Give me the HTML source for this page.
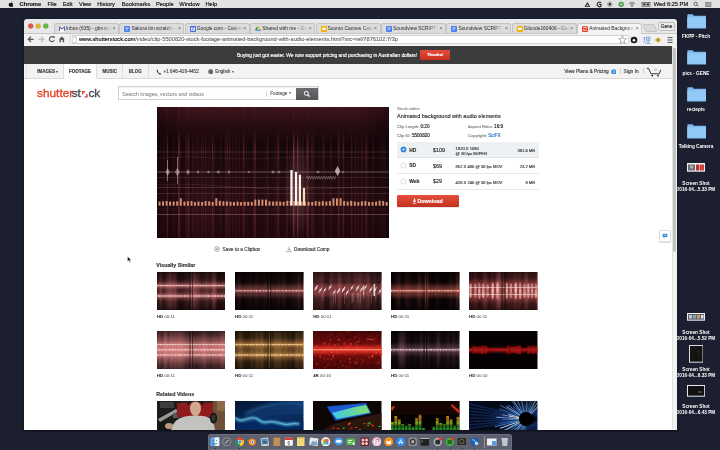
<!DOCTYPE html>
<html><head><meta charset="utf-8">
<style>
*{margin:0;padding:0;box-sizing:border-box}
html,body{width:720px;height:450px;overflow:hidden}
body{-webkit-font-smoothing:antialiased;will-change:transform;background:#1b1f30;font-family:"Liberation Sans",sans-serif;position:relative}
.a{position:absolute}
.t{position:absolute;white-space:nowrap;line-height:1;-webkit-text-stroke-width:.15px}
.mb{font-size:5.7px;color:#111;top:1.9px}
.tab{position:absolute;top:23px;height:10px;width:65px;background:#dcdcdc;border:1px solid #c4c4c4;border-bottom:none;border-radius:2.5px 2.5px 0 0}
.tab .ic{position:absolute;left:4px;top:2px;width:6px;height:5.5px;border-radius:1px}
.tab .tx{position:absolute;left:11px;top:1.9px;font-size:4.9px;color:#262626;white-space:nowrap;overflow:hidden;width:46px;line-height:1.05}
.tab .x{position:absolute;left:57.5px;top:2px;font-size:5px;color:#666;line-height:1}
.sm{font-size:4.4px;color:#555}
.th{position:absolute;width:68.5px;height:38px;overflow:hidden}
.lab{position:absolute;font-size:4.4px;color:#3c3c3c;line-height:1;white-space:nowrap}
.lab b{color:#222}
.di{position:absolute;top:437px;width:9.5px;height:9.5px;border-radius:2px}
.dl{position:absolute;font-size:4.7px;font-weight:bold;color:#fff;text-align:center;width:60px;line-height:1;white-space:nowrap}
</style></head><body>
<div class="a" style="left:207.8px;top:433.8px;width:304px;height:16.5px;background:#5d606f;border:.5px solid #6c6f7e;border-radius:2px 2px 0 0"></div>
<svg class="a" style="left:210.25px;top:436.8px" width="9.5" height="9.5" viewBox="0 0 9.5 9.5"><rect x=".3" y=".3" width="9" height="9" rx="1.5" fill="#5aa8f0"/><rect x="4.6" y=".3" width="4.7" height="9" rx="1" fill="#e8f0f8"/><path d="M3 3V4M6.5 3V4M2.5 6.5Q4.8 8 7 6.5" stroke="#123" stroke-width=".5" fill="none"/></svg>
<svg class="a" style="left:222.45px;top:436.8px" width="9.5" height="9.5" viewBox="0 0 9.5 9.5"><circle cx="4.75" cy="4.75" r="4.5" fill="#8a8f98"/><circle cx="4.75" cy="4.75" r="3.6" fill="#5a5f68"/><path d="M3 6.5L6.5 3" stroke="#ddd" stroke-width="1"/></svg>
<svg class="a" style="left:234.75px;top:436.8px" width="9.5" height="9.5" viewBox="0 0 9.5 9.5"><circle cx="4.75" cy="4.75" r="4.5" fill="#db4437"/><path d="M4.75 4.75L8.6 2.5A4.5 4.5 0 0 1 4.75 9.25Z" fill="#f4c20d"/><path d="M4.75 4.75L4.75 9.25A4.5 4.5 0 0 1 .9 2.5Z" fill="#0f9d58"/><circle cx="4.75" cy="4.75" r="2" fill="#fff"/><circle cx="4.75" cy="4.75" r="1.5" fill="#4285f4"/></svg>
<svg class="a" style="left:247.25px;top:436.8px" width="9.5" height="9.5" viewBox="0 0 9.5 9.5"><circle cx="5.2" cy="5" r="3.6" fill="#f08a20"/><circle cx="5.4" cy="5" r="1.8" fill="#fff"/><circle cx="5.4" cy="5" r="1" fill="#2a5aa0"/><path d="M.5 3.5L3 4.5" stroke="#f08a20" stroke-width="1"/></svg>
<svg class="a" style="left:259.65px;top:436.8px" width="9.5" height="9.5" viewBox="0 0 9.5 9.5"><rect x="1" y="1" width="7.5" height="8" fill="#ddd" transform="rotate(-8 5 5)"/><rect x="1.8" y="1.8" width="6" height="5.5" fill="#4a88c8" transform="rotate(-8 5 5)"/><path d="M2.5 6L4.5 3.8 7 6Z" fill="#3a6030"/></svg>
<svg class="a" style="left:271.95px;top:436.8px" width="9.5" height="9.5" viewBox="0 0 9.5 9.5"><rect x="1.2" y=".5" width="7.2" height="8.8" rx=".5" fill="#a87c48"/><rect x="1.8" y="1" width="6" height="7.8" fill="#c09058"/></svg>
<svg class="a" style="left:284.25px;top:436.8px" width="9.5" height="9.5" viewBox="0 0 9.5 9.5"><rect x=".8" y=".8" width="8" height="8" rx="1" fill="#fafafa"/><rect x=".8" y=".8" width="8" height="2.2" fill="#e03a2e"/><text x="4.8" y="7.8" font-size="4.5" text-anchor="middle" fill="#222" font-family="Liberation Sans">6</text></svg>
<svg class="a" style="left:296.45px;top:436.8px" width="9.5" height="9.5" viewBox="0 0 9.5 9.5"><rect x="1" y=".5" width="7.5" height="8.8" fill="#f8e080"/><rect x="1" y=".5" width="7.5" height="1.5" fill="#e8c850"/><path d="M2 3.5H7.5M2 5H7.5M2 6.5H7.5" stroke="#c8b060" stroke-width=".3"/></svg>
<svg class="a" style="left:309.05px;top:436.8px" width="9.5" height="9.5" viewBox="0 0 9.5 9.5"><rect x=".5" y="1" width="8.5" height="7.5" fill="#e8e8e8" transform="rotate(6 5 5)"/><path d="M1.5 7L4 3.5 6 5.5 8 3V8H1.5Z" fill="#70a8d0"/></svg>
<svg class="a" style="left:321.35px;top:436.8px" width="9.5" height="9.5" viewBox="0 0 9.5 9.5"><circle cx="4.75" cy="4.75" r="4.5" fill="#fff"/><circle cx="3.5" cy="3.5" r="1.8" fill="#f4a020"/><circle cx="6" cy="3.5" r="1.8" fill="#e04040" opacity=".8"/><circle cx="6" cy="6" r="1.8" fill="#4080e0" opacity=".8"/><circle cx="3.5" cy="6" r="1.8" fill="#40c060" opacity=".8"/></svg>
<svg class="a" style="left:333.85px;top:436.8px" width="9.5" height="9.5" viewBox="0 0 9.5 9.5"><ellipse cx="4.75" cy="4.4" rx="4.5" ry="3.8" fill="#3fa2f2"/><path d="M2 8.5L3 6.5 4.5 7.5Z" fill="#3fa2f2"/><ellipse cx="4.75" cy="4.4" rx="3" ry="1.4" fill="#fff"/></svg>
<svg class="a" style="left:346.25px;top:436.8px" width="9.5" height="9.5" viewBox="0 0 9.5 9.5"><rect x=".5" y="1.5" width="8.5" height="6.5" rx="1.5" fill="#58c050"/><path d="M2 3.5H6M2 5.5H5" stroke="#fff" stroke-width=".8"/><path d="M6 6.5L8.5 8.5V5Z" fill="#fff"/></svg>
<svg class="a" style="left:359.65px;top:436.8px" width="9.5" height="9.5" viewBox="0 0 9.5 9.5"><rect x=".5" y=".5" width="8.5" height="8.5" rx="1" fill="#7a2020"/><circle cx="3" cy="3" r="1.5" fill="#f0c8c8"/><circle cx="6.5" cy="3" r="1.5" fill="#f0c8c8"/><circle cx="3" cy="6.5" r="1.5" fill="#f0c8c8"/><circle cx="6.5" cy="6.5" r="1.5" fill="#f0c8c8"/></svg>
<svg class="a" style="left:371.55px;top:436.8px" width="9.5" height="9.5" viewBox="0 0 9.5 9.5"><circle cx="4.75" cy="4.75" r="4.5" fill="#f8f8fa"/><circle cx="4.75" cy="4.75" r="3.6" fill="none" stroke="#e04870" stroke-width=".5"/><path d="M4 6.5V2.5L6.5 2V5.5" stroke="#e04870" stroke-width=".7" fill="none"/></svg>
<svg class="a" style="left:383.65px;top:436.8px" width="9.5" height="9.5" viewBox="0 0 9.5 9.5"><circle cx="4.75" cy="4.75" r="4.5" fill="#f29020"/><path d="M2.5 3.5L4.6 4.2V7.5L2.5 6.8ZM7 3.5L4.9 4.2V7.5L7 6.8Z" fill="#fff"/></svg>
<svg class="a" style="left:395.65px;top:436.8px" width="9.5" height="9.5" viewBox="0 0 9.5 9.5"><circle cx="4.75" cy="4.75" r="4.5" fill="#2c8ef0"/><path d="M3 7L4.75 2.5 6.5 7M2.5 5.5H7" stroke="#fff" stroke-width=".8" fill="none"/></svg>
<svg class="a" style="left:407.95px;top:436.8px" width="9.5" height="9.5" viewBox="0 0 9.5 9.5"><rect x=".5" y=".5" width="8.5" height="8.5" rx="1.5" fill="#8a8d95"/><circle cx="4.75" cy="4.75" r="3" fill="#333" /><circle cx="4.75" cy="4.75" r="1.8" fill="#aaa"/></svg>
<svg class="a" style="left:420.25px;top:436.8px" width="9.5" height="9.5" viewBox="0 0 9.5 9.5"><rect x=".5" y="1" width="8.5" height="7.8" rx=".8" fill="#222"/><rect x=".5" y="1" width="8.5" height="1" fill="#bbb"/><path d="M1.5 3.5L3 4.5 1.5 5.5" stroke="#ddd" stroke-width=".4" fill="none"/></svg>
<svg class="a" style="left:433.05px;top:436.8px" width="9.5" height="9.5" viewBox="0 0 9.5 9.5"><circle cx="4.75" cy="5" r="4.2" fill="#b0b0b0"/><circle cx="4.75" cy="5" r="2.6" fill="#303030"/><circle cx="7.5" cy="1.8" r="1.7" fill="#e03a30"/></svg>
<svg class="a" style="left:445.25px;top:436.8px" width="9.5" height="9.5" viewBox="0 0 9.5 9.5"><circle cx="4.75" cy="5" r="4.3" fill="#40b040"/><rect x="2.5" y="3" width="4.5" height="4" fill="#207020"/><circle cx="7.5" cy="1.8" r="1.7" fill="#e03a30"/></svg>
<svg class="a" style="left:457.25px;top:436.8px" width="9.5" height="9.5" viewBox="0 0 9.5 9.5"><rect x=".2" y=".8" width="9.1" height="7.5" fill="#2a2a2a" stroke="#888" stroke-width=".3"/><circle cx="4.75" cy="4.5" r="2.2" fill="none" stroke="#8a9a40" stroke-width=".6"/></svg>
<svg class="a" style="left:469.65px;top:436.8px" width="9.5" height="9.5" viewBox="0 0 9.5 9.5"><circle cx="4.75" cy="4.75" r="4.3" fill="#2060b0"/><path d="M2 3Q4 2 5 4T8 6" stroke="#90c8ff" stroke-width="1" fill="none"/><circle cx="6.5" cy="6.5" r="1.8" fill="#e8e8f0" opacity=".8"/></svg>
<svg class="a" style="left:487.25px;top:436.8px" width="9.5" height="9.5" viewBox="0 0 9.5 9.5"><rect x="0" y="1.5" width="9.5" height="7" fill="#f0f0f4"/><rect x="5" y="4" width="4.5" height="4.5" fill="#5a9ae0"/></svg>
<svg class="a" style="left:499.65px;top:436.8px" width="9.5" height="9.5" viewBox="0 0 9.5 9.5"><path d="M1.8 2H7.7L7.1 9.3H2.4Z" fill="#c8ccd0" stroke="#9aa" stroke-width=".3"/><rect x="1.4" y="1.2" width="6.7" height="1" fill="#dde"/><path d="M3.5 3V8.5M4.75 3V8.5M6 3V8.5" stroke="#aab" stroke-width=".3"/></svg>
<div class="a" style="left:214.6px;top:448.4px;width:.9px;height:.9px;background:#111;border-radius:50%"></div>
<div class="a" style="left:239.1px;top:448.4px;width:.9px;height:.9px;background:#111;border-radius:50%"></div>
<div class="a" style="left:437.40000000000003px;top:448.4px;width:.9px;height:.9px;background:#111;border-radius:50%"></div>
<div class="a" style="left:449.6px;top:448.4px;width:.9px;height:.9px;background:#111;border-radius:50%"></div>
<div class="a" style="left:461.6px;top:448.4px;width:.9px;height:.9px;background:#111;border-radius:50%"></div>
<div class="a" style="left:474.0px;top:448.4px;width:.9px;height:.9px;background:#111;border-radius:50%"></div>
<div class="a" style="left:483.5px;top:436px;width:.5px;height:12px;background:rgba(255,255,255,.35)"></div>
<svg class="a" style="left:686.5px;top:13.5px" width="19.5" height="15" viewBox="0 0 19.5 15"><path d="M.3 1.2Q.3.3 1.2.3H5.6L6.8 1.8H18.5Q19.2 1.8 19.2 2.6V14H.3Z" fill="#7db9ee"/><path d="M.3 3.3H19.2V14.3H.3Z" fill="#92c9f6"/><path d="M.3 14.3H19.2" stroke="#5f9fd8" stroke-width=".5"/></svg>
<div class="dl" style="left:666px;top:34.9px">FKPP - Pitch</div>
<svg class="a" style="left:686.5px;top:50.3px" width="19.5" height="15" viewBox="0 0 19.5 15"><path d="M.3 1.2Q.3.3 1.2.3H5.6L6.8 1.8H18.5Q19.2 1.8 19.2 2.6V14H.3Z" fill="#7db9ee"/><path d="M.3 3.3H19.2V14.3H.3Z" fill="#92c9f6"/><path d="M.3 14.3H19.2" stroke="#5f9fd8" stroke-width=".5"/></svg>
<div class="dl" style="left:666px;top:72.1px">pics - GENE</div>
<svg class="a" style="left:686.5px;top:87px" width="19.5" height="15" viewBox="0 0 19.5 15"><path d="M.3 1.2Q.3.3 1.2.3H5.6L6.8 1.8H18.5Q19.2 1.8 19.2 2.6V14H.3Z" fill="#7db9ee"/><path d="M.3 3.3H19.2V14.3H.3Z" fill="#92c9f6"/><path d="M.3 14.3H19.2" stroke="#5f9fd8" stroke-width=".5"/></svg>
<div class="dl" style="left:666px;top:108.2px">reciepts</div>
<svg class="a" style="left:686.5px;top:123.7px" width="19.5" height="15" viewBox="0 0 19.5 15"><path d="M.3 1.2Q.3.3 1.2.3H5.6L6.8 1.8H18.5Q19.2 1.8 19.2 2.6V14H.3Z" fill="#7db9ee"/><path d="M.3 3.3H19.2V14.3H.3Z" fill="#92c9f6"/><path d="M.3 14.3H19.2" stroke="#5f9fd8" stroke-width=".5"/></svg>
<div class="dl" style="left:666px;top:145px">Talking Camera</div>
<svg class="a" style="left:687px;top:163px" width="18" height="8.7" viewBox="0 0 18 8.7"><rect width="18" height="8.7" fill="#f2f2f2"/><rect x="1" y="1.5" width="7" height="6" fill="#6a6a70"/><rect x="9" y="1.5" width="3" height="6" fill="#c03030"/><rect x="12.5" y="1.5" width="4.5" height="6" fill="#d04040"/><rect x="3" y="2.5" width="3" height="3" fill="#b0b0b0"/></svg>
<div class="dl" style="left:666px;top:182.4px">Screen Shot</div>
<div class="dl" style="left:666px;top:188.3px">2016-04...5.33 PM</div>
<svg class="a" style="left:687px;top:313px" width="18" height="7.7" viewBox="0 0 18 7.7"><rect width="18" height="7.7" fill="#f2f2f2"/><rect x="1" y="1" width="16" height="5.7" fill="#5a6070"/><rect x="2" y="2" width="3" height="3.5" fill="#c0c8d0"/><rect x="6" y="2" width="3" height="3.5" fill="#90a0b0"/><rect x="10" y="2" width="3" height="3.5" fill="#d0a060"/><rect x="14" y="2" width="2.5" height="3.5" fill="#e0e0e0"/></svg>
<div class="dl" style="left:666px;top:331.4px">Screen Shot</div>
<div class="dl" style="left:666px;top:337.3px">2016-04...5.52 PM</div>
<svg class="a" style="left:688.5px;top:345px" width="14.5" height="17.7" viewBox="0 0 14.5 17.7"><rect width="14.5" height="17.7" fill="#dcdcdc"/><rect x="1" y="1" width="12.5" height="15.7" fill="#141414"/><circle cx="9" cy="6" r=".4" fill="#4a4"/><circle cx="10" cy="8" r=".4" fill="#4a4"/><circle cx="5" cy="10" r=".3" fill="#4a4"/></svg>
<div class="dl" style="left:666px;top:367.7px">Screen Shot</div>
<div class="dl" style="left:666px;top:373.5px">2016-04...6.33 PM</div>
<svg class="a" style="left:686.8px;top:385px" width="18.2" height="11.7" viewBox="0 0 18.2 11.7"><rect width="18.2" height="11.7" fill="#e8e8e8"/><rect x="1" y="1" width="16.2" height="9.7" fill="#111"/><rect x="11" y="6.5" width="2" height="1" fill="#999"/><rect x="14" y="6.5" width="1" height="1" fill="#999"/></svg>
<div class="dl" style="left:666px;top:405px">Screen Shot</div>
<div class="dl" style="left:666px;top:410.8px">2016-04...6.43 PM</div><!-- MENU BAR -->
<div class="a" style="left:0;top:0;width:720px;height:8px;background:#e2e2e5"></div>
<svg class="a" style="left:7.5px;top:1px" width="6" height="6.5" viewBox="0 0 6 6.5"><path d="M3.1 1.7C3.3 1.1 3.8.6 4.3.6 4.3 1.1 3.9 1.7 3.2 1.8ZM1.9 1.9C2.4 1.9 2.7 2.1 3 2.1 3.3 2.1 3.6 1.9 4.1 1.9 4.5 1.9 4.9 2.1 5.2 2.5 4.7 2.8 4.5 3.3 4.6 3.7 4.7 4.1 5 4.4 5.3 4.5 5.1 5.1 4.6 5.9 4.1 5.9 3.7 5.9 3.5 5.7 3.1 5.7 2.6 5.7 2.4 5.9 2 5.9 1.4 5.8.7 4.7.7 3.6.7 2.6 1.3 1.9 1.9 1.9Z" fill="#111"/></svg>
<div class="t mb" style="left:19.6px;font-weight:bold">Chrome</div>
<div class="t mb" style="left:47.5px">File</div>
<div class="t mb" style="left:62.8px">Edit</div>
<div class="t mb" style="left:79px">View</div>
<div class="t mb" style="left:97.2px">History</div>
<div class="t mb" style="left:121.8px">Bookmarks</div>
<div class="t mb" style="left:156px">People</div>
<div class="t mb" style="left:179.3px">Window</div>
<div class="t mb" style="left:205.5px">Help</div>
<div class="t mb" style="left:653.8px">Wed 6:25 PM</div>
<!-- status icons -->
<svg class="a" style="left:583px;top:1px" width="130" height="6.5" viewBox="0 0 130 6.5">
  <path d="M4.4 .9L7.3 5.7H1.5Z" fill="#222"/><path d="M4.4 3L5.5 4.9H3.3Z" fill="#e2e2e5"/>
  <path d="M18 1.6A2.3 2.3 0 1 0 18 5.2V3.3H15.9" fill="none" stroke="#222" stroke-width="1.1"/>
  <circle cx="26.8" cy="3.3" r="2.3" fill="none" stroke="#777" stroke-width=".6"/><circle cx="26.8" cy="3.3" r="1.2" fill="#222"/>
  <circle cx="38.2" cy="3.3" r="2.6" fill="#3a8f45"/><circle cx="38.2" cy="3.3" r="1.5" fill="#9bd47a"/>
  <path d="M46 2.4Q49 0 52 2.4M46.9 3.4Q49 1.8 51.1 3.4M47.8 4.4Q49 3.5 50.2 4.4M49 5.8L48.5 5L49.5 5Z" fill="none" stroke="#444" stroke-width=".6"/>
  <rect x="59" y="1.6" width="8" height="3.6" fill="none" stroke="#333" stroke-width=".6"/><rect x="60" y="2.4" width="2.6" height="2" fill="#333"/><rect x="63.4" y="2.4" width="2.6" height="2" fill="#333"/>
  <circle cx="112.6" cy="2.8" r="1.7" fill="none" stroke="#333" stroke-width=".7"/><path d="M113.8 4L115.2 5.4" stroke="#333" stroke-width=".8"/>
  <path d="M122 1.6H128.5M122 2.9H128.5M122 4.2H128.5M122 5.4H128.5" stroke="#444" stroke-width=".6"/>
</svg>

<!-- WINDOW FRAME -->
<div class="a" style="left:24px;top:19px;width:653px;height:411px;border-radius:3px 3px 1px 1px;box-shadow:0 1px 3px rgba(0,0,0,.55)"></div>
<div class="a" style="left:24px;top:19px;width:653px;height:14px;background:#e8e8e8;border-radius:3px 3px 0 0"></div>
<svg class="a" style="left:26px;top:22px" width="24" height="9"><circle cx="4.7" cy="4.1" r="2.5" fill="#e0564d" stroke="#c4453d" stroke-width=".3"/><circle cx="12.2" cy="4.1" r="2.5" fill="#e2b43a" stroke="#c89a2e" stroke-width=".3"/><circle cx="19.8" cy="4.1" r="2.5" fill="#60b849" stroke="#4a9a38" stroke-width=".3"/></svg>
<div class="tab" style="left:54.0px"><svg class="ic" viewBox="0 0 5 5" preserveAspectRatio="none" style="background:#fff"><path d="M.4 4.5V.8L2.5 2.6 4.6.8V4.5" fill="none" stroke="#3d6fd8" stroke-width=".9"/><path d="M.4 .8L2.5 2.6 4.6.8" fill="none" stroke="#d93a2f" stroke-width=".5"/></svg><div class="tx" style="-webkit-mask-image:linear-gradient(90deg,#000 75%,transparent)">Inbox (635) - gbruttydrive</div><div class="x">×</div></div>
<div class="tab" style="left:119.4px"><svg class="ic" viewBox="0 0 5 5" preserveAspectRatio="none" style="background:#4b7ef0"><path d="M1.2 1.5H3.8M1.2 2.5H3.8M1.2 3.5H3" stroke="#fff" stroke-width=".45"/></svg><div class="tx" style="-webkit-mask-image:linear-gradient(90deg,#000 75%,transparent)">Sakura tim scratch - Google</div><div class="x">×</div></div>
<div class="tab" style="left:184.8px"><svg class="ic" viewBox="0 0 5 5" preserveAspectRatio="none" style="background:#3e6fdb"><rect x=".8" y="1.2" width="3.4" height="3" fill="#fff"/><text x="2.5" y="3.9" font-size="2.6" text-anchor="middle" fill="#3e6fdb" font-family="Liberation Sans" font-weight="bold">31</text></svg><div class="tx" style="-webkit-mask-image:linear-gradient(90deg,#000 75%,transparent)">Google.com - Calendar</div><div class="x">×</div></div>
<div class="tab" style="left:250.2px"><svg class="ic" viewBox="0 0 5 5" preserveAspectRatio="none"><path d="M1.7.5H3.3L5 3.4 4.2 4.6Z" fill="#f6c02f"/><path d="M1.7.5L0 3.4.8 4.6 2.5 1.9Z" fill="#1ea362"/><path d="M.8 4.6H4.2L5 3.4H1.6Z" fill="#4a86e8"/></svg><div class="tx" style="-webkit-mask-image:linear-gradient(90deg,#000 75%,transparent)">Shared with me - Google</div><div class="x">×</div></div>
<div class="tab" style="left:315.6px"><svg class="ic" viewBox="0 0 5 5" preserveAspectRatio="none" style="background:#f4b400"><rect x="1" y="1.5" width="3" height="2" fill="#fff"/></svg><div class="tx" style="-webkit-mask-image:linear-gradient(90deg,#000 75%,transparent)">Suumo Cannes Case Study</div><div class="x">×</div></div>
<div class="tab" style="left:381.0px"><svg class="ic" viewBox="0 0 5 5" preserveAspectRatio="none" style="background:#4b7ef0"><path d="M1.2 1.5H3.8M1.2 2.5H3.8M1.2 3.5H3" stroke="#fff" stroke-width=".45"/></svg><div class="tx" style="-webkit-mask-image:linear-gradient(90deg,#000 75%,transparent)">Soundview SCRIPT w/ notes</div><div class="x">×</div></div>
<div class="tab" style="left:446.4px"><svg class="ic" viewBox="0 0 5 5" preserveAspectRatio="none" style="background:#4b7ef0"><path d="M1.2 1.5H3.8M1.2 2.5H3.8M1.2 3.5H3" stroke="#fff" stroke-width=".45"/></svg><div class="tx" style="-webkit-mask-image:linear-gradient(90deg,#000 75%,transparent)">Soundview SCRIPT - Google</div><div class="x">×</div></div>
<div class="tab" style="left:511.8px"><svg class="ic" viewBox="0 0 5 5" preserveAspectRatio="none" style="background:#f4b400"><rect x="1" y="1.5" width="3" height="2" fill="#fff"/></svg><div class="tx" style="-webkit-mask-image:linear-gradient(90deg,#000 75%,transparent)">Glicode160406 - Google</div><div class="x">×</div></div>
<div class="tab" style="left:577.2px;background:#f4f4f4;border-color:#c8c8c8;height:11px;z-index:2"><svg class="ic" viewBox="0 0 5 5" preserveAspectRatio="none" style="background:#e5422b"><path d="M1 1.2H3.8V2.2M4 3.8H1.2V2.8" fill="none" stroke="#fff" stroke-width=".7"/></svg><div class="tx" style="-webkit-mask-image:linear-gradient(90deg,#000 80%,transparent)">Animated Background</div><div class="x">×</div></div>
<div class="a" style="left:644px;top:24px;width:12px;height:8px;background:#d8d8d8;border:1px solid #c4c4c4;border-radius:1.5px;transform:skewX(20deg)"></div>
<div class="a" style="left:658.3px;top:21.7px;width:16.7px;height:9.3px;background:#ededed;border:.6px solid #bdbdbd;border-radius:1.5px"></div>
<div class="t" style="left:660.7px;top:25.1px;font-size:4.8px;color:#2a2a2a">Gene</div>
<!-- TOOLBAR -->
<div class="a" style="left:24px;top:33px;width:653px;height:13px;background:#f1f1f1;border-top:1px solid #c6c6c6"></div>
<svg class="a" style="left:24px;top:33px" width="50" height="13" viewBox="0 0 50 13">
  <path d="M4.6 6.3H9.6M7 3.6L4.3 6.3 7 9" fill="none" stroke="#555" stroke-width="1.2"/>
  <path d="M14.4 6.3H19.4M17 3.6L19.7 6.3 17 9" fill="none" stroke="#bdbdbd" stroke-width="1.2"/>
  <path d="M29.6 4.3A2.5 2.5 0 1 0 30.2 7.2" fill="none" stroke="#555" stroke-width="1.1"/><path d="M28.3 3.2L30.7 3.2 30.7 5.6Z" fill="#555"/>
  <path d="M35.5 9.2V5.6L37.8 3.4 40.1 5.6V9.2H38.7V7H36.9V9.2Z" fill="#555"/>
</svg>
<div class="a" style="left:69.5px;top:34.6px;width:559px;height:9.6px;background:#fff;border:1px solid #d2d2d2;border-radius:1.5px"></div>
<svg class="a" style="left:71px;top:36px" width="7" height="7" viewBox="0 0 7 7"><path d="M1.3.6H4.2L5.6 2V6.4H1.3Z M4.2.6V2H5.6" fill="none" stroke="#9a9a9a" stroke-width=".45"/></svg>
<div class="t" style="left:79px;top:37.1px;font-size:5.66px;color:#111">www.shutterstock.com<span style="color:#6e6e6e">/video/clip-5500820-stock-footage-animated-background-with-audio-elements.html?src=rel/7876102:7/3p</span></div>
<svg class="a" style="left:617px;top:35px" width="60" height="10" viewBox="0 0 60 10">
  <path d="M5.5 .9L6.6 3.6 9.4 3.7 7.2 5.5 8 8.3 5.5 6.7 3 8.3 3.8 5.5 1.6 3.7 4.4 3.6Z" fill="none" stroke="#777" stroke-width=".55"/>
  <circle cx="17" cy="5" r="3.3" fill="#1a1a1a"/><circle cx="17" cy="5.3" r="1.3" fill="#fff"/>
  <text x="25.5" y="8.4" font-size="7.5" fill="#3b7fd4" font-family="Liberation Serif">理</text>
  <path d="M41 2.2L44.2 5 41 7.8 37.8 5Z" fill="#f0a020"/><path d="M41 3.6L42.8 5 41 6.4 39.2 5Z" fill="#6cb33e"/>
  <path d="M50.5 2.6H55.5M50.5 5H55.5M50.5 7.4H55.5" stroke="#555" stroke-width="1"/>
</svg>
<!-- PAGE -->
<div class="a" style="left:24px;top:46px;width:648px;height:384px;background:#fff"></div>
<div class="a" style="left:672px;top:46px;width:5px;height:384px;background:#f3f3f3;border-left:1px solid #e2e2e2"></div>
<div class="a" style="left:673.2px;top:48px;width:2.8px;height:204px;background:#c2c2c2;border-radius:1.4px"></div>
<!-- banner -->
<div class="a" style="left:24px;top:46px;width:648px;height:18px;background:#3c3c3c"></div>
<div class="t" style="left:237px;top:53.5px;font-size:4.9px;color:#fff">Buying just got easier. We now support pricing and purchasing in Australian dollars!</div>
<div class="a" style="left:420px;top:50px;width:30px;height:10px;background:linear-gradient(#e5493a,#c9321f);border-radius:1px"></div>
<div class="t" style="left:427px;top:53px;font-size:4.3px;color:#fff;font-weight:bold">Thanks!</div>
<!-- nav -->
<div class="a" style="left:24px;top:64px;width:648px;height:14.5px;background:#f3f3f3;border-bottom:1px solid #dadada"></div>
<div class="a" style="left:26px;top:64px;width:1px;height:14px;background:#e2e2e2"></div>
<div class="a" style="left:63.4px;top:64px;width:33.4px;height:15px;background:#fff;border-left:1px solid #dedede;border-right:1px solid #dedede"></div>
<div class="a" style="left:122px;top:64px;width:1px;height:14px;background:#dedede"></div>
<div class="a" style="left:147.8px;top:64px;width:1px;height:14px;background:#dedede"></div>
<div class="t" style="left:37.2px;top:70.2px;font-size:4.5px;color:#3e3e3e;font-weight:bold">IMAGES</div>
<div class="t" style="left:56.2px;top:70.4px;font-size:4px;color:#555">▾</div>
<div class="t" style="left:69px;top:70.2px;font-size:4.5px;color:#333;font-weight:bold">FOOTAGE</div>
<div class="t" style="left:102.6px;top:70.2px;font-size:4.45px;color:#3e3e3e;font-weight:bold">MUSIC</div>
<div class="t" style="left:128.8px;top:70.2px;font-size:4.45px;color:#3e3e3e;font-weight:bold">BLOG</div>
<svg class="a" style="left:155.5px;top:68.6px" width="6" height="6" viewBox="0 0 6 6"><path d="M1.2.6C.6 1 .5 1.8 1 2.8 1.6 4 2.6 5 3.6 5.4 4.3 5.7 4.8 5.5 5.2 5L4.1 3.9 3.5 4.3C2.9 4 2.1 3.2 1.8 2.6L2.2 2Z" fill="#333"/></svg>
<div class="t" style="left:163.6px;top:70.1px;font-size:4.6px;color:#4a4a4a">+1 646-419-4452</div>
<svg class="a" style="left:208px;top:68.6px" width="5.5" height="5.5" viewBox="0 0 6 6"><circle cx="3" cy="3" r="2.6" fill="#333"/><path d="M1.6 1.2Q2.6 2 2 2.8 1.4 3.3 2.2 4.2L2.6 5.5M3.6 .6Q3.4 1.6 4.2 1.8 5 2.2 4.6 3.2 4.1 4 4.8 4.8" fill="none" stroke="#f3f3f3" stroke-width=".7"/></svg>
<div class="t" style="left:215.2px;top:70.1px;font-size:4.6px;color:#4a4a4a">English</div>
<div class="t" style="left:232.2px;top:70.4px;font-size:4px;color:#666">▾</div>
<div class="t" style="left:564.2px;top:70.1px;font-size:4.85px;color:#3e3e3e">View Plans &amp; Pricing</div>
<svg class="a" style="left:610.5px;top:68.8px" width="5.5" height="5.5" viewBox="0 0 6 6"><circle cx="3" cy="3" r="2.8" fill="#3a8fd6"/><path d="M2.3 1.6L3.8 3 2.3 4.4" fill="none" stroke="#fff" stroke-width=".8"/></svg>
<div class="a" style="left:619.8px;top:68px;width:.6px;height:6px;background:#d0d0d0"></div>
<div class="t" style="left:623.6px;top:70.1px;font-size:4.85px;color:#3e3e3e">Sign In</div>
<div class="a" style="left:642.6px;top:68px;width:.6px;height:6px;background:#d0d0d0"></div>
<svg class="a" style="left:646px;top:65.5px" width="16" height="11" viewBox="0 0 16 11"><path d="M.8 2.4H2.6L5 7.8H13.2L14.8 3.8" fill="none" stroke="#222" stroke-width=".9"/><circle cx="6.2" cy="9.6" r=".9" fill="#222"/><circle cx="12" cy="9.6" r=".9" fill="#222"/><text x="8.6" y="4.6" font-size="3.6" fill="#3a8fd6" font-family="Liberation Sans">0</text></svg>
<!-- logo -->
<div class="t" style="left:37.1px;top:87.9px;font-size:11.8px;color:#e5422b;-webkit-text-stroke:.35px #e5422b">shutter</div>
<div class="t" style="left:71.7px;top:87.9px;font-size:11.8px;color:#434a59;-webkit-text-stroke:.35px #434a59">st</div>
<svg class="a" style="left:82.4px;top:90.9px" width="6" height="7" viewBox="0 0 6 7"><path d="M.7 3.3V.7H3.1M4.9 3.1V5.9H2.5" fill="none" stroke="#e5422b" stroke-width="1.4"/></svg>
<div class="t" style="left:88.4px;top:87.9px;font-size:11.8px;color:#434a59;-webkit-text-stroke:.35px #434a59">ck</div>
<!-- search -->
<div class="a" style="left:118px;top:86.4px;width:200.5px;height:13.8px;background:#fff;border:1px solid #cfcfcf;box-shadow:inset 0 1px 1px rgba(0,0,0,.06)"></div>
<div class="t" style="left:122.2px;top:91.7px;font-size:5.25px;color:#9a9a9a">Search images, vectors and videos</div>
<div class="a" style="left:265.5px;top:90.5px;width:.6px;height:6px;background:#d8d8d8"></div>
<div class="t" style="left:270.2px;top:91.7px;font-size:4.7px;color:#666">Footage</div>
<div class="t" style="left:288.6px;top:92.2px;font-size:3.6px;color:#666">▾</div>
<div class="a" style="left:296.4px;top:87.5px;width:21.4px;height:12px;background:linear-gradient(#6c6c70,#56565a)"></div>
<svg class="a" style="left:303px;top:90px" width="8" height="8" viewBox="0 0 8 8"><circle cx="3.3" cy="3.3" r="2" fill="none" stroke="#fff" stroke-width="1"/><path d="M4.7 4.7L6.6 6.6" stroke="#fff" stroke-width="1.3"/></svg>
<svg class="a" style="left:157px;top:107px" width="232" height="131" viewBox="0 0 232 131">
<defs>
<linearGradient id="vbg" x1="0" y1="0" x2="0" y2="1"><stop offset="0" stop-color="#3c141c"/><stop offset=".12" stop-color="#2a0e14"/><stop offset=".28" stop-color="#14070a"/><stop offset=".5" stop-color="#1e0a0e"/><stop offset=".75" stop-color="#260c12"/><stop offset="1" stop-color="#1e080c"/></linearGradient>
<linearGradient id="vstreak" x1="0" y1="0" x2="0" y2="1"><stop offset="0" stop-color="#e85a6a" stop-opacity=".1"/><stop offset=".17" stop-color="#e85a6a" stop-opacity=".02"/><stop offset=".33" stop-color="#e85a6a" stop-opacity=".55"/><stop offset=".5" stop-color="#e85a6a" stop-opacity=".25"/><stop offset=".82" stop-color="#e85a6a" stop-opacity=".45"/><stop offset="1" stop-color="#e85a6a" stop-opacity=".3"/></linearGradient>
<radialGradient id="glow" cx=".5" cy=".5" r=".5"><stop offset="0" stop-color="#ffd0d0" stop-opacity=".35"/><stop offset="1" stop-color="#ffd0d0" stop-opacity="0"/></radialGradient>
<linearGradient id="hband" x1="0" y1="0" x2="1" y2="0"><stop offset="0" stop-color="#000" stop-opacity=".3"/><stop offset=".12" stop-color="#000" stop-opacity="0"/><stop offset=".88" stop-color="#000" stop-opacity="0"/><stop offset="1" stop-color="#000" stop-opacity=".3"/></linearGradient>
<filter id="vsb" x="-5%" y="0" width="110%" height="100%"><feGaussianBlur stdDeviation=".5 0"/></filter>
</defs>
<rect width="232" height="131" fill="url(#vbg)"/>
<g filter="url(#vsb)">
<rect x="55.2" y="0" width="1.1" height="131" fill="url(#vstreak)" opacity="0.14"/>
<rect x="140.1" y="0" width="1.2" height="131" fill="url(#vstreak)" opacity="0.07"/>
<rect x="3.1" y="0" width="1.4" height="131" fill="url(#vstreak)" opacity="0.11"/>
<rect x="54.4" y="0" width="1.6" height="131" fill="url(#vstreak)" opacity="0.17"/>
<rect x="194.1" y="0" width="1.0" height="131" fill="url(#vstreak)" opacity="0.21"/>
<rect x="34.9" y="0" width="1.2" height="131" fill="url(#vstreak)" opacity="0.27"/>
<rect x="121.4" y="0" width="1.3" height="131" fill="url(#vstreak)" opacity="0.22"/>
<rect x="14.9" y="0" width="1.3" height="131" fill="url(#vstreak)" opacity="0.20"/>
<rect x="69.9" y="0" width="0.5" height="131" fill="url(#vstreak)" opacity="0.27"/>
<rect x="109.7" y="0" width="1.3" height="131" fill="url(#vstreak)" opacity="0.27"/>
<rect x="165.7" y="0" width="1.5" height="131" fill="url(#vstreak)" opacity="0.15"/>
<rect x="185.8" y="0" width="1.0" height="131" fill="url(#vstreak)" opacity="0.28"/>
<rect x="203.9" y="0" width="0.6" height="131" fill="url(#vstreak)" opacity="0.08"/>
<rect x="50.3" y="0" width="1.6" height="131" fill="url(#vstreak)" opacity="0.16"/>
<rect x="145.4" y="0" width="0.8" height="131" fill="url(#vstreak)" opacity="0.18"/>
<rect x="89.5" y="0" width="0.9" height="131" fill="url(#vstreak)" opacity="0.20"/>
<rect x="135.5" y="0" width="1.5" height="131" fill="url(#vstreak)" opacity="0.22"/>
<rect x="215.5" y="0" width="1.4" height="131" fill="url(#vstreak)" opacity="0.30"/>
<rect x="155.7" y="0" width="0.7" height="131" fill="url(#vstreak)" opacity="0.27"/>
<rect x="223.8" y="0" width="1.5" height="131" fill="url(#vstreak)" opacity="0.19"/>
<rect x="165.6" y="0" width="0.7" height="131" fill="url(#vstreak)" opacity="0.26"/>
<rect x="133.1" y="0" width="0.8" height="131" fill="url(#vstreak)" opacity="0.07"/>
<rect x="198.1" y="0" width="1.6" height="131" fill="url(#vstreak)" opacity="0.07"/>
<rect x="185.7" y="0" width="1.0" height="131" fill="url(#vstreak)" opacity="0.09"/>
<rect x="68.2" y="0" width="1.3" height="131" fill="url(#vstreak)" opacity="0.27"/>
<rect x="10.3" y="0" width="1.2" height="131" fill="url(#vstreak)" opacity="0.06"/>
<rect x="166.7" y="0" width="0.9" height="131" fill="url(#vstreak)" opacity="0.27"/>
<rect x="227.5" y="0" width="1.1" height="131" fill="url(#vstreak)" opacity="0.30"/>
<rect x="71.8" y="0" width="0.6" height="131" fill="url(#vstreak)" opacity="0.20"/>
<rect x="7.3" y="0" width="0.7" height="131" fill="url(#vstreak)" opacity="0.15"/>
<rect x="141.6" y="0" width="0.7" height="131" fill="url(#vstreak)" opacity="0.06"/>
<rect x="201.3" y="0" width="0.8" height="131" fill="url(#vstreak)" opacity="0.29"/>
<rect x="208.0" y="0" width="0.9" height="131" fill="url(#vstreak)" opacity="0.17"/>
<rect x="120.7" y="0" width="1.2" height="131" fill="url(#vstreak)" opacity="0.20"/>
<rect x="129.7" y="0" width="1.2" height="131" fill="url(#vstreak)" opacity="0.29"/>
<rect x="117.6" y="0" width="1.0" height="131" fill="url(#vstreak)" opacity="0.23"/>
<rect x="55.1" y="0" width="0.8" height="131" fill="url(#vstreak)" opacity="0.29"/>
<rect x="120.9" y="0" width="1.1" height="131" fill="url(#vstreak)" opacity="0.05"/>
<rect x="96.3" y="0" width="1.1" height="131" fill="url(#vstreak)" opacity="0.06"/>
<rect x="142.9" y="0" width="1.2" height="131" fill="url(#vstreak)" opacity="0.07"/>
<rect x="145.5" y="0" width="1.0" height="131" fill="url(#vstreak)" opacity="0.22"/>
<rect x="81.8" y="0" width="1.3" height="131" fill="url(#vstreak)" opacity="0.23"/>
<rect x="5.1" y="0" width="0.6" height="131" fill="url(#vstreak)" opacity="0.22"/>
<rect x="223.5" y="0" width="0.8" height="131" fill="url(#vstreak)" opacity="0.16"/>
<rect x="137.5" y="0" width="0.9" height="131" fill="url(#vstreak)" opacity="0.14"/>
<rect x="72.5" y="0" width="0.9" height="131" fill="url(#vstreak)" opacity="0.20"/>
<rect x="69.7" y="0" width="0.9" height="131" fill="url(#vstreak)" opacity="0.24"/>
<rect x="6.2" y="0" width="1.1" height="131" fill="url(#vstreak)" opacity="0.23"/>
<rect x="71.9" y="0" width="0.7" height="131" fill="url(#vstreak)" opacity="0.25"/>
<rect x="55.4" y="0" width="0.7" height="131" fill="url(#vstreak)" opacity="0.16"/>
<rect x="162.0" y="0" width="0.6" height="131" fill="url(#vstreak)" opacity="0.13"/>
<rect x="77.4" y="0" width="1.4" height="131" fill="url(#vstreak)" opacity="0.16"/>
<rect x="198.5" y="0" width="0.7" height="131" fill="url(#vstreak)" opacity="0.13"/>
<rect x="150.9" y="0" width="1.5" height="131" fill="url(#vstreak)" opacity="0.16"/>
<rect x="52.2" y="0" width="0.6" height="131" fill="url(#vstreak)" opacity="0.18"/>
<rect x="44.3" y="0" width="1.4" height="131" fill="url(#vstreak)" opacity="0.26"/>
<rect x="42.6" y="0" width="0.8" height="131" fill="url(#vstreak)" opacity="0.25"/>
<rect x="148.9" y="0" width="1.4" height="131" fill="url(#vstreak)" opacity="0.14"/>
<rect x="30.1" y="0" width="0.8" height="131" fill="url(#vstreak)" opacity="0.25"/>
<rect x="62.9" y="0" width="0.9" height="131" fill="url(#vstreak)" opacity="0.15"/>
<rect x="97.4" y="0" width="1.0" height="131" fill="url(#vstreak)" opacity="0.28"/>
<rect x="36.2" y="0" width="0.5" height="131" fill="url(#vstreak)" opacity="0.29"/>
<rect x="204.2" y="0" width="1.6" height="131" fill="url(#vstreak)" opacity="0.16"/>
<rect x="220.4" y="0" width="1.5" height="131" fill="url(#vstreak)" opacity="0.11"/>
<rect x="173.0" y="0" width="1.4" height="131" fill="url(#vstreak)" opacity="0.22"/>
<rect x="120.4" y="0" width="0.8" height="131" fill="url(#vstreak)" opacity="0.14"/>
<rect x="52.8" y="0" width="0.6" height="131" fill="url(#vstreak)" opacity="0.20"/>
<rect x="66.6" y="0" width="1.4" height="131" fill="url(#vstreak)" opacity="0.06"/>
<rect x="209.6" y="0" width="1.3" height="131" fill="url(#vstreak)" opacity="0.28"/>
<rect x="208.0" y="0" width="1.5" height="131" fill="url(#vstreak)" opacity="0.19"/>
<rect x="3.0" y="0" width="1.3" height="131" fill="url(#vstreak)" opacity="0.09"/>
<rect x="69.6" y="0" width="1.2" height="131" fill="url(#vstreak)" opacity="0.18"/>
<rect x="96.0" y="0" width="1.5" height="131" fill="url(#vstreak)" opacity="0.20"/>
<rect x="79.2" y="0" width="0.8" height="131" fill="url(#vstreak)" opacity="0.27"/>
<rect x="110.7" y="0" width="1.4" height="131" fill="url(#vstreak)" opacity="0.14"/>
<rect x="45.8" y="0" width="1.1" height="131" fill="url(#vstreak)" opacity="0.25"/>
<rect x="39.7" y="0" width="1.4" height="131" fill="url(#vstreak)" opacity="0.28"/>
<rect x="187.0" y="0" width="1.4" height="131" fill="url(#vstreak)" opacity="0.05"/>
<rect x="145.8" y="0" width="1.4" height="131" fill="url(#vstreak)" opacity="0.06"/>
<rect x="63.0" y="0" width="0.8" height="131" fill="url(#vstreak)" opacity="0.18"/>
<rect x="98.1" y="0" width="1.0" height="131" fill="url(#vstreak)" opacity="0.24"/>
<rect x="0.4" y="0" width="0.6" height="131" fill="url(#vstreak)" opacity="0.08"/>
<rect x="28.9" y="0" width="0.6" height="131" fill="url(#vstreak)" opacity="0.29"/>
<rect x="198.2" y="0" width="0.6" height="131" fill="url(#vstreak)" opacity="0.18"/>
<rect x="73.3" y="0" width="0.8" height="131" fill="url(#vstreak)" opacity="0.14"/>
<rect x="150.1" y="0" width="1.1" height="131" fill="url(#vstreak)" opacity="0.14"/>
<rect x="44.3" y="0" width="0.9" height="131" fill="url(#vstreak)" opacity="0.08"/>
<rect x="128.9" y="0" width="1.3" height="131" fill="url(#vstreak)" opacity="0.15"/>
<rect x="18.5" y="0" width="0.7" height="131" fill="url(#vstreak)" opacity="0.14"/>
<rect x="140.2" y="0" width="1.4" height="131" fill="url(#vstreak)" opacity="0.15"/>
<rect x="185.9" y="0" width="1.2" height="131" fill="url(#vstreak)" opacity="0.16"/>
<rect x="86.4" y="0" width="1.0" height="131" fill="url(#vstreak)" opacity="0.23"/>
<rect x="97.6" y="0" width="1.3" height="131" fill="url(#vstreak)" opacity="0.17"/>
<rect x="56.9" y="0" width="1.1" height="131" fill="url(#vstreak)" opacity="0.22"/>
<rect x="16.6" y="0" width="1.0" height="131" fill="url(#vstreak)" opacity="0.16"/>
<rect x="204.1" y="0" width="1.5" height="131" fill="url(#vstreak)" opacity="0.14"/>
<rect x="208.3" y="0" width="1.4" height="131" fill="url(#vstreak)" opacity="0.12"/>
<rect x="107.7" y="0" width="0.6" height="131" fill="url(#vstreak)" opacity="0.25"/>
<rect x="153.7" y="0" width="1.5" height="131" fill="url(#vstreak)" opacity="0.25"/>
<rect x="154.9" y="0" width="1.3" height="131" fill="url(#vstreak)" opacity="0.19"/>
<rect x="23.9" y="0" width="1.1" height="131" fill="url(#vstreak)" opacity="0.05"/>
<rect x="33.3" y="0" width="1.4" height="131" fill="url(#vstreak)" opacity="0.06"/>
<rect x="21.3" y="0" width="0.6" height="131" fill="url(#vstreak)" opacity="0.27"/>
<rect x="41.6" y="0" width="0.5" height="131" fill="url(#vstreak)" opacity="0.26"/>
<rect x="28.1" y="0" width="1.4" height="131" fill="url(#vstreak)" opacity="0.22"/>
<rect x="194.0" y="0" width="1.5" height="131" fill="url(#vstreak)" opacity="0.19"/>
<rect x="185.3" y="0" width="0.5" height="131" fill="url(#vstreak)" opacity="0.24"/>
<rect x="118.6" y="0" width="1.3" height="131" fill="url(#vstreak)" opacity="0.08"/>
<rect x="173.8" y="0" width="1.5" height="131" fill="url(#vstreak)" opacity="0.07"/>
<rect x="75.2" y="0" width="1.1" height="131" fill="url(#vstreak)" opacity="0.26"/>
<rect x="56.2" y="0" width="0.7" height="131" fill="url(#vstreak)" opacity="0.11"/>
<rect x="142.9" y="0" width="1.3" height="131" fill="url(#vstreak)" opacity="0.15"/>
<rect x="85.3" y="0" width="0.9" height="131" fill="url(#vstreak)" opacity="0.14"/>
<rect x="97.0" y="0" width="0.6" height="131" fill="url(#vstreak)" opacity="0.18"/>
<rect x="225.7" y="0" width="1.0" height="131" fill="url(#vstreak)" opacity="0.24"/>
<rect x="37.3" y="0" width="1.3" height="131" fill="url(#vstreak)" opacity="0.24"/>
<rect x="156.3" y="0" width="1.1" height="131" fill="url(#vstreak)" opacity="0.17"/>
<rect x="149.2" y="0" width="1.5" height="131" fill="url(#vstreak)" opacity="0.09"/>
<rect x="22.2" y="0" width="1.3" height="131" fill="url(#vstreak)" opacity="0.28"/>
<rect x="120.0" y="0" width="1.0" height="131" fill="url(#vstreak)" opacity="0.23"/>
<rect x="9.7" y="0" width="1.4" height="131" fill="url(#vstreak)" opacity="0.7"/>
<rect x="21" y="0" width="1.4" height="131" fill="url(#vstreak)" opacity="0.6"/>
<rect x="31" y="0" width="1.4" height="131" fill="url(#vstreak)" opacity="0.5"/>
<rect x="136" y="0" width="1.4" height="131" fill="url(#vstreak)" opacity="0.7"/>
<rect x="140" y="0" width="1.4" height="131" fill="url(#vstreak)" opacity="0.6"/>
<rect x="181" y="0" width="1.4" height="131" fill="url(#vstreak)" opacity="0.5"/>
<rect x="150" y="0" width="1.4" height="131" fill="url(#vstreak)" opacity="0.4"/>
<rect x="48" y="0" width="1.4" height="131" fill="url(#vstreak)" opacity="0.35"/>
<rect x="86" y="0" width="1.4" height="131" fill="url(#vstreak)" opacity="0.35"/>
</g>
<rect x="126" y="30" width="30" height="101" fill="url(#glow)" opacity=".5"/>
<rect width="232" height="131" fill="url(#hband)"/>
<line x1="0" y1="45" x2="232" y2="45" stroke="#d0a8ac" stroke-width=".7" stroke-dasharray=".9 1.5" opacity=".65"/>
<path d="M0 51Q30 49 60 51T120 51T180 50T232 51" fill="none" stroke="#906068" stroke-width=".4" opacity=".5"/>
<line x1="0" y1="65" x2="232" y2="65" stroke="#eadada" stroke-width=".45" opacity=".8"/>
<path d="M8.3 65.0L10.7 61.0 13.1 65.0 10.7 69.0Z" fill="#e8d4d4" opacity=".45"/>
<path d="M18.0 65.0L20.4 60.5 22.8 65.0 20.4 69.5Z" fill="#e8d4d4" opacity=".45"/>
<path d="M29.1 65.0L31.0 62.0 32.9 65.0 31.0 68.0Z" fill="#e8d4d4" opacity=".45"/>
<path d="M39.6 65.0L41.0 63.0 42.4 65.0 41.0 67.0Z" fill="#e8d4d4" opacity=".45"/>
<path d="M49.8 65.0L51.5 63.5 53.2 65.0 51.5 66.5Z" fill="#e8d4d4" opacity=".45"/>
<path d="M59.4 65.0L61.3 63.2 63.2 65.0 61.3 66.8Z" fill="#e8d4d4" opacity=".45"/>
<path d="M70.6 65.0L72.0 63.0 73.4 65.0 72.0 67.0Z" fill="#e8d4d4" opacity=".45"/>
<path d="M90.6 65.0L92.0 63.8 93.4 65.0 92.0 66.2Z" fill="#e8d4d4" opacity=".45"/>
<path d="M114.1 65.0L116.0 63.2 117.9 65.0 116.0 66.8Z" fill="#e8d4d4" opacity=".45"/>
<path d="M120.1 65.0L122.0 63.5 123.9 65.0 122.0 66.5Z" fill="#e8d4d4" opacity=".45"/>
<path d="M159.1 65.0L161.0 63.5 162.9 65.0 161.0 66.5Z" fill="#e8d4d4" opacity=".45"/>
<path d="M184.6 65.0L186.0 63.8 187.4 65.0 186.0 66.2Z" fill="#e8d4d4" opacity=".45"/>
<rect x="10.3" y="53" width=".7" height="21" fill="#e8d0d0" opacity=".7"/>
<rect x="20" y="50" width=".7" height="27" fill="#e8d0d0" opacity=".7"/>
<path d="M177.8 64.0L180.6 59.0 183.2 64.0 180.6 69.0Z" fill="#f0e0e0" opacity=".7"/>
<line x1="0" y1="70.7" x2="232" y2="70.7" stroke="#d0b0b0" stroke-width=".55" stroke-dasharray=".9 .9" opacity=".65"/>
<path d="M150 70.7 L150.0 69.10000000000001 L151.2 72.3 L152.4 69.10000000000001 L153.6 72.3 L154.8 69.10000000000001 L156.0 72.3 L157.2 69.10000000000001 L158.4 72.3 L159.6 69.10000000000001 L160.8 72.3 L162.0 69.10000000000001 L163.2 72.3 L164.4 69.10000000000001 L165.6 72.3 L166.8 69.10000000000001 L168.0 72.3 L169.2 69.10000000000001 L170.4 72.3 L171.6 69.10000000000001 L172.8 72.3 L174.0 69.10000000000001 L175.2 72.3 L176.4 69.10000000000001 L177.6 72.3 L178.8 69.10000000000001" fill="none" stroke="#e0c8c8" stroke-width=".4" opacity=".7"/>
<line x1="0" y1="80.6" x2="232" y2="80.6" stroke="#b89098" stroke-width=".5" opacity=".55"/>
<line x1="0" y1="86.3" x2="232" y2="86.3" stroke="#b89098" stroke-width=".5" opacity=".5"/>
<path d="M0 78Q40 76 80 80T160 82T232 80" fill="none" stroke="#a08088" stroke-width=".4" opacity=".4"/>
<rect x="1.5" y="94.5" width="2" height="4.3" rx=".5" fill="#f0a47c" opacity=".85"/>
<rect x="5.0" y="94.3" width="2" height="4.5" rx=".5" fill="#f0a47c" opacity=".85"/>
<rect x="8.6" y="93.9" width="2" height="4.9" rx=".5" fill="#f0a47c" opacity=".85"/>
<rect x="12.1" y="94.4" width="2" height="4.4" rx=".5" fill="#f0a47c" opacity=".85"/>
<rect x="15.7" y="94.4" width="2" height="4.4" rx=".5" fill="#f0a47c" opacity=".85"/>
<rect x="19.2" y="94.3" width="2" height="4.5" rx=".5" fill="#f0a47c" opacity=".85"/>
<rect x="22.8" y="91.3" width="2" height="7.5" rx=".5" fill="#f0a47c" opacity=".85"/>
<rect x="26.4" y="94.4" width="2" height="4.4" rx=".5" fill="#f0a47c" opacity=".85"/>
<rect x="29.9" y="94.2" width="2" height="4.6" rx=".5" fill="#f0a47c" opacity=".85"/>
<rect x="33.5" y="94.0" width="2" height="4.8" rx=".5" fill="#f0a47c" opacity=".85"/>
<rect x="37.0" y="94.9" width="2" height="3.9" rx=".5" fill="#f0a47c" opacity=".85"/>
<rect x="40.5" y="94.6" width="2" height="4.2" rx=".5" fill="#f0a47c" opacity=".85"/>
<rect x="44.1" y="94.9" width="2" height="3.9" rx=".5" fill="#f0a47c" opacity=".85"/>
<rect x="47.6" y="94.0" width="2" height="4.8" rx=".5" fill="#f0a47c" opacity=".85"/>
<rect x="51.2" y="94.2" width="2" height="4.6" rx=".5" fill="#f0a47c" opacity=".85"/>
<rect x="54.7" y="94.9" width="2" height="3.9" rx=".5" fill="#f0a47c" opacity=".85"/>
<rect x="58.3" y="91.3" width="2" height="7.5" rx=".5" fill="#f0a47c" opacity=".85"/>
<rect x="61.8" y="93.8" width="2" height="5.0" rx=".5" fill="#f0a47c" opacity=".85"/>
<rect x="65.4" y="94.2" width="2" height="4.6" rx=".5" fill="#f0a47c" opacity=".85"/>
<rect x="68.9" y="94.3" width="2" height="4.5" rx=".5" fill="#f0a47c" opacity=".85"/>
<rect x="72.5" y="94.8" width="2" height="4.0" rx=".5" fill="#f0a47c" opacity=".85"/>
<rect x="76.0" y="95.0" width="2" height="3.8" rx=".5" fill="#f0a47c" opacity=".85"/>
<rect x="79.6" y="94.4" width="2" height="4.4" rx=".5" fill="#f0a47c" opacity=".85"/>
<rect x="83.1" y="94.9" width="2" height="3.9" rx=".5" fill="#f0a47c" opacity=".85"/>
<rect x="86.7" y="94.8" width="2" height="4.0" rx=".5" fill="#f0a47c" opacity=".85"/>
<rect x="90.2" y="94.7" width="2" height="4.1" rx=".5" fill="#f0a47c" opacity=".85"/>
<rect x="93.8" y="95.0" width="2" height="3.8" rx=".5" fill="#f0a47c" opacity=".85"/>
<rect x="97.3" y="92.6" width="2" height="6.2" rx=".5" fill="#f0a47c" opacity=".85"/>
<rect x="100.9" y="92.6" width="2" height="6.2" rx=".5" fill="#f0a47c" opacity=".85"/>
<rect x="104.4" y="92.6" width="2" height="6.2" rx=".5" fill="#f0a47c" opacity=".85"/>
<rect x="108.0" y="92.6" width="2" height="6.2" rx=".5" fill="#f0a47c" opacity=".85"/>
<rect x="111.5" y="94.2" width="2" height="4.6" rx=".5" fill="#f0a47c" opacity=".85"/>
<rect x="115.1" y="94.4" width="2" height="4.4" rx=".5" fill="#f0a47c" opacity=".85"/>
<rect x="118.6" y="94.2" width="2" height="4.6" rx=".5" fill="#f0a47c" opacity=".85"/>
<rect x="122.2" y="94.5" width="2" height="4.3" rx=".5" fill="#f0a47c" opacity=".85"/>
<rect x="125.7" y="94.7" width="2" height="4.1" rx=".5" fill="#f0a47c" opacity=".85"/>
<rect x="129.3" y="93.8" width="2" height="5.0" rx=".5" fill="#f0a47c" opacity=".85"/>
<rect x="132.8" y="93.8" width="2" height="5.0" rx=".5" fill="#f0a47c" opacity=".85"/>
<rect x="136.4" y="94.0" width="2" height="4.8" rx=".5" fill="#f0a47c" opacity=".85"/>
<rect x="139.9" y="94.2" width="2" height="4.6" rx=".5" fill="#f0a47c" opacity=".85"/>
<rect x="143.5" y="94.6" width="2" height="4.2" rx=".5" fill="#f0a47c" opacity=".85"/>
<rect x="147.0" y="94.7" width="2" height="4.1" rx=".5" fill="#f0a47c" opacity=".85"/>
<rect x="150.6" y="94.7" width="2" height="4.1" rx=".5" fill="#f0a47c" opacity=".85"/>
<rect x="154.2" y="94.9" width="2" height="3.9" rx=".5" fill="#f0a47c" opacity=".85"/>
<rect x="157.7" y="94.1" width="2" height="4.7" rx=".5" fill="#f0a47c" opacity=".85"/>
<rect x="161.3" y="94.5" width="2" height="4.3" rx=".5" fill="#f0a47c" opacity=".85"/>
<rect x="164.8" y="94.0" width="2" height="4.8" rx=".5" fill="#f0a47c" opacity=".85"/>
<rect x="168.4" y="94.5" width="2" height="4.3" rx=".5" fill="#f0a47c" opacity=".85"/>
<rect x="171.9" y="93.9" width="2" height="4.9" rx=".5" fill="#f0a47c" opacity=".85"/>
<rect x="175.5" y="91.3" width="2" height="7.5" rx=".5" fill="#f0a47c" opacity=".85"/>
<rect x="179.0" y="91.3" width="2" height="7.5" rx=".5" fill="#f0a47c" opacity=".85"/>
<rect x="182.6" y="91.3" width="2" height="7.5" rx=".5" fill="#f0a47c" opacity=".85"/>
<rect x="186.1" y="93.9" width="2" height="4.9" rx=".5" fill="#f0a47c" opacity=".85"/>
<rect x="189.7" y="94.4" width="2" height="4.4" rx=".5" fill="#f0a47c" opacity=".85"/>
<rect x="193.2" y="93.8" width="2" height="5.0" rx=".5" fill="#f0a47c" opacity=".85"/>
<rect x="196.8" y="94.5" width="2" height="4.3" rx=".5" fill="#f0a47c" opacity=".85"/>
<rect x="200.3" y="94.9" width="2" height="3.9" rx=".5" fill="#f0a47c" opacity=".85"/>
<rect x="203.9" y="94.2" width="2" height="4.6" rx=".5" fill="#f0a47c" opacity=".85"/>
<rect x="207.4" y="94.1" width="2" height="4.7" rx=".5" fill="#f0a47c" opacity=".85"/>
<rect x="211.0" y="94.7" width="2" height="4.1" rx=".5" fill="#f0a47c" opacity=".85"/>
<rect x="214.5" y="94.9" width="2" height="3.9" rx=".5" fill="#f0a47c" opacity=".85"/>
<rect x="218.1" y="94.6" width="2" height="4.2" rx=".5" fill="#f0a47c" opacity=".85"/>
<rect x="221.6" y="93.8" width="2" height="5.0" rx=".5" fill="#f0a47c" opacity=".85"/>
<rect x="225.2" y="94.1" width="2" height="4.7" rx=".5" fill="#f0a47c" opacity=".85"/>
<rect x="228.7" y="94.9" width="2" height="3.9" rx=".5" fill="#f0a47c" opacity=".85"/>
<line x1="0" y1="102" x2="232" y2="102" stroke="#b89090" stroke-width=".45" stroke-dasharray=".8 1.5" opacity=".5"/>
<line x1="0" y1="107.3" x2="232" y2="107.3" stroke="#dcb0a4" stroke-width=".55" opacity=".7"/>
<rect x="133.4" y="63" width="2.2" height="35.5" fill="#fff6f2"/>
<rect x="137.9" y="65" width="2.2" height="33.5" fill="#fff4f0"/>
<rect x="141.8" y="67.7" width="2.2" height="30.799999999999997" fill="#ffefea"/>
<rect x="145.9" y="81" width="2.2" height="17.5" fill="#f0e0a8"/>
</svg><!-- RIGHT PANEL -->
<div class="t" style="left:397px;top:107px;font-size:4.25px;color:#8a8a8a">Stock video:</div>
<div class="t" style="left:397px;top:113.6px;font-size:5.5px;color:#262626;-webkit-text-stroke:.12px #262626">Animated background with audio elements</div>
<div class="t" style="left:397px;top:124.7px;font-size:4.2px;color:#858585">Clip Length: <span style="color:#222;font-size:4.6px">0:20</span></div>
<div class="t" style="left:468px;top:124.7px;font-size:4.2px;color:#858585">Aspect Ratio: <span style="color:#222;font-size:4.6px">16:9</span></div>
<div class="t" style="left:397px;top:134.0px;font-size:4.2px;color:#858585">Clip ID: <span style="color:#222;font-size:4.6px">5500820</span></div>
<div class="t" style="left:468px;top:134.0px;font-size:4.2px;color:#858585">Copyright: <span style="color:#2c78c7;font-size:4.6px">SciFX</span></div>
<div class="a" style="left:397px;top:142px;width:142px;height:16px;background:#edf1f4;border-bottom:1px solid #e3e6e9"></div>
<div class="a" style="left:397px;top:173.2px;width:142px;height:.7px;background:#e8e8e8"></div>
<div class="a" style="left:397px;top:189.4px;width:142px;height:.7px;background:#e8e8e8"></div>
<svg class="a" style="left:399.5px;top:146.3px" width="7" height="7" viewBox="0 0 7 7"><circle cx="3.5" cy="3.5" r="2.7" fill="#2f82e0" stroke="#2a6fc0" stroke-width=".3"/><circle cx="3.5" cy="3.5" r="1" fill="#fff"/></svg>
<svg class="a" style="left:399.5px;top:161.8px" width="7" height="7" viewBox="0 0 7 7"><circle cx="3.5" cy="3.5" r="2.5" fill="#fff" stroke="#bdbdbd" stroke-width=".5"/></svg>
<svg class="a" style="left:399.5px;top:177.6px" width="7" height="7" viewBox="0 0 7 7"><circle cx="3.5" cy="3.5" r="2.5" fill="#fff" stroke="#bdbdbd" stroke-width=".5"/></svg>
<div class="t" style="left:409.2px;top:148.5px;font-size:4.9px;color:#333;font-weight:bold">HD</div>
<div class="t" style="left:409.2px;top:164.1px;font-size:4.9px;color:#333;font-weight:bold">SD</div>
<div class="t" style="left:409.2px;top:179.8px;font-size:4.9px;color:#333;font-weight:bold">Web</div>
<div class="t" style="left:433px;top:148.4px;font-size:5.4px;color:#2e2e2e">$109</div>
<div class="t" style="left:433px;top:163.7px;font-size:5.4px;color:#2e2e2e">$69</div>
<div class="t" style="left:433px;top:179.4px;font-size:5.4px;color:#2e2e2e">$29</div>
<div class="t" style="left:455.6px;top:146.9px;font-size:4.1px;color:#3a3a3a">1920 X 1080</div>
<div class="t" style="left:455.6px;top:151.5px;font-size:4.1px;color:#3a3a3a">@ 30 fps MJPEG</div>
<div class="t" style="left:455.6px;top:165.0px;font-size:4.1px;color:#3a3a3a">852 X 480 @ 30 fps MOV</div>
<div class="t" style="left:455.6px;top:180.7px;font-size:4.1px;color:#3a3a3a">426 X 240 @ 30 fps MOV</div>
<div class="t" style="left:505px;top:149.3px;font-size:4.1px;color:#3a3a3a;width:30px;text-align:right">361.6 MB</div>
<div class="t" style="left:505px;top:165.0px;font-size:4.1px;color:#3a3a3a;width:30px;text-align:right">23.2 MB</div>
<div class="t" style="left:505px;top:180.7px;font-size:4.1px;color:#3a3a3a;width:30px;text-align:right">8 MB</div>
<div class="a" style="left:397.2px;top:195.3px;width:61.5px;height:11.5px;background:linear-gradient(#e4503d,#c52f1e);border-radius:1px;box-shadow:0 .5px .5px rgba(0,0,0,.2)"></div>
<svg class="a" style="left:411.8px;top:197.8px" width="5" height="6" viewBox="0 0 5 6"><path d="M1.9.4H3.1V2.8H4.4L2.5 4.8.6 2.8H1.9Z" fill="#fff"/><rect x=".6" y="5.1" width="3.8" height=".6" fill="#fff"/></svg>
<div class="t" style="left:417.4px;top:198.9px;font-size:5.3px;color:#fff;font-weight:bold">Download</div>
<!-- action links -->
<svg class="a" style="left:214px;top:246px" width="6" height="6" viewBox="0 0 6 6"><circle cx="3" cy="3" r="2.4" fill="none" stroke="#777" stroke-width=".6"/><path d="M3 1.7V4.3M1.7 3H4.3" stroke="#777" stroke-width=".6"/></svg>
<div class="t" style="left:222.6px;top:248.3px;font-size:4.8px;color:#3a3a3a">Save to a Clipbox</div>
<svg class="a" style="left:285.5px;top:245.5px" width="6" height="7" viewBox="0 0 6 7"><path d="M3 .6V4.2M1.6 2.8L3 4.3 4.4 2.8M.8 4.6V5.8H5.2V4.6" fill="none" stroke="#777" stroke-width=".6"/></svg>
<div class="t" style="left:294px;top:248.3px;font-size:4.8px;color:#3a3a3a">Download Comp</div>
<div class="t" style="left:156.3px;top:263px;font-size:5.3px;color:#333;font-weight:bold">Visually Similar</div>
<div class="t" style="left:156.3px;top:392px;font-size:5.3px;color:#333;font-weight:bold">Related Videos</div>
<!-- feedback widget -->
<div class="a" style="left:659.2px;top:230.2px;width:12px;height:12px;background:#fff;border:.7px solid #d6dde3;border-radius:1.5px;box-shadow:0 .5px 1px rgba(0,0,0,.12)"></div>
<svg class="a" style="left:662.2px;top:233.2px" width="6" height="6" viewBox="0 0 6 6"><path d="M.6 .8H5.4V4H3.2L1.6 5.3V4H.6Z" fill="#3d8fd8"/><path d="M1.6 2.2H4.4" stroke="#fff" stroke-width=".5"/></svg>
<!-- mouse cursor -->
<svg class="a" style="left:126.5px;top:256px" width="5" height="7" viewBox="0 0 5 7"><path d="M.5.5V5.6L1.8 4.4 2.8 6.5 3.6 6.1 2.6 4.1H4.3Z" fill="#111" stroke="#fff" stroke-width=".4"/></svg>
<svg class="a" style="left:156.8px;top:272px" width="68.5" height="38" viewBox="0 0 68.5 38"><defs><filter id="f1" x="-20%" y="-50%" width="140%" height="200%"><feGaussianBlur stdDeviation="0.9"/></filter><filter id="f2" x="-20%" y="-50%" width="140%" height="200%"><feGaussianBlur stdDeviation="1.8"/></filter><filter id="f3" x="-20%" y="-50%" width="140%" height="200%"><feGaussianBlur stdDeviation="0.35"/></filter><linearGradient id="g4" x1="0" y1="0" x2="0" y2="1"><stop offset="0" stop-color="#000" stop-opacity="0.55"/><stop offset=".35" stop-color="#000" stop-opacity="0"/><stop offset=".65" stop-color="#000" stop-opacity="0"/><stop offset="1" stop-color="#000" stop-opacity="0.55"/></linearGradient></defs><rect width="68.5" height="38" fill="#2a1012"/><g filter="url(#f2)"><rect x="-2" y="9.6" width="72.5" height="8" fill="#ff9a9a" opacity="0.22"/><rect x="-2" y="20.0" width="72.5" height="8" fill="#ff9a9a" opacity="0.22"/></g><g filter="url(#f1)"><rect x="9.2" y="0" width="2.2" height="38" fill="#ff8c8c" opacity="0.21"/><rect x="17.5" y="0" width="1.6" height="38" fill="#ff8c8c" opacity="0.14"/><rect x="44.6" y="0" width="2.1" height="38" fill="#ff8c8c" opacity="0.07"/><rect x="1.9" y="0" width="2.2" height="38" fill="#ff8c8c" opacity="0.14"/><rect x="52.2" y="0" width="0.8" height="38" fill="#ff8c8c" opacity="0.14"/><rect x="49.4" y="0" width="1.2" height="38" fill="#ff8c8c" opacity="0.25"/><rect x="61.7" y="0" width="0.9" height="38" fill="#ff8c8c" opacity="0.06"/><rect x="37.1" y="0" width="2.4" height="38" fill="#ff8c8c" opacity="0.13"/><rect x="14.8" y="0" width="1.5" height="38" fill="#ff8c8c" opacity="0.06"/><rect x="15.2" y="0" width="1.5" height="38" fill="#ff8c8c" opacity="0.15"/><rect x="16.0" y="0" width="1.2" height="38" fill="#ff8c8c" opacity="0.10"/><rect x="31.5" y="0" width="1.3" height="38" fill="#ff8c8c" opacity="0.05"/><rect x="57.4" y="0" width="1.7" height="38" fill="#ff8c8c" opacity="0.18"/><rect x="12.7" y="0" width="2.5" height="38" fill="#ff8c8c" opacity="0.23"/><rect x="8.3" y="0" width="1.4" height="38" fill="#ff8c8c" opacity="0.20"/><rect x="48.7" y="0" width="2.4" height="38" fill="#ff8c8c" opacity="0.14"/><rect x="56.9" y="0" width="1.9" height="38" fill="#ff8c8c" opacity="0.11"/><rect x="40.2" y="0" width="2.3" height="38" fill="#ff8c8c" opacity="0.23"/><rect x="34.6" y="0" width="1.8" height="38" fill="#ff8c8c" opacity="0.06"/><rect x="16.6" y="0" width="2.2" height="38" fill="#ff8c8c" opacity="0.14"/><rect x="11.9" y="0" width="1.7" height="38" fill="#ff8c8c" opacity="0.20"/><rect x="46.2" y="0" width="1.4" height="38" fill="#ff8c8c" opacity="0.14"/><rect x="34.8" y="0" width="2.1" height="38" fill="#ff8c8c" opacity="0.16"/><rect x="26.9" y="0" width="1.6" height="38" fill="#ff8c8c" opacity="0.06"/><rect x="3.0" y="0" width="2.0" height="38" fill="#ff8c8c" opacity="0.26"/><rect x="40.6" y="0" width="1.5" height="38" fill="#ff8c8c" opacity="0.09"/><rect x="34.4" y="0" width="2.5" height="38" fill="#ff8c8c" opacity="0.21"/><rect x="37.0" y="0" width="2.3" height="38" fill="#ff8c8c" opacity="0.10"/><rect x="35.2" y="0" width="2.4" height="38" fill="#ff8c8c" opacity="0.17"/><rect x="31.5" y="0" width="1.3" height="38" fill="#ff8c8c" opacity="0.17"/><rect x="65.6" y="0" width="0.8" height="38" fill="#ff8c8c" opacity="0.21"/><rect x="56.2" y="0" width="2.3" height="38" fill="#ff8c8c" opacity="0.21"/><rect x="55.4" y="0" width="1.7" height="38" fill="#ff8c8c" opacity="0.17"/><rect x="29.2" y="0" width="0.9" height="38" fill="#ff8c8c" opacity="0.23"/><rect x="39.0" y="0" width="1.1" height="38" fill="#ff8c8c" opacity="0.16"/><rect x="33.2" y="0" width="1.4" height="38" fill="#ff8c8c" opacity="0.12"/><rect x="36.9" y="0" width="1.9" height="38" fill="#ff8c8c" opacity="0.18"/><rect x="31.4" y="0" width="0.8" height="38" fill="#ff8c8c" opacity="0.10"/><rect x="12.1" y="0" width="1.8" height="38" fill="#ff8c8c" opacity="0.23"/><rect x="54.7" y="0" width="2.2" height="38" fill="#ff8c8c" opacity="0.22"/><rect x="17.5" y="0" width="2.2" height="38" fill="#ff8c8c" opacity="0.19"/><rect x="5.7" y="0" width="0.8" height="38" fill="#ff8c8c" opacity="0.05"/><rect x="51.8" y="0" width="1.2" height="38" fill="#ff8c8c" opacity="0.07"/><rect x="42.8" y="0" width="1.4" height="38" fill="#ff8c8c" opacity="0.06"/><rect x="10.9" y="0" width="1.7" height="38" fill="#ff8c8c" opacity="0.09"/></g><g filter="url(#f1)"><rect x="-2" y="12.35" width="72.5" height="2.5" fill="#ff9a9a" opacity="0.6"/><rect x="-2" y="22.75" width="72.5" height="2.5" fill="#ff9a9a" opacity="0.6"/></g><g filter="url(#f3)"><rect x="0" y="13.15" width="68.5" height=".9" fill="#ffe8e4" opacity=".45"/><rect x="0" y="23.55" width="68.5" height=".9" fill="#ffe8e4" opacity=".45"/><ellipse cx="0.3" cy="13.6" rx="0.9" ry="0.7" fill="#ffe8e4" opacity="0.83"/><ellipse cx="3.6" cy="13.6" rx="0.9" ry="0.7" fill="#ffe8e4" opacity="0.56"/><ellipse cx="6.7" cy="13.6" rx="0.9" ry="0.7" fill="#ffe8e4" opacity="0.65"/><ellipse cx="10.0" cy="13.6" rx="0.9" ry="0.7" fill="#ffe8e4" opacity="0.80"/><ellipse cx="12.7" cy="13.6" rx="0.9" ry="0.7" fill="#ffe8e4" opacity="0.46"/><ellipse cx="16.1" cy="13.6" rx="0.9" ry="0.7" fill="#ffe8e4" opacity="0.64"/><ellipse cx="19.5" cy="13.6" rx="0.9" ry="0.7" fill="#ffe8e4" opacity="0.45"/><ellipse cx="22.5" cy="13.6" rx="0.9" ry="0.7" fill="#ffe8e4" opacity="0.77"/><ellipse cx="25.3" cy="13.6" rx="0.9" ry="0.7" fill="#ffe8e4" opacity="0.88"/><ellipse cx="28.8" cy="13.6" rx="0.9" ry="0.7" fill="#ffe8e4" opacity="0.46"/><ellipse cx="31.5" cy="13.6" rx="0.9" ry="0.7" fill="#ffe8e4" opacity="0.69"/><ellipse cx="35.0" cy="13.6" rx="0.9" ry="0.7" fill="#ffe8e4" opacity="0.62"/><ellipse cx="37.8" cy="13.6" rx="0.9" ry="0.7" fill="#ffe8e4" opacity="0.64"/><ellipse cx="40.5" cy="13.6" rx="0.9" ry="0.7" fill="#ffe8e4" opacity="0.55"/><ellipse cx="43.5" cy="13.6" rx="0.9" ry="0.7" fill="#ffe8e4" opacity="0.67"/><ellipse cx="46.3" cy="13.6" rx="0.9" ry="0.7" fill="#ffe8e4" opacity="0.55"/><ellipse cx="49.1" cy="13.6" rx="0.9" ry="0.7" fill="#ffe8e4" opacity="0.66"/><ellipse cx="52.0" cy="13.6" rx="0.9" ry="0.7" fill="#ffe8e4" opacity="0.46"/><ellipse cx="55.5" cy="13.6" rx="0.9" ry="0.7" fill="#ffe8e4" opacity="0.70"/><ellipse cx="58.7" cy="13.6" rx="0.9" ry="0.7" fill="#ffe8e4" opacity="0.53"/><ellipse cx="62.3" cy="13.6" rx="0.9" ry="0.7" fill="#ffe8e4" opacity="0.84"/><ellipse cx="65.0" cy="13.6" rx="0.9" ry="0.7" fill="#ffe8e4" opacity="0.60"/><ellipse cx="68.4" cy="13.6" rx="0.9" ry="0.7" fill="#ffe8e4" opacity="0.77"/><ellipse cx="1.9" cy="24" rx="0.9" ry="0.7" fill="#ffe8e4" opacity="0.88"/><ellipse cx="4.6" cy="24" rx="0.9" ry="0.7" fill="#ffe8e4" opacity="0.49"/><ellipse cx="8.0" cy="24" rx="0.9" ry="0.7" fill="#ffe8e4" opacity="0.78"/><ellipse cx="11.3" cy="24" rx="0.9" ry="0.7" fill="#ffe8e4" opacity="0.59"/><ellipse cx="14.5" cy="24" rx="0.9" ry="0.7" fill="#ffe8e4" opacity="0.72"/><ellipse cx="17.7" cy="24" rx="0.9" ry="0.7" fill="#ffe8e4" opacity="0.52"/><ellipse cx="20.7" cy="24" rx="0.9" ry="0.7" fill="#ffe8e4" opacity="0.63"/><ellipse cx="24.0" cy="24" rx="0.9" ry="0.7" fill="#ffe8e4" opacity="0.90"/><ellipse cx="27.6" cy="24" rx="0.9" ry="0.7" fill="#ffe8e4" opacity="0.69"/><ellipse cx="30.6" cy="24" rx="0.9" ry="0.7" fill="#ffe8e4" opacity="0.57"/><ellipse cx="33.2" cy="24" rx="0.9" ry="0.7" fill="#ffe8e4" opacity="0.46"/><ellipse cx="36.3" cy="24" rx="0.9" ry="0.7" fill="#ffe8e4" opacity="0.59"/><ellipse cx="39.3" cy="24" rx="0.9" ry="0.7" fill="#ffe8e4" opacity="0.85"/><ellipse cx="42.4" cy="24" rx="0.9" ry="0.7" fill="#ffe8e4" opacity="0.70"/><ellipse cx="45.3" cy="24" rx="0.9" ry="0.7" fill="#ffe8e4" opacity="0.46"/><ellipse cx="48.2" cy="24" rx="0.9" ry="0.7" fill="#ffe8e4" opacity="0.51"/><ellipse cx="51.3" cy="24" rx="0.9" ry="0.7" fill="#ffe8e4" opacity="0.90"/><ellipse cx="54.6" cy="24" rx="0.9" ry="0.7" fill="#ffe8e4" opacity="0.53"/><ellipse cx="58.1" cy="24" rx="0.9" ry="0.7" fill="#ffe8e4" opacity="0.81"/><ellipse cx="61.4" cy="24" rx="0.9" ry="0.7" fill="#ffe8e4" opacity="0.86"/><ellipse cx="64.8" cy="24" rx="0.9" ry="0.7" fill="#ffe8e4" opacity="0.81"/><ellipse cx="67.7" cy="24" rx="0.9" ry="0.7" fill="#ffe8e4" opacity="0.89"/></g><rect x="32.5" y="0" width="1.1" height="38" fill="#000" opacity=".55"/><rect x="35" y="0" width="1.1" height="38" fill="#000" opacity=".45"/><rect x="33.8" y="0" width=".9" height="38" fill="#ffe8e4" opacity=".12"/><rect width="68.5" height="38" fill="url(#g4)"/></svg>
<svg class="a" style="left:235px;top:272px" width="68.5" height="38" viewBox="0 0 68.5 38"><defs><filter id="f5" x="-20%" y="-50%" width="140%" height="200%"><feGaussianBlur stdDeviation="0.9"/></filter><filter id="f6" x="-20%" y="-50%" width="140%" height="200%"><feGaussianBlur stdDeviation="1.8"/></filter><filter id="f7" x="-20%" y="-50%" width="140%" height="200%"><feGaussianBlur stdDeviation="0.35"/></filter><linearGradient id="g8" x1="0" y1="0" x2="0" y2="1"><stop offset="0" stop-color="#000" stop-opacity="0.6"/><stop offset=".35" stop-color="#000" stop-opacity="0"/><stop offset=".65" stop-color="#000" stop-opacity="0"/><stop offset="1" stop-color="#000" stop-opacity="0.6"/></linearGradient></defs><rect width="68.5" height="38" fill="#0c0405"/><g filter="url(#f6)"><rect x="-2" y="12.8" width="72.5" height="12" fill="#ff8a8a" opacity="0.25"/></g><g filter="url(#f5)"><rect x="16.2" y="0" width="1.0" height="38" fill="#ff8c8c" opacity="0.07"/><rect x="10.6" y="0" width="0.9" height="38" fill="#ff8c8c" opacity="0.07"/><rect x="62.9" y="0" width="2.2" height="38" fill="#ff8c8c" opacity="0.11"/><rect x="15.2" y="0" width="1.7" height="38" fill="#ff8c8c" opacity="0.06"/><rect x="11.8" y="0" width="1.0" height="38" fill="#ff8c8c" opacity="0.05"/><rect x="63.5" y="0" width="2.2" height="38" fill="#ff8c8c" opacity="0.12"/><rect x="54.8" y="0" width="1.1" height="38" fill="#ff8c8c" opacity="0.06"/><rect x="42.9" y="0" width="2.0" height="38" fill="#ff8c8c" opacity="0.12"/><rect x="60.3" y="0" width="0.9" height="38" fill="#ff8c8c" opacity="0.10"/><rect x="46.0" y="0" width="1.7" height="38" fill="#ff8c8c" opacity="0.05"/><rect x="32.4" y="0" width="1.0" height="38" fill="#ff8c8c" opacity="0.13"/><rect x="59.3" y="0" width="1.7" height="38" fill="#ff8c8c" opacity="0.06"/><rect x="62.3" y="0" width="1.8" height="38" fill="#ff8c8c" opacity="0.13"/><rect x="58.1" y="0" width="1.7" height="38" fill="#ff8c8c" opacity="0.08"/><rect x="41.0" y="0" width="1.5" height="38" fill="#ff8c8c" opacity="0.05"/><rect x="20.9" y="0" width="2.2" height="38" fill="#ff8c8c" opacity="0.03"/><rect x="3.2" y="0" width="1.9" height="38" fill="#ff8c8c" opacity="0.06"/><rect x="36.6" y="0" width="1.6" height="38" fill="#ff8c8c" opacity="0.07"/><rect x="68.3" y="0" width="1.1" height="38" fill="#ff8c8c" opacity="0.08"/><rect x="13.9" y="0" width="1.9" height="38" fill="#ff8c8c" opacity="0.06"/><rect x="24.4" y="0" width="2.1" height="38" fill="#ff8c8c" opacity="0.07"/><rect x="38.3" y="0" width="2.3" height="38" fill="#ff8c8c" opacity="0.04"/><rect x="4.2" y="0" width="1.2" height="38" fill="#ff8c8c" opacity="0.11"/><rect x="42.2" y="0" width="1.2" height="38" fill="#ff8c8c" opacity="0.07"/><rect x="12.2" y="0" width="1.6" height="38" fill="#ff8c8c" opacity="0.03"/><rect x="47.8" y="0" width="2.3" height="38" fill="#ff8c8c" opacity="0.14"/><rect x="50.3" y="0" width="2.4" height="38" fill="#ff8c8c" opacity="0.03"/><rect x="19.8" y="0" width="2.4" height="38" fill="#ff8c8c" opacity="0.12"/><rect x="28.1" y="0" width="2.4" height="38" fill="#ff8c8c" opacity="0.10"/><rect x="56.0" y="0" width="1.3" height="38" fill="#ff8c8c" opacity="0.05"/><rect x="30.4" y="0" width="1.0" height="38" fill="#ff8c8c" opacity="0.07"/><rect x="65.9" y="0" width="1.4" height="38" fill="#ff8c8c" opacity="0.03"/><rect x="3.1" y="0" width="1.1" height="38" fill="#ff8c8c" opacity="0.12"/><rect x="24.8" y="0" width="1.3" height="38" fill="#ff8c8c" opacity="0.04"/><rect x="67.2" y="0" width="1.5" height="38" fill="#ff8c8c" opacity="0.05"/></g><g filter="url(#f5)"><rect x="-2" y="17.8" width="72.5" height="2" fill="#ff8a8a" opacity="0.55"/></g><g filter="url(#f7)"><rect x="0" y="18.35" width="68.5" height=".9" fill="#ffc8c4" opacity=".45"/><ellipse cx="0.5" cy="18.8" rx="0.9" ry="0.7" fill="#ffc8c4" opacity="0.50"/><ellipse cx="3.5" cy="18.8" rx="0.9" ry="0.7" fill="#ffc8c4" opacity="0.52"/><ellipse cx="6.1" cy="18.8" rx="0.9" ry="0.7" fill="#ffc8c4" opacity="0.63"/><ellipse cx="9.7" cy="18.8" rx="0.9" ry="0.7" fill="#ffc8c4" opacity="0.81"/><ellipse cx="13.0" cy="18.8" rx="0.9" ry="0.7" fill="#ffc8c4" opacity="0.55"/><ellipse cx="16.2" cy="18.8" rx="0.9" ry="0.7" fill="#ffc8c4" opacity="0.57"/><ellipse cx="18.9" cy="18.8" rx="0.9" ry="0.7" fill="#ffc8c4" opacity="0.50"/><ellipse cx="21.7" cy="18.8" rx="0.9" ry="0.7" fill="#ffc8c4" opacity="0.87"/><ellipse cx="25.2" cy="18.8" rx="0.9" ry="0.7" fill="#ffc8c4" opacity="0.81"/><ellipse cx="28.6" cy="18.8" rx="0.9" ry="0.7" fill="#ffc8c4" opacity="0.54"/><ellipse cx="31.5" cy="18.8" rx="0.9" ry="0.7" fill="#ffc8c4" opacity="0.73"/><ellipse cx="34.8" cy="18.8" rx="0.9" ry="0.7" fill="#ffc8c4" opacity="0.83"/><ellipse cx="38.3" cy="18.8" rx="0.9" ry="0.7" fill="#ffc8c4" opacity="0.49"/><ellipse cx="41.5" cy="18.8" rx="0.9" ry="0.7" fill="#ffc8c4" opacity="0.75"/><ellipse cx="44.6" cy="18.8" rx="0.9" ry="0.7" fill="#ffc8c4" opacity="0.53"/><ellipse cx="47.7" cy="18.8" rx="0.9" ry="0.7" fill="#ffc8c4" opacity="0.49"/><ellipse cx="51.2" cy="18.8" rx="0.9" ry="0.7" fill="#ffc8c4" opacity="0.84"/><ellipse cx="54.4" cy="18.8" rx="0.9" ry="0.7" fill="#ffc8c4" opacity="0.59"/><ellipse cx="57.9" cy="18.8" rx="0.9" ry="0.7" fill="#ffc8c4" opacity="0.71"/><ellipse cx="61.4" cy="18.8" rx="0.9" ry="0.7" fill="#ffc8c4" opacity="0.83"/><ellipse cx="64.5" cy="18.8" rx="0.9" ry="0.7" fill="#ffc8c4" opacity="0.64"/><ellipse cx="67.7" cy="18.8" rx="0.9" ry="0.7" fill="#ffc8c4" opacity="0.64"/></g><rect x="32.5" y="0" width="1.1" height="38" fill="#000" opacity=".55"/><rect x="35" y="0" width="1.1" height="38" fill="#000" opacity=".45"/><rect x="33.8" y="0" width=".9" height="38" fill="#ffc8c4" opacity=".12"/><rect width="68.5" height="38" fill="url(#g8)"/></svg>
<svg class="a" style="left:313.2px;top:272px" width="68.5" height="38" viewBox="0 0 68.5 38"><defs><filter id="f9" x="-20%" y="-50%" width="140%" height="200%"><feGaussianBlur stdDeviation="0.9"/></filter><filter id="f10" x="-20%" y="-50%" width="140%" height="200%"><feGaussianBlur stdDeviation="1.8"/></filter><filter id="f11" x="-20%" y="-50%" width="140%" height="200%"><feGaussianBlur stdDeviation="0.4"/></filter><linearGradient id="g12" x1="0" y1="0" x2="0" y2="1"><stop offset="0" stop-color="#000" stop-opacity="0.45"/><stop offset=".35" stop-color="#000" stop-opacity="0"/><stop offset=".65" stop-color="#000" stop-opacity="0"/><stop offset="1" stop-color="#000" stop-opacity="0.45"/></linearGradient></defs><rect width="68.5" height="38" fill="#2e1416"/><rect width="68.5" height="9" fill="#4a2228" opacity=".5"/><g filter="url(#f9)"><rect x="54.3" y="0" width="2.2" height="38" fill="#ff8c8c" opacity="0.14"/><rect x="17.9" y="0" width="0.8" height="38" fill="#ff8c8c" opacity="0.18"/><rect x="32.2" y="0" width="2.1" height="38" fill="#ff8c8c" opacity="0.12"/><rect x="52.8" y="0" width="1.3" height="38" fill="#ff8c8c" opacity="0.21"/><rect x="50.0" y="0" width="1.5" height="38" fill="#ff8c8c" opacity="0.15"/><rect x="46.7" y="0" width="1.1" height="38" fill="#ff8c8c" opacity="0.16"/><rect x="55.2" y="0" width="1.3" height="38" fill="#ff8c8c" opacity="0.21"/><rect x="47.0" y="0" width="2.2" height="38" fill="#ff8c8c" opacity="0.11"/><rect x="6.4" y="0" width="2.2" height="38" fill="#ff8c8c" opacity="0.21"/><rect x="30.5" y="0" width="1.0" height="38" fill="#ff8c8c" opacity="0.08"/><rect x="43.5" y="0" width="1.3" height="38" fill="#ff8c8c" opacity="0.24"/><rect x="40.3" y="0" width="1.1" height="38" fill="#ff8c8c" opacity="0.18"/><rect x="24.7" y="0" width="2.4" height="38" fill="#ff8c8c" opacity="0.23"/><rect x="35.3" y="0" width="1.9" height="38" fill="#ff8c8c" opacity="0.19"/><rect x="55.2" y="0" width="2.5" height="38" fill="#ff8c8c" opacity="0.05"/><rect x="24.8" y="0" width="1.8" height="38" fill="#ff8c8c" opacity="0.10"/><rect x="40.4" y="0" width="1.0" height="38" fill="#ff8c8c" opacity="0.22"/><rect x="36.0" y="0" width="1.0" height="38" fill="#ff8c8c" opacity="0.18"/><rect x="21.4" y="0" width="1.1" height="38" fill="#ff8c8c" opacity="0.14"/><rect x="9.5" y="0" width="1.2" height="38" fill="#ff8c8c" opacity="0.22"/><rect x="47.8" y="0" width="0.8" height="38" fill="#ff8c8c" opacity="0.20"/><rect x="1.2" y="0" width="1.4" height="38" fill="#ff8c8c" opacity="0.23"/><rect x="42.5" y="0" width="1.3" height="38" fill="#ff8c8c" opacity="0.12"/><rect x="26.7" y="0" width="1.0" height="38" fill="#ff8c8c" opacity="0.25"/><rect x="3.7" y="0" width="1.5" height="38" fill="#ff8c8c" opacity="0.20"/><rect x="27.2" y="0" width="2.5" height="38" fill="#ff8c8c" opacity="0.09"/><rect x="67.1" y="0" width="2.3" height="38" fill="#ff8c8c" opacity="0.18"/><rect x="60.9" y="0" width="1.6" height="38" fill="#ff8c8c" opacity="0.21"/><rect x="54.5" y="0" width="1.7" height="38" fill="#ff8c8c" opacity="0.14"/><rect x="48.3" y="0" width="1.5" height="38" fill="#ff8c8c" opacity="0.06"/><rect x="51.1" y="0" width="1.3" height="38" fill="#ff8c8c" opacity="0.14"/><rect x="53.7" y="0" width="1.1" height="38" fill="#ff8c8c" opacity="0.04"/><rect x="8.5" y="0" width="1.8" height="38" fill="#ff8c8c" opacity="0.12"/><rect x="17.6" y="0" width="1.6" height="38" fill="#ff8c8c" opacity="0.23"/><rect x="17.5" y="0" width="1.5" height="38" fill="#ff8c8c" opacity="0.22"/><rect x="41.9" y="0" width="1.3" height="38" fill="#ff8c8c" opacity="0.14"/><rect x="32.8" y="0" width="1.0" height="38" fill="#ff8c8c" opacity="0.12"/><rect x="20.9" y="0" width="2.2" height="38" fill="#ff8c8c" opacity="0.11"/><rect x="45.2" y="0" width="2.5" height="38" fill="#ff8c8c" opacity="0.23"/><rect x="25.8" y="0" width="1.8" height="38" fill="#ff8c8c" opacity="0.11"/></g><g filter="url(#f10)"><rect x="-2" y="12" width="72.5" height="12" fill="#ff7c7c" opacity=".3"/></g><g filter="url(#f11)"><line x1="1.7" y1="18.4" x2="4.7" y2="13.4" stroke="#ffe4e4" stroke-width="1.1" opacity="0.76"/><ellipse cx="3.2" cy="15.9" rx="1" ry="1" fill="#fff" opacity=".7"/><line x1="5.8" y1="20.7" x2="8.8" y2="15.7" stroke="#ffe4e4" stroke-width="1.1" opacity="0.65"/><ellipse cx="7.3" cy="18.2" rx="1" ry="1" fill="#fff" opacity=".7"/><line x1="10.3" y1="20.5" x2="13.3" y2="15.5" stroke="#ffe4e4" stroke-width="1.1" opacity="0.51"/><ellipse cx="11.8" cy="18.0" rx="1" ry="1" fill="#fff" opacity=".7"/><line x1="15.4" y1="17.9" x2="18.4" y2="12.9" stroke="#ffe4e4" stroke-width="1.1" opacity="0.54"/><ellipse cx="16.9" cy="15.4" rx="1" ry="1" fill="#fff" opacity=".7"/><line x1="19.9" y1="22.5" x2="22.9" y2="17.5" stroke="#ffe4e4" stroke-width="1.1" opacity="0.55"/><ellipse cx="21.4" cy="20.0" rx="1" ry="1" fill="#fff" opacity=".7"/><line x1="24.1" y1="21.3" x2="27.1" y2="16.3" stroke="#ffe4e4" stroke-width="1.1" opacity="0.88"/><ellipse cx="25.6" cy="18.8" rx="1" ry="1" fill="#fff" opacity=".7"/><line x1="29.1" y1="19.9" x2="32.1" y2="14.9" stroke="#ffe4e4" stroke-width="1.1" opacity="0.89"/><ellipse cx="30.6" cy="17.4" rx="1" ry="1" fill="#fff" opacity=".7"/><line x1="32.8" y1="22.7" x2="35.8" y2="17.7" stroke="#ffe4e4" stroke-width="1.1" opacity="0.62"/><ellipse cx="34.3" cy="20.2" rx="1" ry="1" fill="#fff" opacity=".7"/><line x1="37.4" y1="18.2" x2="40.4" y2="13.2" stroke="#ffe4e4" stroke-width="1.1" opacity="0.62"/><ellipse cx="38.9" cy="15.7" rx="1" ry="1" fill="#fff" opacity=".7"/><line x1="43.0" y1="18.6" x2="46.0" y2="13.6" stroke="#ffe4e4" stroke-width="1.1" opacity="0.73"/><ellipse cx="44.5" cy="16.1" rx="1" ry="1" fill="#fff" opacity=".7"/><line x1="47.2" y1="19.7" x2="50.2" y2="14.7" stroke="#ffe4e4" stroke-width="1.1" opacity="0.72"/><ellipse cx="48.7" cy="17.2" rx="1" ry="1" fill="#fff" opacity=".7"/><line x1="50.8" y1="17.9" x2="53.8" y2="12.9" stroke="#ffe4e4" stroke-width="1.1" opacity="0.58"/><ellipse cx="52.3" cy="15.4" rx="1" ry="1" fill="#fff" opacity=".7"/><line x1="56.3" y1="20.1" x2="59.3" y2="15.1" stroke="#ffe4e4" stroke-width="1.1" opacity="0.63"/><ellipse cx="57.8" cy="17.6" rx="1" ry="1" fill="#fff" opacity=".7"/><line x1="60.6" y1="20.2" x2="63.6" y2="15.2" stroke="#ffe4e4" stroke-width="1.1" opacity="0.62"/><ellipse cx="62.1" cy="17.7" rx="1" ry="1" fill="#fff" opacity=".7"/><line x1="65.5" y1="21.7" x2="68.5" y2="16.7" stroke="#ffe4e4" stroke-width="1.1" opacity="0.60"/><ellipse cx="67.0" cy="19.2" rx="1" ry="1" fill="#fff" opacity=".7"/><rect x="60.5" y="12" width="1.6" height="12" fill="#fff" opacity=".75"/><rect x="50" y="13" width="1.2" height="10" fill="#fff" opacity=".5"/><rect x="38.8" y="21" width=".7" height="8.7" fill="#ffc8c8" opacity=".35"/><rect x="58.0" y="21" width=".7" height="10.1" fill="#ffc8c8" opacity=".35"/><rect x="20.4" y="21" width=".7" height="11.9" fill="#ffc8c8" opacity=".35"/><rect x="9.6" y="21" width=".7" height="7.9" fill="#ffc8c8" opacity=".35"/><rect x="50.5" y="21" width=".7" height="6.1" fill="#ffc8c8" opacity=".35"/><rect x="33.3" y="21" width=".7" height="5.3" fill="#ffc8c8" opacity=".35"/><rect x="44.8" y="21" width=".7" height="10.4" fill="#ffc8c8" opacity=".35"/><rect x="38.7" y="21" width=".7" height="11.1" fill="#ffc8c8" opacity=".35"/><rect x="22.1" y="21" width=".7" height="9.9" fill="#ffc8c8" opacity=".35"/><rect x="40.0" y="21" width=".7" height="9.1" fill="#ffc8c8" opacity=".35"/><rect x="31.2" y="21" width=".7" height="10.9" fill="#ffc8c8" opacity=".35"/><rect x="62.5" y="21" width=".7" height="8.3" fill="#ffc8c8" opacity=".35"/><rect x="44.5" y="21" width=".7" height="5.4" fill="#ffc8c8" opacity=".35"/><rect x="46.9" y="21" width=".7" height="9.5" fill="#ffc8c8" opacity=".35"/></g><rect width="68.5" height="38" fill="url(#g12)"/></svg>
<svg class="a" style="left:391px;top:272px" width="68.5" height="38" viewBox="0 0 68.5 38"><defs><filter id="f13" x="-20%" y="-50%" width="140%" height="200%"><feGaussianBlur stdDeviation="0.9"/></filter><filter id="f14" x="-20%" y="-50%" width="140%" height="200%"><feGaussianBlur stdDeviation="1.8"/></filter><filter id="f15" x="-20%" y="-50%" width="140%" height="200%"><feGaussianBlur stdDeviation="0.35"/></filter><linearGradient id="g16" x1="0" y1="0" x2="0" y2="1"><stop offset="0" stop-color="#000" stop-opacity="0.6"/><stop offset=".35" stop-color="#000" stop-opacity="0"/><stop offset=".65" stop-color="#000" stop-opacity="0"/><stop offset="1" stop-color="#000" stop-opacity="0.6"/></linearGradient></defs><rect width="68.5" height="38" fill="#0a0304"/><g filter="url(#f14)"><rect x="-2" y="12.8" width="72.5" height="12" fill="#ff7a6a" opacity="0.3"/></g><g filter="url(#f13)"><rect x="15.5" y="0" width="2.4" height="38" fill="#ff8080" opacity="0.05"/><rect x="48.3" y="0" width="0.9" height="38" fill="#ff8080" opacity="0.07"/><rect x="68.4" y="0" width="1.2" height="38" fill="#ff8080" opacity="0.14"/><rect x="31.5" y="0" width="1.6" height="38" fill="#ff8080" opacity="0.11"/><rect x="13.2" y="0" width="2.2" height="38" fill="#ff8080" opacity="0.05"/><rect x="16.0" y="0" width="0.8" height="38" fill="#ff8080" opacity="0.08"/><rect x="27.9" y="0" width="2.3" height="38" fill="#ff8080" opacity="0.09"/><rect x="7.8" y="0" width="1.2" height="38" fill="#ff8080" opacity="0.20"/><rect x="4.3" y="0" width="1.9" height="38" fill="#ff8080" opacity="0.09"/><rect x="45.3" y="0" width="1.4" height="38" fill="#ff8080" opacity="0.15"/><rect x="34.1" y="0" width="1.9" height="38" fill="#ff8080" opacity="0.18"/><rect x="39.8" y="0" width="1.0" height="38" fill="#ff8080" opacity="0.04"/><rect x="64.8" y="0" width="1.6" height="38" fill="#ff8080" opacity="0.06"/><rect x="64.8" y="0" width="1.8" height="38" fill="#ff8080" opacity="0.15"/><rect x="60.3" y="0" width="1.3" height="38" fill="#ff8080" opacity="0.09"/><rect x="60.1" y="0" width="1.0" height="38" fill="#ff8080" opacity="0.16"/><rect x="6.7" y="0" width="2.0" height="38" fill="#ff8080" opacity="0.15"/><rect x="65.1" y="0" width="2.2" height="38" fill="#ff8080" opacity="0.12"/><rect x="13.5" y="0" width="1.1" height="38" fill="#ff8080" opacity="0.12"/><rect x="34.9" y="0" width="0.9" height="38" fill="#ff8080" opacity="0.18"/><rect x="34.8" y="0" width="2.0" height="38" fill="#ff8080" opacity="0.07"/><rect x="16.7" y="0" width="0.8" height="38" fill="#ff8080" opacity="0.09"/><rect x="18.3" y="0" width="1.5" height="38" fill="#ff8080" opacity="0.09"/><rect x="57.2" y="0" width="2.3" height="38" fill="#ff8080" opacity="0.06"/><rect x="27.1" y="0" width="1.1" height="38" fill="#ff8080" opacity="0.14"/><rect x="66.8" y="0" width="1.1" height="38" fill="#ff8080" opacity="0.16"/><rect x="20.6" y="0" width="0.8" height="38" fill="#ff8080" opacity="0.16"/><rect x="23.4" y="0" width="1.1" height="38" fill="#ff8080" opacity="0.10"/><rect x="15.9" y="0" width="1.5" height="38" fill="#ff8080" opacity="0.11"/><rect x="28.6" y="0" width="1.8" height="38" fill="#ff8080" opacity="0.08"/><rect x="6.5" y="0" width="0.9" height="38" fill="#ff8080" opacity="0.05"/><rect x="35.7" y="0" width="1.4" height="38" fill="#ff8080" opacity="0.17"/><rect x="34.6" y="0" width="2.0" height="38" fill="#ff8080" opacity="0.20"/><rect x="4.3" y="0" width="0.8" height="38" fill="#ff8080" opacity="0.05"/><rect x="26.5" y="0" width="1.8" height="38" fill="#ff8080" opacity="0.16"/></g><g filter="url(#f13)"><rect x="-2" y="17.8" width="72.5" height="2" fill="#ff7a6a" opacity="0.6"/></g><g filter="url(#f15)"><rect x="0" y="18.35" width="68.5" height=".9" fill="#ffd8c8" opacity=".45"/><ellipse cx="0.5" cy="18.8" rx="0.9" ry="0.7" fill="#ffd8c8" opacity="0.88"/><ellipse cx="3.2" cy="18.8" rx="0.9" ry="0.7" fill="#ffd8c8" opacity="0.77"/><ellipse cx="5.9" cy="18.8" rx="0.9" ry="0.7" fill="#ffd8c8" opacity="0.56"/><ellipse cx="9.5" cy="18.8" rx="0.9" ry="0.7" fill="#ffd8c8" opacity="0.54"/><ellipse cx="12.7" cy="18.8" rx="0.9" ry="0.7" fill="#ffd8c8" opacity="0.66"/><ellipse cx="15.8" cy="18.8" rx="0.9" ry="0.7" fill="#ffd8c8" opacity="0.67"/><ellipse cx="18.6" cy="18.8" rx="0.9" ry="0.7" fill="#ffd8c8" opacity="0.82"/><ellipse cx="21.2" cy="18.8" rx="0.9" ry="0.7" fill="#ffd8c8" opacity="0.56"/><ellipse cx="23.9" cy="18.8" rx="0.9" ry="0.7" fill="#ffd8c8" opacity="0.57"/><ellipse cx="26.9" cy="18.8" rx="0.9" ry="0.7" fill="#ffd8c8" opacity="0.86"/><ellipse cx="29.8" cy="18.8" rx="0.9" ry="0.7" fill="#ffd8c8" opacity="0.50"/><ellipse cx="32.7" cy="18.8" rx="0.9" ry="0.7" fill="#ffd8c8" opacity="0.90"/><ellipse cx="35.4" cy="18.8" rx="0.9" ry="0.7" fill="#ffd8c8" opacity="0.73"/><ellipse cx="38.3" cy="18.8" rx="0.9" ry="0.7" fill="#ffd8c8" opacity="0.75"/><ellipse cx="41.3" cy="18.8" rx="0.9" ry="0.7" fill="#ffd8c8" opacity="0.76"/><ellipse cx="44.4" cy="18.8" rx="0.9" ry="0.7" fill="#ffd8c8" opacity="0.74"/><ellipse cx="47.9" cy="18.8" rx="0.9" ry="0.7" fill="#ffd8c8" opacity="0.71"/><ellipse cx="50.6" cy="18.8" rx="0.9" ry="0.7" fill="#ffd8c8" opacity="0.48"/><ellipse cx="54.2" cy="18.8" rx="0.9" ry="0.7" fill="#ffd8c8" opacity="0.67"/><ellipse cx="57.0" cy="18.8" rx="0.9" ry="0.7" fill="#ffd8c8" opacity="0.88"/><ellipse cx="60.1" cy="18.8" rx="0.9" ry="0.7" fill="#ffd8c8" opacity="0.78"/><ellipse cx="63.6" cy="18.8" rx="0.9" ry="0.7" fill="#ffd8c8" opacity="0.58"/><ellipse cx="66.6" cy="18.8" rx="0.9" ry="0.7" fill="#ffd8c8" opacity="0.85"/></g><rect x="32.5" y="0" width="1.1" height="38" fill="#000" opacity=".55"/><rect x="35" y="0" width="1.1" height="38" fill="#000" opacity=".45"/><rect x="33.8" y="0" width=".9" height="38" fill="#ffd8c8" opacity=".12"/><rect width="68.5" height="38" fill="url(#g16)"/></svg>
<svg class="a" style="left:469px;top:272px" width="68.5" height="38" viewBox="0 0 68.5 38"><defs><filter id="f17" x="-20%" y="-50%" width="140%" height="200%"><feGaussianBlur stdDeviation="0.9"/></filter><filter id="f18" x="-20%" y="-50%" width="140%" height="200%"><feGaussianBlur stdDeviation="2.2"/></filter><filter id="f19" x="-20%" y="-50%" width="140%" height="200%"><feGaussianBlur stdDeviation="0.45"/></filter><linearGradient id="g20" x1="0" y1="0" x2="0" y2="1"><stop offset="0" stop-color="#000" stop-opacity="0.45"/><stop offset=".35" stop-color="#000" stop-opacity="0"/><stop offset=".65" stop-color="#000" stop-opacity="0"/><stop offset="1" stop-color="#000" stop-opacity="0.45"/></linearGradient></defs><rect width="68.5" height="38" fill="#3a1416"/><g filter="url(#f18)"><rect x="-2" y="9" width="72.5" height="20" fill="#ff6c6c" opacity=".35"/></g><g filter="url(#f17)"><rect x="39.1" y="0" width="1.5" height="38" fill="#ff8c8c" opacity="0.19"/><rect x="14.1" y="0" width="2.2" height="38" fill="#ff8c8c" opacity="0.26"/><rect x="44.8" y="0" width="1.1" height="38" fill="#ff8c8c" opacity="0.18"/><rect x="22.5" y="0" width="1.2" height="38" fill="#ff8c8c" opacity="0.29"/><rect x="68.3" y="0" width="0.9" height="38" fill="#ff8c8c" opacity="0.27"/><rect x="41.3" y="0" width="1.4" height="38" fill="#ff8c8c" opacity="0.12"/><rect x="46.2" y="0" width="1.6" height="38" fill="#ff8c8c" opacity="0.22"/><rect x="45.3" y="0" width="1.0" height="38" fill="#ff8c8c" opacity="0.24"/><rect x="67.3" y="0" width="2.4" height="38" fill="#ff8c8c" opacity="0.20"/><rect x="3.0" y="0" width="0.8" height="38" fill="#ff8c8c" opacity="0.08"/><rect x="64.5" y="0" width="1.3" height="38" fill="#ff8c8c" opacity="0.14"/><rect x="61.5" y="0" width="1.3" height="38" fill="#ff8c8c" opacity="0.19"/><rect x="29.9" y="0" width="0.9" height="38" fill="#ff8c8c" opacity="0.20"/><rect x="57.8" y="0" width="1.1" height="38" fill="#ff8c8c" opacity="0.11"/><rect x="28.3" y="0" width="0.9" height="38" fill="#ff8c8c" opacity="0.17"/><rect x="56.0" y="0" width="1.9" height="38" fill="#ff8c8c" opacity="0.18"/><rect x="58.6" y="0" width="1.1" height="38" fill="#ff8c8c" opacity="0.19"/><rect x="25.6" y="0" width="1.8" height="38" fill="#ff8c8c" opacity="0.08"/><rect x="53.1" y="0" width="1.0" height="38" fill="#ff8c8c" opacity="0.09"/><rect x="55.3" y="0" width="2.4" height="38" fill="#ff8c8c" opacity="0.16"/><rect x="28.4" y="0" width="1.2" height="38" fill="#ff8c8c" opacity="0.12"/><rect x="42.3" y="0" width="1.1" height="38" fill="#ff8c8c" opacity="0.08"/><rect x="31.2" y="0" width="1.1" height="38" fill="#ff8c8c" opacity="0.21"/><rect x="56.2" y="0" width="2.1" height="38" fill="#ff8c8c" opacity="0.17"/><rect x="23.8" y="0" width="1.5" height="38" fill="#ff8c8c" opacity="0.05"/><rect x="48.8" y="0" width="1.4" height="38" fill="#ff8c8c" opacity="0.13"/><rect x="5.5" y="0" width="1.6" height="38" fill="#ff8c8c" opacity="0.20"/><rect x="26.8" y="0" width="2.3" height="38" fill="#ff8c8c" opacity="0.22"/><rect x="16.5" y="0" width="1.7" height="38" fill="#ff8c8c" opacity="0.28"/><rect x="35.6" y="0" width="1.8" height="38" fill="#ff8c8c" opacity="0.07"/><rect x="33.5" y="0" width="1.6" height="38" fill="#ff8c8c" opacity="0.15"/><rect x="28.8" y="0" width="1.8" height="38" fill="#ff8c8c" opacity="0.18"/><rect x="33.6" y="0" width="1.1" height="38" fill="#ff8c8c" opacity="0.16"/><rect x="66.4" y="0" width="1.5" height="38" fill="#ff8c8c" opacity="0.06"/><rect x="0.2" y="0" width="1.7" height="38" fill="#ff8c8c" opacity="0.06"/><rect x="6.4" y="0" width="1.0" height="38" fill="#ff8c8c" opacity="0.16"/><rect x="68.0" y="0" width="1.6" height="38" fill="#ff8c8c" opacity="0.16"/><rect x="29.9" y="0" width="1.7" height="38" fill="#ff8c8c" opacity="0.16"/><rect x="49.7" y="0" width="2.3" height="38" fill="#ff8c8c" opacity="0.22"/><rect x="29.0" y="0" width="1.9" height="38" fill="#ff8c8c" opacity="0.28"/></g><g filter="url(#f19)"><ellipse cx="1.5" cy="15.5" rx="1.3" ry="3.9" fill="#ffc8c0" opacity="0.64"/><ellipse cx="1.5" cy="22" rx="1.3" ry="3.9" fill="#ffc8c0" opacity="0.64"/><ellipse cx="6.4" cy="15.5" rx="1.3" ry="3.7" fill="#ffc8c0" opacity="0.48"/><ellipse cx="6.4" cy="22" rx="1.3" ry="3.7" fill="#ffc8c0" opacity="0.45"/><ellipse cx="10.3" cy="15.5" rx="1.3" ry="4.9" fill="#ffc8c0" opacity="0.45"/><ellipse cx="10.3" cy="22" rx="1.3" ry="4.9" fill="#ffc8c0" opacity="0.59"/><ellipse cx="14.2" cy="15.5" rx="1.3" ry="3.9" fill="#ffc8c0" opacity="0.55"/><ellipse cx="14.2" cy="22" rx="1.3" ry="3.9" fill="#ffc8c0" opacity="0.69"/><ellipse cx="18.7" cy="15.5" rx="1.3" ry="3.3" fill="#ffc8c0" opacity="0.50"/><ellipse cx="18.7" cy="22" rx="1.3" ry="3.3" fill="#ffc8c0" opacity="0.45"/><ellipse cx="23.7" cy="15.5" rx="1.3" ry="5.1" fill="#ffc8c0" opacity="0.68"/><ellipse cx="23.7" cy="22" rx="1.3" ry="5.1" fill="#ffc8c0" opacity="0.69"/><ellipse cx="28.5" cy="15.5" rx="1.3" ry="5.4" fill="#ffc8c0" opacity="0.68"/><ellipse cx="28.5" cy="22" rx="1.3" ry="5.4" fill="#ffc8c0" opacity="0.49"/><ellipse cx="37.7" cy="15.5" rx="1.3" ry="5.0" fill="#ffc8c0" opacity="0.60"/><ellipse cx="37.7" cy="22" rx="1.3" ry="5.0" fill="#ffc8c0" opacity="0.55"/><ellipse cx="41.9" cy="15.5" rx="1.3" ry="4.2" fill="#ffc8c0" opacity="0.51"/><ellipse cx="41.9" cy="22" rx="1.3" ry="4.2" fill="#ffc8c0" opacity="0.44"/><ellipse cx="46.8" cy="15.5" rx="1.3" ry="5.1" fill="#ffc8c0" opacity="0.74"/><ellipse cx="46.8" cy="22" rx="1.3" ry="5.1" fill="#ffc8c0" opacity="0.64"/><ellipse cx="51.2" cy="15.5" rx="1.3" ry="4.9" fill="#ffc8c0" opacity="0.45"/><ellipse cx="51.2" cy="22" rx="1.3" ry="4.9" fill="#ffc8c0" opacity="0.64"/><ellipse cx="55.5" cy="15.5" rx="1.3" ry="3.7" fill="#ffc8c0" opacity="0.47"/><ellipse cx="55.5" cy="22" rx="1.3" ry="3.7" fill="#ffc8c0" opacity="0.58"/><ellipse cx="59.4" cy="15.5" rx="1.3" ry="4.3" fill="#ffc8c0" opacity="0.61"/><ellipse cx="59.4" cy="22" rx="1.3" ry="4.3" fill="#ffc8c0" opacity="0.54"/><ellipse cx="63.1" cy="15.5" rx="1.3" ry="4.4" fill="#ffc8c0" opacity="0.48"/><ellipse cx="63.1" cy="22" rx="1.3" ry="4.4" fill="#ffc8c0" opacity="0.48"/><ellipse cx="66.9" cy="15.5" rx="1.3" ry="4.1" fill="#ffc8c0" opacity="0.43"/><ellipse cx="66.9" cy="22" rx="1.3" ry="4.1" fill="#ffc8c0" opacity="0.63"/><rect x="0" y="15" width="68.5" height="1" fill="#fff0f0" opacity=".5"/><rect x="0" y="22" width="68.5" height="1" fill="#fff0f0" opacity=".5"/></g><rect x="32.5" y="0" width="1.2" height="38" fill="#000" opacity=".5"/><rect x="35.5" y="0" width="1.2" height="38" fill="#000" opacity=".5"/><rect width="68.5" height="38" fill="url(#g20)"/></svg>
<svg class="a" style="left:156.8px;top:331px" width="68.5" height="38" viewBox="0 0 68.5 38"><defs><filter id="f21" x="-20%" y="-50%" width="140%" height="200%"><feGaussianBlur stdDeviation="0.9"/></filter><filter id="f22" x="-20%" y="-50%" width="140%" height="200%"><feGaussianBlur stdDeviation="1.8"/></filter><filter id="f23" x="-20%" y="-50%" width="140%" height="200%"><feGaussianBlur stdDeviation="0.35"/></filter><linearGradient id="g24" x1="0" y1="0" x2="0" y2="1"><stop offset="0" stop-color="#000" stop-opacity="0.4"/><stop offset=".35" stop-color="#000" stop-opacity="0"/><stop offset=".65" stop-color="#000" stop-opacity="0"/><stop offset="1" stop-color="#000" stop-opacity="0.4"/></linearGradient></defs><rect width="68.5" height="38" fill="#482628"/><g filter="url(#f22)"><rect x="-2" y="5.6" width="72.5" height="16" fill="#ff9c9c" opacity="0.25"/><rect x="-2" y="10.8" width="72.5" height="16" fill="#ff9c9c" opacity="0.25"/><rect x="-2" y="16.0" width="72.5" height="16" fill="#ff9c9c" opacity="0.25"/></g><g filter="url(#f21)"><rect x="7.3" y="0" width="2.0" height="38" fill="#ff9c9c" opacity="0.26"/><rect x="64.4" y="0" width="1.3" height="38" fill="#ff9c9c" opacity="0.15"/><rect x="50.3" y="0" width="1.9" height="38" fill="#ff9c9c" opacity="0.16"/><rect x="46.9" y="0" width="1.5" height="38" fill="#ff9c9c" opacity="0.29"/><rect x="8.1" y="0" width="1.2" height="38" fill="#ff9c9c" opacity="0.32"/><rect x="24.5" y="0" width="1.2" height="38" fill="#ff9c9c" opacity="0.30"/><rect x="43.3" y="0" width="1.1" height="38" fill="#ff9c9c" opacity="0.23"/><rect x="45.5" y="0" width="1.1" height="38" fill="#ff9c9c" opacity="0.26"/><rect x="8.4" y="0" width="1.4" height="38" fill="#ff9c9c" opacity="0.10"/><rect x="14.0" y="0" width="2.5" height="38" fill="#ff9c9c" opacity="0.19"/><rect x="67.8" y="0" width="1.5" height="38" fill="#ff9c9c" opacity="0.24"/><rect x="59.8" y="0" width="2.0" height="38" fill="#ff9c9c" opacity="0.11"/><rect x="40.4" y="0" width="1.9" height="38" fill="#ff9c9c" opacity="0.13"/><rect x="6.5" y="0" width="2.3" height="38" fill="#ff9c9c" opacity="0.22"/><rect x="13.3" y="0" width="1.6" height="38" fill="#ff9c9c" opacity="0.14"/><rect x="54.7" y="0" width="1.7" height="38" fill="#ff9c9c" opacity="0.11"/><rect x="56.0" y="0" width="1.0" height="38" fill="#ff9c9c" opacity="0.16"/><rect x="1.9" y="0" width="2.1" height="38" fill="#ff9c9c" opacity="0.11"/><rect x="36.0" y="0" width="1.0" height="38" fill="#ff9c9c" opacity="0.21"/><rect x="46.9" y="0" width="1.7" height="38" fill="#ff9c9c" opacity="0.20"/><rect x="33.2" y="0" width="1.5" height="38" fill="#ff9c9c" opacity="0.24"/><rect x="6.5" y="0" width="1.6" height="38" fill="#ff9c9c" opacity="0.14"/><rect x="59.3" y="0" width="2.4" height="38" fill="#ff9c9c" opacity="0.10"/><rect x="9.8" y="0" width="2.0" height="38" fill="#ff9c9c" opacity="0.23"/><rect x="1.3" y="0" width="2.0" height="38" fill="#ff9c9c" opacity="0.33"/><rect x="29.0" y="0" width="1.4" height="38" fill="#ff9c9c" opacity="0.23"/><rect x="64.3" y="0" width="1.2" height="38" fill="#ff9c9c" opacity="0.16"/><rect x="12.9" y="0" width="1.9" height="38" fill="#ff9c9c" opacity="0.21"/><rect x="17.5" y="0" width="1.5" height="38" fill="#ff9c9c" opacity="0.09"/><rect x="21.4" y="0" width="2.5" height="38" fill="#ff9c9c" opacity="0.24"/><rect x="19.4" y="0" width="2.4" height="38" fill="#ff9c9c" opacity="0.18"/><rect x="17.2" y="0" width="0.9" height="38" fill="#ff9c9c" opacity="0.12"/><rect x="13.6" y="0" width="1.2" height="38" fill="#ff9c9c" opacity="0.32"/><rect x="18.1" y="0" width="1.2" height="38" fill="#ff9c9c" opacity="0.24"/><rect x="62.8" y="0" width="1.3" height="38" fill="#ff9c9c" opacity="0.29"/><rect x="25.3" y="0" width="1.8" height="38" fill="#ff9c9c" opacity="0.24"/><rect x="64.5" y="0" width="2.1" height="38" fill="#ff9c9c" opacity="0.22"/><rect x="57.6" y="0" width="1.4" height="38" fill="#ff9c9c" opacity="0.18"/><rect x="65.8" y="0" width="1.7" height="38" fill="#ff9c9c" opacity="0.29"/><rect x="21.5" y="0" width="2.4" height="38" fill="#ff9c9c" opacity="0.25"/><rect x="16.9" y="0" width="2.4" height="38" fill="#ff9c9c" opacity="0.21"/><rect x="23.3" y="0" width="1.2" height="38" fill="#ff9c9c" opacity="0.11"/><rect x="13.7" y="0" width="2.0" height="38" fill="#ff9c9c" opacity="0.12"/><rect x="17.7" y="0" width="1.6" height="38" fill="#ff9c9c" opacity="0.23"/><rect x="26.1" y="0" width="2.1" height="38" fill="#ff9c9c" opacity="0.15"/></g><g filter="url(#f21)"><rect x="-2" y="12.35" width="72.5" height="2.5" fill="#ff9c9c" opacity="0.5"/><rect x="-2" y="17.55" width="72.5" height="2.5" fill="#ff9c9c" opacity="0.5"/><rect x="-2" y="22.75" width="72.5" height="2.5" fill="#ff9c9c" opacity="0.5"/></g><g filter="url(#f23)"><rect x="0" y="13.15" width="68.5" height=".9" fill="#ffe4e0" opacity=".45"/><rect x="0" y="18.35" width="68.5" height=".9" fill="#ffe4e0" opacity=".45"/><rect x="0" y="23.55" width="68.5" height=".9" fill="#ffe4e0" opacity=".45"/><ellipse cx="0.2" cy="13.6" rx="0.9" ry="0.7" fill="#ffe4e0" opacity="0.77"/><ellipse cx="3.5" cy="13.6" rx="0.9" ry="0.7" fill="#ffe4e0" opacity="0.87"/><ellipse cx="6.3" cy="13.6" rx="0.9" ry="0.7" fill="#ffe4e0" opacity="0.57"/><ellipse cx="9.7" cy="13.6" rx="0.9" ry="0.7" fill="#ffe4e0" opacity="0.75"/><ellipse cx="12.6" cy="13.6" rx="0.9" ry="0.7" fill="#ffe4e0" opacity="0.76"/><ellipse cx="15.6" cy="13.6" rx="0.9" ry="0.7" fill="#ffe4e0" opacity="0.80"/><ellipse cx="18.3" cy="13.6" rx="0.9" ry="0.7" fill="#ffe4e0" opacity="0.55"/><ellipse cx="21.8" cy="13.6" rx="0.9" ry="0.7" fill="#ffe4e0" opacity="0.61"/><ellipse cx="24.7" cy="13.6" rx="0.9" ry="0.7" fill="#ffe4e0" opacity="0.81"/><ellipse cx="27.9" cy="13.6" rx="0.9" ry="0.7" fill="#ffe4e0" opacity="0.52"/><ellipse cx="31.0" cy="13.6" rx="0.9" ry="0.7" fill="#ffe4e0" opacity="0.75"/><ellipse cx="33.8" cy="13.6" rx="0.9" ry="0.7" fill="#ffe4e0" opacity="0.74"/><ellipse cx="36.5" cy="13.6" rx="0.9" ry="0.7" fill="#ffe4e0" opacity="0.60"/><ellipse cx="39.2" cy="13.6" rx="0.9" ry="0.7" fill="#ffe4e0" opacity="0.54"/><ellipse cx="42.8" cy="13.6" rx="0.9" ry="0.7" fill="#ffe4e0" opacity="0.63"/><ellipse cx="46.4" cy="13.6" rx="0.9" ry="0.7" fill="#ffe4e0" opacity="0.65"/><ellipse cx="49.6" cy="13.6" rx="0.9" ry="0.7" fill="#ffe4e0" opacity="0.84"/><ellipse cx="52.9" cy="13.6" rx="0.9" ry="0.7" fill="#ffe4e0" opacity="0.50"/><ellipse cx="56.1" cy="13.6" rx="0.9" ry="0.7" fill="#ffe4e0" opacity="0.74"/><ellipse cx="58.8" cy="13.6" rx="0.9" ry="0.7" fill="#ffe4e0" opacity="0.49"/><ellipse cx="62.3" cy="13.6" rx="0.9" ry="0.7" fill="#ffe4e0" opacity="0.68"/><ellipse cx="65.1" cy="13.6" rx="0.9" ry="0.7" fill="#ffe4e0" opacity="0.65"/><ellipse cx="67.9" cy="13.6" rx="0.9" ry="0.7" fill="#ffe4e0" opacity="0.81"/><ellipse cx="1.9" cy="18.8" rx="0.9" ry="0.7" fill="#ffe4e0" opacity="0.46"/><ellipse cx="5.3" cy="18.8" rx="0.9" ry="0.7" fill="#ffe4e0" opacity="0.52"/><ellipse cx="8.9" cy="18.8" rx="0.9" ry="0.7" fill="#ffe4e0" opacity="0.46"/><ellipse cx="12.3" cy="18.8" rx="0.9" ry="0.7" fill="#ffe4e0" opacity="0.76"/><ellipse cx="15.8" cy="18.8" rx="0.9" ry="0.7" fill="#ffe4e0" opacity="0.90"/><ellipse cx="18.6" cy="18.8" rx="0.9" ry="0.7" fill="#ffe4e0" opacity="0.60"/><ellipse cx="21.9" cy="18.8" rx="0.9" ry="0.7" fill="#ffe4e0" opacity="0.58"/><ellipse cx="24.8" cy="18.8" rx="0.9" ry="0.7" fill="#ffe4e0" opacity="0.55"/><ellipse cx="28.3" cy="18.8" rx="0.9" ry="0.7" fill="#ffe4e0" opacity="0.84"/><ellipse cx="31.7" cy="18.8" rx="0.9" ry="0.7" fill="#ffe4e0" opacity="0.55"/><ellipse cx="35.2" cy="18.8" rx="0.9" ry="0.7" fill="#ffe4e0" opacity="0.68"/><ellipse cx="38.0" cy="18.8" rx="0.9" ry="0.7" fill="#ffe4e0" opacity="0.65"/><ellipse cx="41.0" cy="18.8" rx="0.9" ry="0.7" fill="#ffe4e0" opacity="0.49"/><ellipse cx="44.2" cy="18.8" rx="0.9" ry="0.7" fill="#ffe4e0" opacity="0.61"/><ellipse cx="47.4" cy="18.8" rx="0.9" ry="0.7" fill="#ffe4e0" opacity="0.87"/><ellipse cx="50.6" cy="18.8" rx="0.9" ry="0.7" fill="#ffe4e0" opacity="0.63"/><ellipse cx="54.1" cy="18.8" rx="0.9" ry="0.7" fill="#ffe4e0" opacity="0.90"/><ellipse cx="57.2" cy="18.8" rx="0.9" ry="0.7" fill="#ffe4e0" opacity="0.88"/><ellipse cx="59.8" cy="18.8" rx="0.9" ry="0.7" fill="#ffe4e0" opacity="0.51"/><ellipse cx="62.6" cy="18.8" rx="0.9" ry="0.7" fill="#ffe4e0" opacity="0.87"/><ellipse cx="65.8" cy="18.8" rx="0.9" ry="0.7" fill="#ffe4e0" opacity="0.77"/><ellipse cx="0.7" cy="24" rx="0.9" ry="0.7" fill="#ffe4e0" opacity="0.67"/><ellipse cx="3.7" cy="24" rx="0.9" ry="0.7" fill="#ffe4e0" opacity="0.65"/><ellipse cx="6.7" cy="24" rx="0.9" ry="0.7" fill="#ffe4e0" opacity="0.75"/><ellipse cx="9.6" cy="24" rx="0.9" ry="0.7" fill="#ffe4e0" opacity="0.74"/><ellipse cx="12.2" cy="24" rx="0.9" ry="0.7" fill="#ffe4e0" opacity="0.59"/><ellipse cx="15.2" cy="24" rx="0.9" ry="0.7" fill="#ffe4e0" opacity="0.51"/><ellipse cx="18.5" cy="24" rx="0.9" ry="0.7" fill="#ffe4e0" opacity="0.59"/><ellipse cx="21.9" cy="24" rx="0.9" ry="0.7" fill="#ffe4e0" opacity="0.88"/><ellipse cx="24.7" cy="24" rx="0.9" ry="0.7" fill="#ffe4e0" opacity="0.85"/><ellipse cx="28.1" cy="24" rx="0.9" ry="0.7" fill="#ffe4e0" opacity="0.75"/><ellipse cx="30.8" cy="24" rx="0.9" ry="0.7" fill="#ffe4e0" opacity="0.66"/><ellipse cx="34.0" cy="24" rx="0.9" ry="0.7" fill="#ffe4e0" opacity="0.58"/><ellipse cx="36.8" cy="24" rx="0.9" ry="0.7" fill="#ffe4e0" opacity="0.59"/><ellipse cx="39.7" cy="24" rx="0.9" ry="0.7" fill="#ffe4e0" opacity="0.80"/><ellipse cx="42.6" cy="24" rx="0.9" ry="0.7" fill="#ffe4e0" opacity="0.64"/><ellipse cx="45.9" cy="24" rx="0.9" ry="0.7" fill="#ffe4e0" opacity="0.88"/><ellipse cx="48.8" cy="24" rx="0.9" ry="0.7" fill="#ffe4e0" opacity="0.47"/><ellipse cx="52.3" cy="24" rx="0.9" ry="0.7" fill="#ffe4e0" opacity="0.82"/><ellipse cx="55.7" cy="24" rx="0.9" ry="0.7" fill="#ffe4e0" opacity="0.69"/><ellipse cx="58.6" cy="24" rx="0.9" ry="0.7" fill="#ffe4e0" opacity="0.52"/><ellipse cx="61.5" cy="24" rx="0.9" ry="0.7" fill="#ffe4e0" opacity="0.66"/><ellipse cx="64.1" cy="24" rx="0.9" ry="0.7" fill="#ffe4e0" opacity="0.76"/><ellipse cx="67.5" cy="24" rx="0.9" ry="0.7" fill="#ffe4e0" opacity="0.46"/></g><rect x="32.5" y="0" width="1.1" height="38" fill="#000" opacity=".55"/><rect x="35" y="0" width="1.1" height="38" fill="#000" opacity=".45"/><rect x="33.8" y="0" width=".9" height="38" fill="#ffe4e0" opacity=".12"/><rect width="68.5" height="38" fill="url(#g24)"/></svg>
<svg class="a" style="left:235px;top:331px" width="68.5" height="38" viewBox="0 0 68.5 38"><defs><filter id="f25" x="-20%" y="-50%" width="140%" height="200%"><feGaussianBlur stdDeviation="0.9"/></filter><filter id="f26" x="-20%" y="-50%" width="140%" height="200%"><feGaussianBlur stdDeviation="1.8"/></filter><filter id="f27" x="-20%" y="-50%" width="140%" height="200%"><feGaussianBlur stdDeviation="0.35"/></filter><linearGradient id="g28" x1="0" y1="0" x2="0" y2="1"><stop offset="0" stop-color="#000" stop-opacity="0.45"/><stop offset=".35" stop-color="#000" stop-opacity="0"/><stop offset=".65" stop-color="#000" stop-opacity="0"/><stop offset="1" stop-color="#000" stop-opacity="0.45"/></linearGradient></defs><rect width="68.5" height="38" fill="#2a1a0c"/><g filter="url(#f26)"><rect x="-2" y="8.6" width="72.5" height="10" fill="#ffb060" opacity="0.25"/><rect x="-2" y="19.0" width="72.5" height="10" fill="#ffb060" opacity="0.25"/></g><g filter="url(#f25)"><rect x="66.1" y="0" width="0.8" height="38" fill="#ffc070" opacity="0.20"/><rect x="10.8" y="0" width="2.5" height="38" fill="#ffc070" opacity="0.05"/><rect x="60.2" y="0" width="2.0" height="38" fill="#ffc070" opacity="0.22"/><rect x="68.5" y="0" width="1.2" height="38" fill="#ffc070" opacity="0.12"/><rect x="48.5" y="0" width="1.3" height="38" fill="#ffc070" opacity="0.10"/><rect x="15.7" y="0" width="2.3" height="38" fill="#ffc070" opacity="0.22"/><rect x="54.6" y="0" width="1.2" height="38" fill="#ffc070" opacity="0.23"/><rect x="35.0" y="0" width="1.2" height="38" fill="#ffc070" opacity="0.14"/><rect x="28.8" y="0" width="0.9" height="38" fill="#ffc070" opacity="0.16"/><rect x="24.7" y="0" width="1.8" height="38" fill="#ffc070" opacity="0.24"/><rect x="44.2" y="0" width="1.5" height="38" fill="#ffc070" opacity="0.22"/><rect x="68.2" y="0" width="1.6" height="38" fill="#ffc070" opacity="0.24"/><rect x="1.3" y="0" width="1.0" height="38" fill="#ffc070" opacity="0.08"/><rect x="64.3" y="0" width="2.0" height="38" fill="#ffc070" opacity="0.19"/><rect x="19.6" y="0" width="1.6" height="38" fill="#ffc070" opacity="0.23"/><rect x="6.8" y="0" width="1.0" height="38" fill="#ffc070" opacity="0.06"/><rect x="32.1" y="0" width="2.2" height="38" fill="#ffc070" opacity="0.16"/><rect x="27.5" y="0" width="1.7" height="38" fill="#ffc070" opacity="0.09"/><rect x="64.9" y="0" width="1.4" height="38" fill="#ffc070" opacity="0.10"/><rect x="21.3" y="0" width="2.2" height="38" fill="#ffc070" opacity="0.11"/><rect x="62.0" y="0" width="1.4" height="38" fill="#ffc070" opacity="0.14"/><rect x="5.1" y="0" width="2.3" height="38" fill="#ffc070" opacity="0.21"/><rect x="32.5" y="0" width="1.0" height="38" fill="#ffc070" opacity="0.15"/><rect x="25.8" y="0" width="2.2" height="38" fill="#ffc070" opacity="0.24"/><rect x="50.8" y="0" width="1.3" height="38" fill="#ffc070" opacity="0.06"/><rect x="61.2" y="0" width="2.4" height="38" fill="#ffc070" opacity="0.08"/><rect x="34.2" y="0" width="1.6" height="38" fill="#ffc070" opacity="0.25"/><rect x="2.9" y="0" width="0.9" height="38" fill="#ffc070" opacity="0.22"/><rect x="39.0" y="0" width="1.6" height="38" fill="#ffc070" opacity="0.21"/><rect x="40.6" y="0" width="2.0" height="38" fill="#ffc070" opacity="0.10"/><rect x="5.8" y="0" width="0.8" height="38" fill="#ffc070" opacity="0.12"/><rect x="44.4" y="0" width="1.4" height="38" fill="#ffc070" opacity="0.12"/><rect x="42.4" y="0" width="2.0" height="38" fill="#ffc070" opacity="0.17"/><rect x="21.4" y="0" width="2.2" height="38" fill="#ffc070" opacity="0.21"/><rect x="61.2" y="0" width="2.3" height="38" fill="#ffc070" opacity="0.05"/><rect x="45.8" y="0" width="1.4" height="38" fill="#ffc070" opacity="0.13"/><rect x="35.5" y="0" width="1.0" height="38" fill="#ffc070" opacity="0.10"/><rect x="67.6" y="0" width="1.4" height="38" fill="#ffc070" opacity="0.23"/><rect x="46.9" y="0" width="1.3" height="38" fill="#ffc070" opacity="0.11"/><rect x="41.4" y="0" width="2.0" height="38" fill="#ffc070" opacity="0.12"/><rect x="4.0" y="0" width="1.1" height="38" fill="#ffc070" opacity="0.22"/><rect x="49.9" y="0" width="1.0" height="38" fill="#ffc070" opacity="0.22"/><rect x="39.4" y="0" width="1.4" height="38" fill="#ffc070" opacity="0.23"/><rect x="8.8" y="0" width="1.0" height="38" fill="#ffc070" opacity="0.12"/><rect x="50.5" y="0" width="1.7" height="38" fill="#ffc070" opacity="0.15"/></g><g filter="url(#f25)"><rect x="-2" y="12.35" width="72.5" height="2.5" fill="#ffb060" opacity="0.6"/><rect x="-2" y="22.75" width="72.5" height="2.5" fill="#ffb060" opacity="0.6"/></g><g filter="url(#f27)"><rect x="0" y="13.15" width="68.5" height=".9" fill="#ffeab8" opacity=".45"/><rect x="0" y="23.55" width="68.5" height=".9" fill="#ffeab8" opacity=".45"/><ellipse cx="1.9" cy="13.6" rx="0.9" ry="0.7" fill="#ffeab8" opacity="0.46"/><ellipse cx="5.3" cy="13.6" rx="0.9" ry="0.7" fill="#ffeab8" opacity="0.52"/><ellipse cx="8.9" cy="13.6" rx="0.9" ry="0.7" fill="#ffeab8" opacity="0.46"/><ellipse cx="12.3" cy="13.6" rx="0.9" ry="0.7" fill="#ffeab8" opacity="0.76"/><ellipse cx="15.8" cy="13.6" rx="0.9" ry="0.7" fill="#ffeab8" opacity="0.90"/><ellipse cx="18.6" cy="13.6" rx="0.9" ry="0.7" fill="#ffeab8" opacity="0.60"/><ellipse cx="21.9" cy="13.6" rx="0.9" ry="0.7" fill="#ffeab8" opacity="0.58"/><ellipse cx="24.8" cy="13.6" rx="0.9" ry="0.7" fill="#ffeab8" opacity="0.55"/><ellipse cx="28.3" cy="13.6" rx="0.9" ry="0.7" fill="#ffeab8" opacity="0.84"/><ellipse cx="31.7" cy="13.6" rx="0.9" ry="0.7" fill="#ffeab8" opacity="0.55"/><ellipse cx="35.2" cy="13.6" rx="0.9" ry="0.7" fill="#ffeab8" opacity="0.68"/><ellipse cx="38.0" cy="13.6" rx="0.9" ry="0.7" fill="#ffeab8" opacity="0.65"/><ellipse cx="41.0" cy="13.6" rx="0.9" ry="0.7" fill="#ffeab8" opacity="0.49"/><ellipse cx="44.2" cy="13.6" rx="0.9" ry="0.7" fill="#ffeab8" opacity="0.61"/><ellipse cx="47.4" cy="13.6" rx="0.9" ry="0.7" fill="#ffeab8" opacity="0.87"/><ellipse cx="50.6" cy="13.6" rx="0.9" ry="0.7" fill="#ffeab8" opacity="0.63"/><ellipse cx="54.1" cy="13.6" rx="0.9" ry="0.7" fill="#ffeab8" opacity="0.90"/><ellipse cx="57.2" cy="13.6" rx="0.9" ry="0.7" fill="#ffeab8" opacity="0.88"/><ellipse cx="59.8" cy="13.6" rx="0.9" ry="0.7" fill="#ffeab8" opacity="0.51"/><ellipse cx="62.6" cy="13.6" rx="0.9" ry="0.7" fill="#ffeab8" opacity="0.87"/><ellipse cx="65.8" cy="13.6" rx="0.9" ry="0.7" fill="#ffeab8" opacity="0.77"/><ellipse cx="0.7" cy="24" rx="0.9" ry="0.7" fill="#ffeab8" opacity="0.67"/><ellipse cx="3.7" cy="24" rx="0.9" ry="0.7" fill="#ffeab8" opacity="0.65"/><ellipse cx="6.7" cy="24" rx="0.9" ry="0.7" fill="#ffeab8" opacity="0.75"/><ellipse cx="9.6" cy="24" rx="0.9" ry="0.7" fill="#ffeab8" opacity="0.74"/><ellipse cx="12.2" cy="24" rx="0.9" ry="0.7" fill="#ffeab8" opacity="0.59"/><ellipse cx="15.2" cy="24" rx="0.9" ry="0.7" fill="#ffeab8" opacity="0.51"/><ellipse cx="18.5" cy="24" rx="0.9" ry="0.7" fill="#ffeab8" opacity="0.59"/><ellipse cx="21.9" cy="24" rx="0.9" ry="0.7" fill="#ffeab8" opacity="0.88"/><ellipse cx="24.7" cy="24" rx="0.9" ry="0.7" fill="#ffeab8" opacity="0.85"/><ellipse cx="28.1" cy="24" rx="0.9" ry="0.7" fill="#ffeab8" opacity="0.75"/><ellipse cx="30.8" cy="24" rx="0.9" ry="0.7" fill="#ffeab8" opacity="0.66"/><ellipse cx="34.0" cy="24" rx="0.9" ry="0.7" fill="#ffeab8" opacity="0.58"/><ellipse cx="36.8" cy="24" rx="0.9" ry="0.7" fill="#ffeab8" opacity="0.59"/><ellipse cx="39.7" cy="24" rx="0.9" ry="0.7" fill="#ffeab8" opacity="0.80"/><ellipse cx="42.6" cy="24" rx="0.9" ry="0.7" fill="#ffeab8" opacity="0.64"/><ellipse cx="45.9" cy="24" rx="0.9" ry="0.7" fill="#ffeab8" opacity="0.88"/><ellipse cx="48.8" cy="24" rx="0.9" ry="0.7" fill="#ffeab8" opacity="0.47"/><ellipse cx="52.3" cy="24" rx="0.9" ry="0.7" fill="#ffeab8" opacity="0.82"/><ellipse cx="55.7" cy="24" rx="0.9" ry="0.7" fill="#ffeab8" opacity="0.69"/><ellipse cx="58.6" cy="24" rx="0.9" ry="0.7" fill="#ffeab8" opacity="0.52"/><ellipse cx="61.5" cy="24" rx="0.9" ry="0.7" fill="#ffeab8" opacity="0.66"/><ellipse cx="64.1" cy="24" rx="0.9" ry="0.7" fill="#ffeab8" opacity="0.76"/><ellipse cx="67.5" cy="24" rx="0.9" ry="0.7" fill="#ffeab8" opacity="0.46"/></g><rect x="32.5" y="0" width="1.1" height="38" fill="#000" opacity=".55"/><rect x="35" y="0" width="1.1" height="38" fill="#000" opacity=".45"/><rect x="33.8" y="0" width=".9" height="38" fill="#ffeab8" opacity=".12"/><rect width="68.5" height="38" fill="url(#g28)"/></svg>
<svg class="a" style="left:313.2px;top:331px" width="68.5" height="38" viewBox="0 0 68.5 38"><defs><filter id="f29" x="-20%" y="-50%" width="140%" height="200%"><feGaussianBlur stdDeviation="0.5"/></filter><filter id="f30" x="-20%" y="-50%" width="140%" height="200%"><feGaussianBlur stdDeviation="1.6"/></filter><linearGradient id="g31" x1="0" y1="0" x2="0" y2="1"><stop offset="0" stop-color="#200000" stop-opacity="0.55"/><stop offset=".35" stop-color="#200000" stop-opacity="0"/><stop offset=".65" stop-color="#200000" stop-opacity="0"/><stop offset="1" stop-color="#200000" stop-opacity="0.55"/></linearGradient></defs><rect width="68.5" height="38" fill="#6e0c0c"/><g filter="url(#f29)"><rect x="35.8" y="30.7" width="2.4" height="1.3" fill="#e04040" opacity=".8"/><rect x="45.3" y="4.2" width="0.8" height="1.5" fill="#c02828" opacity=".8"/><rect x="17.3" y="19.1" width="1.3" height="2.2" fill="#c02828" opacity=".8"/><rect x="9.4" y="20.9" width="1.0" height="2.1" fill="#a81818" opacity=".8"/><rect x="10.3" y="26.8" width="1.8" height="2.4" fill="#a81818" opacity=".8"/><rect x="22.7" y="4.7" width="2.0" height="0.9" fill="#c02828" opacity=".8"/><rect x="5.6" y="35.7" width="1.6" height="2.5" fill="#a81818" opacity=".8"/><rect x="46.8" y="15.5" width="1.7" height="1.4" fill="#c02828" opacity=".8"/><rect x="25.5" y="2.0" width="2.1" height="1.4" fill="#c02828" opacity=".8"/><rect x="25.7" y="29.4" width="2.3" height="1.2" fill="#e04040" opacity=".8"/><rect x="14.6" y="9.4" width="2.4" height="0.9" fill="#3a0404" opacity=".8"/><rect x="53.9" y="7.3" width="1.8" height="1.7" fill="#e04040" opacity=".8"/><rect x="61.8" y="9.5" width="1.3" height="1.4" fill="#a81818" opacity=".8"/><rect x="22.7" y="34.5" width="1.8" height="1.3" fill="#3a0404" opacity=".8"/><rect x="3.5" y="37.6" width="0.8" height="2.1" fill="#c02828" opacity=".8"/><rect x="43.4" y="27.7" width="1.3" height="0.9" fill="#c02828" opacity=".8"/><rect x="1.4" y="21.4" width="2.0" height="1.5" fill="#e04040" opacity=".8"/><rect x="55.9" y="7.0" width="2.5" height="2.4" fill="#3a0404" opacity=".8"/><rect x="62.2" y="1.9" width="2.5" height="1.3" fill="#4a0606" opacity=".8"/><rect x="55.5" y="1.9" width="2.4" height="1.0" fill="#4a0606" opacity=".8"/><rect x="57.5" y="25.0" width="1.5" height="0.9" fill="#3a0404" opacity=".8"/><rect x="37.2" y="37.2" width="1.2" height="2.4" fill="#e04040" opacity=".8"/><rect x="11.2" y="11.2" width="2.0" height="1.6" fill="#c02828" opacity=".8"/><rect x="56.5" y="8.5" width="1.5" height="1.9" fill="#3a0404" opacity=".8"/><rect x="66.3" y="28.6" width="1.2" height="1.3" fill="#a81818" opacity=".8"/><rect x="66.4" y="22.7" width="2.4" height="1.8" fill="#e04040" opacity=".8"/><rect x="29.0" y="34.0" width="1.4" height="1.8" fill="#e04040" opacity=".8"/><rect x="15.8" y="11.9" width="1.1" height="2.5" fill="#a81818" opacity=".8"/><rect x="20.8" y="13.5" width="1.8" height="1.7" fill="#e04040" opacity=".8"/><rect x="0.7" y="35.8" width="2.3" height="1.7" fill="#a81818" opacity=".8"/><rect x="30.8" y="16.9" width="1.7" height="1.7" fill="#c02828" opacity=".8"/><rect x="31.0" y="11.2" width="1.1" height="0.8" fill="#c02828" opacity=".8"/><rect x="23.1" y="12.5" width="0.9" height="1.0" fill="#3a0404" opacity=".8"/><rect x="1.9" y="17.9" width="2.3" height="1.8" fill="#3a0404" opacity=".8"/><rect x="53.3" y="31.2" width="2.5" height="1.6" fill="#a81818" opacity=".8"/><rect x="59.4" y="1.1" width="1.5" height="1.0" fill="#3a0404" opacity=".8"/><rect x="50.6" y="2.3" width="2.5" height="1.2" fill="#4a0606" opacity=".8"/><rect x="23.8" y="20.7" width="2.2" height="2.5" fill="#c02828" opacity=".8"/><rect x="62.5" y="20.0" width="2.5" height="0.9" fill="#3a0404" opacity=".8"/><rect x="42.9" y="32.9" width="1.4" height="1.0" fill="#a81818" opacity=".8"/><rect x="36.9" y="9.2" width="1.6" height="1.3" fill="#3a0404" opacity=".8"/><rect x="17.5" y="2.8" width="1.5" height="2.0" fill="#c02828" opacity=".8"/><rect x="25.0" y="8.1" width="2.5" height="2.1" fill="#a81818" opacity=".8"/><rect x="53.7" y="3.2" width="1.5" height="2.3" fill="#e04040" opacity=".8"/><rect x="41.4" y="34.2" width="1.9" height="1.0" fill="#e04040" opacity=".8"/><rect x="36.6" y="12.0" width="2.2" height="2.3" fill="#c02828" opacity=".8"/><rect x="4.5" y="9.0" width="2.3" height="1.1" fill="#a81818" opacity=".8"/><rect x="29.3" y="12.2" width="2.1" height="2.1" fill="#a81818" opacity=".8"/><rect x="19.8" y="9.2" width="1.2" height="1.1" fill="#3a0404" opacity=".8"/><rect x="43.5" y="12.7" width="0.9" height="0.9" fill="#e04040" opacity=".8"/><rect x="25.9" y="6.5" width="2.4" height="0.9" fill="#4a0606" opacity=".8"/><rect x="62.1" y="17.6" width="1.1" height="1.1" fill="#4a0606" opacity=".8"/><rect x="21.1" y="32.8" width="2.4" height="1.7" fill="#a81818" opacity=".8"/><rect x="29.9" y="36.1" width="2.1" height="2.5" fill="#4a0606" opacity=".8"/><rect x="16.2" y="8.1" width="2.3" height="2.2" fill="#c02828" opacity=".8"/><rect x="25.7" y="35.9" width="1.3" height="2.5" fill="#a81818" opacity=".8"/><rect x="60.4" y="0.5" width="2.3" height="1.8" fill="#4a0606" opacity=".8"/><rect x="46.2" y="18.7" width="1.5" height="1.2" fill="#4a0606" opacity=".8"/><rect x="30.8" y="29.3" width="1.1" height="1.5" fill="#a81818" opacity=".8"/><rect x="14.3" y="13.8" width="2.3" height="2.4" fill="#a81818" opacity=".8"/><rect x="52.4" y="32.0" width="0.9" height="1.9" fill="#4a0606" opacity=".8"/><rect x="49.4" y="29.7" width="2.4" height="1.6" fill="#c02828" opacity=".8"/><rect x="55.8" y="3.3" width="1.2" height="1.5" fill="#c02828" opacity=".8"/><rect x="15.6" y="15.3" width="1.6" height="2.2" fill="#a81818" opacity=".8"/><rect x="22.4" y="14.7" width="1.2" height="1.1" fill="#3a0404" opacity=".8"/><rect x="32.4" y="15.4" width="2.5" height="1.6" fill="#a81818" opacity=".8"/><rect x="34.0" y="10.1" width="1.0" height="1.1" fill="#a81818" opacity=".8"/><rect x="2.5" y="4.7" width="1.5" height="0.9" fill="#4a0606" opacity=".8"/><rect x="58.1" y="24.6" width="1.7" height="1.9" fill="#e04040" opacity=".8"/><rect x="18.0" y="21.4" width="2.1" height="0.9" fill="#e04040" opacity=".8"/><rect x="19.5" y="23.2" width="0.9" height="0.9" fill="#4a0606" opacity=".8"/><rect x="42.2" y="34.2" width="2.4" height="2.1" fill="#3a0404" opacity=".8"/><rect x="3.0" y="14.1" width="1.6" height="2.2" fill="#c02828" opacity=".8"/><rect x="25.1" y="8.3" width="1.8" height="2.2" fill="#4a0606" opacity=".8"/><rect x="35.5" y="5.7" width="1.4" height="1.8" fill="#3a0404" opacity=".8"/><rect x="2.8" y="14.9" width="1.0" height="2.1" fill="#a81818" opacity=".8"/><rect x="44.5" y="20.8" width="1.6" height="2.0" fill="#4a0606" opacity=".8"/><rect x="1.2" y="22.5" width="2.1" height="1.0" fill="#a81818" opacity=".8"/><rect x="21.2" y="24.5" width="1.3" height="1.4" fill="#3a0404" opacity=".8"/><rect x="30.0" y="14.6" width="1.9" height="1.0" fill="#4a0606" opacity=".8"/><rect x="36.8" y="12.3" width="1.6" height="2.1" fill="#c02828" opacity=".8"/><rect x="6.4" y="24.6" width="1.3" height="2.4" fill="#e04040" opacity=".8"/><rect x="56.9" y="5.9" width="2.4" height="2.0" fill="#3a0404" opacity=".8"/><rect x="58.4" y="32.0" width="2.4" height="2.0" fill="#4a0606" opacity=".8"/><rect x="51.3" y="30.2" width="1.0" height="2.1" fill="#3a0404" opacity=".8"/><rect x="33.5" y="15.6" width="2.2" height="1.9" fill="#e04040" opacity=".8"/><rect x="16.3" y="19.1" width="1.5" height="1.0" fill="#a81818" opacity=".8"/><rect x="59.3" y="31.6" width="1.9" height="1.6" fill="#a81818" opacity=".8"/><rect x="42.5" y="31.7" width="2.1" height="1.6" fill="#c02828" opacity=".8"/><rect x="29.8" y="30.9" width="1.8" height="1.1" fill="#3a0404" opacity=".8"/><rect x="17.1" y="9.8" width="2.3" height="2.3" fill="#4a0606" opacity=".8"/><rect x="56.8" y="14.7" width="0.9" height="1.8" fill="#3a0404" opacity=".8"/><rect x="1.6" y="20.6" width="2.1" height="2.0" fill="#4a0606" opacity=".8"/><rect x="55.6" y="25.3" width="1.1" height="2.1" fill="#e04040" opacity=".8"/><rect x="41.7" y="12.0" width="1.2" height="1.3" fill="#c02828" opacity=".8"/><rect x="63.2" y="4.2" width="0.8" height="1.0" fill="#e04040" opacity=".8"/><rect x="10.5" y="16.9" width="1.8" height="2.3" fill="#a81818" opacity=".8"/><rect x="26.2" y="25.0" width="1.5" height="1.3" fill="#a81818" opacity=".8"/><rect x="9.6" y="0.7" width="2.4" height="1.6" fill="#a81818" opacity=".8"/><rect x="32.6" y="36.6" width="2.0" height="1.2" fill="#c02828" opacity=".8"/><rect x="32.2" y="6.5" width="1.2" height="1.2" fill="#3a0404" opacity=".8"/><rect x="17.8" y="27.5" width="1.2" height="1.6" fill="#e04040" opacity=".8"/><rect x="26.8" y="17.2" width="2.3" height="2.1" fill="#e04040" opacity=".8"/><rect x="14.5" y="4.0" width="1.4" height="2.0" fill="#a81818" opacity=".8"/><rect x="24.3" y="12.4" width="1.2" height="1.1" fill="#e04040" opacity=".8"/><rect x="67.0" y="23.5" width="1.6" height="2.2" fill="#c02828" opacity=".8"/><rect x="28.1" y="12.7" width="1.7" height="1.8" fill="#3a0404" opacity=".8"/><rect x="1.8" y="2.4" width="1.1" height="2.1" fill="#c02828" opacity=".8"/><rect x="44.8" y="5.9" width="1.3" height="2.2" fill="#a81818" opacity=".8"/><rect x="62.6" y="32.5" width="2.4" height="1.3" fill="#a81818" opacity=".8"/><rect x="38.6" y="36.6" width="1.3" height="2.1" fill="#c02828" opacity=".8"/><rect x="14.8" y="21.5" width="1.5" height="2.3" fill="#4a0606" opacity=".8"/><rect x="31.8" y="11.8" width="0.9" height="2.1" fill="#e04040" opacity=".8"/><rect x="51.2" y="5.1" width="2.4" height="0.9" fill="#4a0606" opacity=".8"/><rect x="53.9" y="3.2" width="1.8" height="1.7" fill="#3a0404" opacity=".8"/><rect x="55.6" y="14.1" width="1.6" height="1.8" fill="#4a0606" opacity=".8"/><rect x="63.5" y="31.0" width="2.2" height="1.6" fill="#a81818" opacity=".8"/><rect x="41.6" y="30.5" width="1.5" height="2.1" fill="#e04040" opacity=".8"/><rect x="61.8" y="7.3" width="1.7" height="0.9" fill="#e04040" opacity=".8"/><rect x="17.0" y="10.4" width="1.3" height="1.1" fill="#c02828" opacity=".8"/><rect x="9.6" y="12.2" width="2.1" height="1.3" fill="#c02828" opacity=".8"/><rect x="18.1" y="17.2" width="2.2" height="0.8" fill="#a81818" opacity=".8"/><rect x="27.9" y="25.6" width="0.8" height="1.9" fill="#3a0404" opacity=".8"/><rect x="33.1" y="4.6" width="2.2" height="1.9" fill="#4a0606" opacity=".8"/><rect x="35.0" y="26.7" width="2.0" height="0.9" fill="#3a0404" opacity=".8"/><rect x="34.0" y="28.6" width="2.2" height="1.5" fill="#4a0606" opacity=".8"/><rect x="59.1" y="23.3" width="1.2" height="2.4" fill="#e04040" opacity=".8"/><rect x="44.1" y="10.0" width="2.4" height="1.3" fill="#e04040" opacity=".8"/><rect x="55.8" y="0.2" width="2.4" height="2.2" fill="#3a0404" opacity=".8"/><rect x="48.1" y="27.9" width="1.7" height="1.0" fill="#c02828" opacity=".8"/><rect x="2.5" y="32.0" width="2.2" height="1.8" fill="#e04040" opacity=".8"/><rect x="25.2" y="7.6" width="1.7" height="2.4" fill="#e04040" opacity=".8"/><rect x="50.3" y="19.5" width="1.4" height="1.0" fill="#e04040" opacity=".8"/><rect x="19.2" y="24.1" width="1.7" height="1.7" fill="#e04040" opacity=".8"/><rect x="39.8" y="23.4" width="1.3" height="1.8" fill="#a81818" opacity=".8"/><rect x="31.3" y="23.3" width="2.3" height="1.0" fill="#a81818" opacity=".8"/><rect x="6.3" y="7.7" width="2.2" height="1.4" fill="#4a0606" opacity=".8"/><rect x="33.7" y="0.0" width="2.4" height="2.5" fill="#c02828" opacity=".8"/><rect x="39.9" y="26.7" width="1.1" height="1.9" fill="#4a0606" opacity=".8"/><rect x="33.7" y="26.4" width="0.8" height="1.5" fill="#a81818" opacity=".8"/><rect x="42.0" y="30.5" width="1.0" height="1.3" fill="#e04040" opacity=".8"/><rect x="56.0" y="7.3" width="2.0" height="2.1" fill="#e04040" opacity=".8"/><rect x="13.6" y="27.1" width="2.5" height="2.2" fill="#a81818" opacity=".8"/><rect x="13.9" y="36.4" width="1.4" height="2.4" fill="#a81818" opacity=".8"/><rect x="62.9" y="11.6" width="0.9" height="1.9" fill="#4a0606" opacity=".8"/><rect x="43.1" y="15.5" width="1.5" height="2.4" fill="#e04040" opacity=".8"/><rect x="13.8" y="19.5" width="2.4" height="1.2" fill="#4a0606" opacity=".8"/><rect x="65.3" y="37.3" width="2.4" height="1.1" fill="#e04040" opacity=".8"/><rect x="27.5" y="20.6" width="1.2" height="2.1" fill="#a81818" opacity=".8"/><rect x="23.4" y="29.6" width="2.0" height="2.3" fill="#4a0606" opacity=".8"/><rect x="31.8" y="15.2" width="1.5" height="1.9" fill="#a81818" opacity=".8"/><rect x="15.0" y="23.5" width="1.8" height="1.5" fill="#a81818" opacity=".8"/><rect x="11.2" y="20.9" width="2.4" height="2.4" fill="#a81818" opacity=".8"/><rect x="11.9" y="35.9" width="1.2" height="1.0" fill="#e04040" opacity=".8"/><rect x="28.9" y="27.2" width="2.0" height="0.9" fill="#a81818" opacity=".8"/><rect x="65.7" y="5.5" width="1.2" height="2.4" fill="#4a0606" opacity=".8"/><rect x="59.7" y="15.8" width="2.0" height="1.0" fill="#4a0606" opacity=".8"/><rect x="22.2" y="16.0" width="1.4" height="1.2" fill="#4a0606" opacity=".8"/><rect x="10.0" y="18.1" width="0.9" height="1.1" fill="#c02828" opacity=".8"/><rect x="45.5" y="34.8" width="1.8" height="1.4" fill="#c02828" opacity=".8"/><rect x="48.0" y="22.0" width="1.8" height="1.4" fill="#4a0606" opacity=".8"/><rect x="65.2" y="1.0" width="1.6" height="1.9" fill="#3a0404" opacity=".8"/><rect x="63.9" y="34.7" width="1.4" height="1.0" fill="#3a0404" opacity=".8"/><rect x="11.8" y="19.1" width="0.9" height="1.6" fill="#e04040" opacity=".8"/><rect x="17.0" y="12.5" width="1.2" height="0.8" fill="#3a0404" opacity=".8"/><rect x="62.2" y="22.3" width="1.8" height="1.4" fill="#a81818" opacity=".8"/><rect x="22.5" y="20.5" width="0.9" height="0.9" fill="#c02828" opacity=".8"/><rect x="41.2" y="4.9" width="2.2" height="2.3" fill="#c02828" opacity=".8"/><rect x="51.6" y="19.5" width="2.0" height="1.4" fill="#a81818" opacity=".8"/><rect x="56.6" y="7.6" width="2.3" height="1.6" fill="#e04040" opacity=".8"/><rect x="45.4" y="7.2" width="2.0" height="1.2" fill="#a81818" opacity=".8"/><rect x="9.2" y="17.3" width="1.6" height="1.0" fill="#3a0404" opacity=".8"/><rect x="43.6" y="6.5" width="1.9" height="2.0" fill="#4a0606" opacity=".8"/><rect x="20.0" y="25.7" width="1.1" height="1.1" fill="#e04040" opacity=".8"/><rect x="1.3" y="15.6" width="2.1" height="2.3" fill="#a81818" opacity=".8"/><rect x="25.5" y="29.5" width="1.3" height="1.9" fill="#4a0606" opacity=".8"/><rect x="2.2" y="24.2" width="1.8" height="1.3" fill="#a81818" opacity=".8"/><rect x="35.7" y="27.1" width="1.7" height="2.2" fill="#e04040" opacity=".8"/><rect x="39.5" y="19.8" width="1.3" height="2.4" fill="#4a0606" opacity=".8"/><rect x="44.7" y="16.1" width="1.1" height="1.2" fill="#c02828" opacity=".8"/><rect x="59.9" y="1.6" width="1.2" height="0.9" fill="#e04040" opacity=".8"/><rect x="37.4" y="6.7" width="2.3" height="1.3" fill="#3a0404" opacity=".8"/><rect x="62.1" y="20.3" width="2.3" height="2.0" fill="#e04040" opacity=".8"/><rect x="36.0" y="35.6" width="1.3" height="1.4" fill="#c02828" opacity=".8"/><rect x="44.3" y="29.5" width="0.8" height="2.3" fill="#c02828" opacity=".8"/><rect x="26.3" y="30.8" width="1.0" height="1.2" fill="#e04040" opacity=".8"/><rect x="15.2" y="14.4" width="1.3" height="1.1" fill="#3a0404" opacity=".8"/><rect x="64.4" y="3.2" width="1.1" height="1.1" fill="#e04040" opacity=".8"/><rect x="20.1" y="22.8" width="2.4" height="1.9" fill="#a81818" opacity=".8"/><rect x="26.2" y="29.1" width="1.0" height="2.2" fill="#3a0404" opacity=".8"/><rect x="62.1" y="17.5" width="2.5" height="1.7" fill="#4a0606" opacity=".8"/><rect x="61.1" y="15.3" width="1.6" height="2.1" fill="#4a0606" opacity=".8"/><rect x="32.6" y="35.0" width="2.4" height="1.2" fill="#e04040" opacity=".8"/><rect x="39.1" y="2.0" width="1.5" height="2.3" fill="#4a0606" opacity=".8"/><rect x="36.5" y="7.5" width="1.3" height="2.2" fill="#c02828" opacity=".8"/><rect x="14.1" y="33.1" width="1.8" height="2.2" fill="#c02828" opacity=".8"/><rect x="10.4" y="35.6" width="1.1" height="2.0" fill="#a81818" opacity=".8"/><rect x="4.0" y="26.1" width="1.9" height="2.2" fill="#4a0606" opacity=".8"/><rect x="60.1" y="33.0" width="1.2" height="1.6" fill="#3a0404" opacity=".8"/><rect x="11.8" y="14.8" width="2.1" height="2.4" fill="#a81818" opacity=".8"/><rect x="15.2" y="12.0" width="2.3" height="2.4" fill="#a81818" opacity=".8"/><rect x="1.0" y="31.2" width="2.2" height="1.4" fill="#4a0606" opacity=".8"/><rect x="53.1" y="15.8" width="1.0" height="1.2" fill="#4a0606" opacity=".8"/><rect x="58.7" y="7.4" width="2.2" height="1.8" fill="#e04040" opacity=".8"/><rect x="45.4" y="11.0" width="2.0" height="2.0" fill="#a81818" opacity=".8"/><rect x="34.9" y="16.6" width="0.8" height="1.3" fill="#4a0606" opacity=".8"/><rect x="6.9" y="22.6" width="1.0" height="0.9" fill="#c02828" opacity=".8"/><rect x="25.1" y="22.3" width="1.6" height="1.0" fill="#3a0404" opacity=".8"/><rect x="11.0" y="35.3" width="0.9" height="2.2" fill="#c02828" opacity=".8"/><rect x="53.1" y="3.4" width="2.5" height="1.3" fill="#4a0606" opacity=".8"/><rect x="66.6" y="22.7" width="1.7" height="1.2" fill="#3a0404" opacity=".8"/><rect x="45.5" y="11.6" width="2.4" height="1.3" fill="#3a0404" opacity=".8"/><rect x="65.0" y="30.7" width="1.3" height="2.4" fill="#e04040" opacity=".8"/><rect x="56.7" y="5.2" width="1.6" height="0.8" fill="#c02828" opacity=".8"/><rect x="0.5" y="6.0" width="1.2" height="1.4" fill="#4a0606" opacity=".8"/><rect x="45.2" y="36.0" width="1.4" height="2.1" fill="#a81818" opacity=".8"/><rect x="32.5" y="31.1" width="1.4" height="1.1" fill="#3a0404" opacity=".8"/><rect x="66.8" y="20.5" width="1.5" height="2.4" fill="#e04040" opacity=".8"/><rect x="48.2" y="32.3" width="1.3" height="2.4" fill="#c02828" opacity=".8"/><rect x="45.8" y="33.9" width="1.5" height="2.3" fill="#3a0404" opacity=".8"/></g><rect width="68.5" height="38" fill="url(#g31)"/><g filter="url(#f30)"><rect x="-2" y="15" width="72.5" height="7.5" fill="#ff3a2a" opacity=".75"/></g><rect y="18" width="68.5" height="1.4" fill="#ff8a78" opacity=".9"/></svg>
<svg class="a" style="left:391px;top:331px" width="68.5" height="38" viewBox="0 0 68.5 38"><defs><filter id="f32" x="-20%" y="-50%" width="140%" height="200%"><feGaussianBlur stdDeviation="0.9"/></filter><filter id="f33" x="-20%" y="-50%" width="140%" height="200%"><feGaussianBlur stdDeviation="1.8"/></filter><filter id="f34" x="-20%" y="-50%" width="140%" height="200%"><feGaussianBlur stdDeviation="0.35"/></filter><linearGradient id="g35" x1="0" y1="0" x2="0" y2="1"><stop offset="0" stop-color="#000" stop-opacity="0.6"/><stop offset=".35" stop-color="#000" stop-opacity="0"/><stop offset=".65" stop-color="#000" stop-opacity="0"/><stop offset="1" stop-color="#000" stop-opacity="0.6"/></linearGradient></defs><rect width="68.5" height="38" fill="#0e0608"/><g filter="url(#f33)"><rect x="-2" y="13.8" width="72.5" height="10" fill="#e8a0b8" opacity="0.2"/></g><g filter="url(#f32)"><rect x="12.4" y="0" width="1.9" height="38" fill="#e0a0c0" opacity="0.08"/><rect x="13.6" y="0" width="1.6" height="38" fill="#e0a0c0" opacity="0.10"/><rect x="32.9" y="0" width="1.6" height="38" fill="#e0a0c0" opacity="0.07"/><rect x="17.4" y="0" width="2.0" height="38" fill="#e0a0c0" opacity="0.08"/><rect x="46.2" y="0" width="2.1" height="38" fill="#e0a0c0" opacity="0.16"/><rect x="64.7" y="0" width="1.2" height="38" fill="#e0a0c0" opacity="0.07"/><rect x="50.3" y="0" width="1.8" height="38" fill="#e0a0c0" opacity="0.06"/><rect x="46.4" y="0" width="2.3" height="38" fill="#e0a0c0" opacity="0.16"/><rect x="14.8" y="0" width="1.3" height="38" fill="#e0a0c0" opacity="0.03"/><rect x="66.8" y="0" width="1.2" height="38" fill="#e0a0c0" opacity="0.14"/><rect x="36.8" y="0" width="1.8" height="38" fill="#e0a0c0" opacity="0.11"/><rect x="56.5" y="0" width="1.8" height="38" fill="#e0a0c0" opacity="0.08"/><rect x="7.9" y="0" width="1.6" height="38" fill="#e0a0c0" opacity="0.17"/><rect x="9.9" y="0" width="2.0" height="38" fill="#e0a0c0" opacity="0.12"/><rect x="11.0" y="0" width="1.2" height="38" fill="#e0a0c0" opacity="0.13"/><rect x="29.9" y="0" width="1.5" height="38" fill="#e0a0c0" opacity="0.10"/><rect x="6.9" y="0" width="2.0" height="38" fill="#e0a0c0" opacity="0.12"/><rect x="36.6" y="0" width="1.4" height="38" fill="#e0a0c0" opacity="0.15"/><rect x="56.4" y="0" width="1.7" height="38" fill="#e0a0c0" opacity="0.04"/><rect x="10.1" y="0" width="1.1" height="38" fill="#e0a0c0" opacity="0.04"/><rect x="44.4" y="0" width="1.7" height="38" fill="#e0a0c0" opacity="0.06"/><rect x="62.4" y="0" width="1.9" height="38" fill="#e0a0c0" opacity="0.15"/><rect x="56.0" y="0" width="2.0" height="38" fill="#e0a0c0" opacity="0.11"/><rect x="67.5" y="0" width="1.0" height="38" fill="#e0a0c0" opacity="0.13"/><rect x="60.6" y="0" width="1.6" height="38" fill="#e0a0c0" opacity="0.15"/><rect x="12.4" y="0" width="1.5" height="38" fill="#e0a0c0" opacity="0.07"/><rect x="27.2" y="0" width="2.0" height="38" fill="#e0a0c0" opacity="0.05"/><rect x="23.2" y="0" width="2.2" height="38" fill="#e0a0c0" opacity="0.08"/><rect x="8.6" y="0" width="2.5" height="38" fill="#e0a0c0" opacity="0.11"/><rect x="1.2" y="0" width="1.8" height="38" fill="#e0a0c0" opacity="0.05"/><rect x="11.2" y="0" width="2.1" height="38" fill="#e0a0c0" opacity="0.13"/><rect x="29.2" y="0" width="1.7" height="38" fill="#e0a0c0" opacity="0.11"/><rect x="31.4" y="0" width="1.0" height="38" fill="#e0a0c0" opacity="0.15"/><rect x="52.8" y="0" width="1.5" height="38" fill="#e0a0c0" opacity="0.09"/><rect x="41.8" y="0" width="1.6" height="38" fill="#e0a0c0" opacity="0.09"/></g><g filter="url(#f32)"><rect x="-2" y="17.900000000000002" width="72.5" height="1.8" fill="#e8a0b8" opacity="0.6"/></g><g filter="url(#f34)"><rect x="0" y="18.35" width="68.5" height=".9" fill="#f8e0ec" opacity=".45"/><ellipse cx="0.4" cy="18.8" rx="0.9" ry="0.7" fill="#f8e0ec" opacity="0.75"/><ellipse cx="3.3" cy="18.8" rx="0.9" ry="0.7" fill="#f8e0ec" opacity="0.54"/><ellipse cx="6.4" cy="18.8" rx="0.9" ry="0.7" fill="#f8e0ec" opacity="0.67"/><ellipse cx="9.5" cy="18.8" rx="0.9" ry="0.7" fill="#f8e0ec" opacity="0.66"/><ellipse cx="12.3" cy="18.8" rx="0.9" ry="0.7" fill="#f8e0ec" opacity="0.56"/><ellipse cx="15.6" cy="18.8" rx="0.9" ry="0.7" fill="#f8e0ec" opacity="0.60"/><ellipse cx="18.9" cy="18.8" rx="0.9" ry="0.7" fill="#f8e0ec" opacity="0.80"/><ellipse cx="22.4" cy="18.8" rx="0.9" ry="0.7" fill="#f8e0ec" opacity="0.87"/><ellipse cx="25.2" cy="18.8" rx="0.9" ry="0.7" fill="#f8e0ec" opacity="0.56"/><ellipse cx="28.5" cy="18.8" rx="0.9" ry="0.7" fill="#f8e0ec" opacity="0.71"/><ellipse cx="31.3" cy="18.8" rx="0.9" ry="0.7" fill="#f8e0ec" opacity="0.75"/><ellipse cx="34.8" cy="18.8" rx="0.9" ry="0.7" fill="#f8e0ec" opacity="0.83"/><ellipse cx="37.6" cy="18.8" rx="0.9" ry="0.7" fill="#f8e0ec" opacity="0.58"/><ellipse cx="40.2" cy="18.8" rx="0.9" ry="0.7" fill="#f8e0ec" opacity="0.89"/><ellipse cx="43.1" cy="18.8" rx="0.9" ry="0.7" fill="#f8e0ec" opacity="0.78"/><ellipse cx="46.2" cy="18.8" rx="0.9" ry="0.7" fill="#f8e0ec" opacity="0.72"/><ellipse cx="49.3" cy="18.8" rx="0.9" ry="0.7" fill="#f8e0ec" opacity="0.82"/><ellipse cx="52.5" cy="18.8" rx="0.9" ry="0.7" fill="#f8e0ec" opacity="0.59"/><ellipse cx="55.2" cy="18.8" rx="0.9" ry="0.7" fill="#f8e0ec" opacity="0.66"/><ellipse cx="58.8" cy="18.8" rx="0.9" ry="0.7" fill="#f8e0ec" opacity="0.52"/><ellipse cx="62.0" cy="18.8" rx="0.9" ry="0.7" fill="#f8e0ec" opacity="0.73"/><ellipse cx="64.8" cy="18.8" rx="0.9" ry="0.7" fill="#f8e0ec" opacity="0.54"/><ellipse cx="68.1" cy="18.8" rx="0.9" ry="0.7" fill="#f8e0ec" opacity="0.65"/></g><rect x="32.5" y="0" width="1.1" height="38" fill="#000" opacity=".55"/><rect x="35" y="0" width="1.1" height="38" fill="#000" opacity=".45"/><rect x="33.8" y="0" width=".9" height="38" fill="#f8e0ec" opacity=".12"/><rect width="68.5" height="38" fill="url(#g35)"/></svg>
<svg class="a" style="left:469px;top:331px" width="68.5" height="38" viewBox="0 0 68.5 38"><defs><filter id="f36" x="-20%" y="-50%" width="140%" height="200%"><feGaussianBlur stdDeviation="0.6"/></filter><filter id="f37" x="-20%" y="-50%" width="140%" height="200%"><feGaussianBlur stdDeviation="1.4"/></filter></defs><rect width="68.5" height="38" fill="#060102"/><g filter="url(#f36)"><rect x="0.0" y="17.3" width=".6" height="3.0" fill="#b81010" opacity="0.67"/><rect x="0.5" y="17.3" width=".6" height="3.0" fill="#b81010" opacity="0.76"/><rect x="1.0" y="17.3" width=".6" height="3.0" fill="#b81010" opacity="0.65"/><rect x="1.5" y="17.3" width=".6" height="3.0" fill="#b81010" opacity="0.75"/><rect x="2.0" y="17.3" width=".6" height="3.0" fill="#b81010" opacity="0.47"/><rect x="2.5" y="17.3" width=".6" height="3.0" fill="#b81010" opacity="0.80"/><rect x="3.0" y="17.3" width=".6" height="3.0" fill="#b81010" opacity="0.53"/><rect x="3.5" y="13.9" width=".6" height="9.8" fill="#b81010" opacity="0.58"/><rect x="4.0" y="15.5" width=".6" height="6.7" fill="#b81010" opacity="0.53"/><rect x="4.5" y="14.0" width=".6" height="9.6" fill="#b81010" opacity="0.53"/><rect x="5.0" y="15.0" width=".6" height="7.6" fill="#b81010" opacity="0.65"/><rect x="5.5" y="14.2" width=".6" height="9.2" fill="#b81010" opacity="0.60"/><rect x="6.0" y="15.7" width=".6" height="6.1" fill="#b81010" opacity="0.63"/><rect x="6.5" y="15.8" width=".6" height="5.9" fill="#b81010" opacity="0.44"/><rect x="7.0" y="15.5" width=".6" height="6.6" fill="#b81010" opacity="0.68"/><rect x="7.5" y="15.3" width=".6" height="7.0" fill="#b81010" opacity="0.68"/><rect x="8.0" y="15.6" width=".6" height="6.5" fill="#b81010" opacity="0.45"/><rect x="8.5" y="15.9" width=".6" height="5.9" fill="#b81010" opacity="0.68"/><rect x="9.0" y="14.1" width=".6" height="9.4" fill="#b81010" opacity="0.49"/><rect x="9.5" y="15.4" width=".6" height="6.8" fill="#b81010" opacity="0.41"/><rect x="10.0" y="14.5" width=".6" height="8.5" fill="#b81010" opacity="0.52"/><rect x="10.5" y="15.6" width=".6" height="6.4" fill="#b81010" opacity="0.66"/><rect x="11.0" y="14.6" width=".6" height="8.3" fill="#b81010" opacity="0.58"/><rect x="11.5" y="15.6" width=".6" height="6.4" fill="#b81010" opacity="0.66"/><rect x="12.0" y="14.7" width=".6" height="8.1" fill="#b81010" opacity="0.57"/><rect x="12.5" y="15.6" width=".6" height="6.5" fill="#b81010" opacity="0.77"/><rect x="13.0" y="14.1" width=".6" height="9.4" fill="#b81010" opacity="0.68"/><rect x="13.5" y="13.8" width=".6" height="10.0" fill="#b81010" opacity="0.63"/><rect x="14.0" y="15.2" width=".6" height="7.2" fill="#b81010" opacity="0.45"/><rect x="14.5" y="14.6" width=".6" height="8.4" fill="#b81010" opacity="0.61"/><rect x="15.0" y="15.0" width=".6" height="7.6" fill="#b81010" opacity="0.80"/><rect x="15.5" y="14.1" width=".6" height="9.3" fill="#b81010" opacity="0.45"/><rect x="16.0" y="14.0" width=".6" height="9.5" fill="#b81010" opacity="0.40"/><rect x="16.5" y="14.5" width=".6" height="8.5" fill="#b81010" opacity="0.53"/><rect x="17.0" y="14.4" width=".6" height="8.9" fill="#b81010" opacity="0.78"/><rect x="17.5" y="14.8" width=".6" height="8.0" fill="#b81010" opacity="0.71"/><rect x="18.0" y="17.3" width=".6" height="3.0" fill="#b81010" opacity="0.67"/><rect x="18.5" y="17.3" width=".6" height="3.0" fill="#b81010" opacity="0.58"/><rect x="19.0" y="17.3" width=".6" height="3.0" fill="#b81010" opacity="0.43"/><rect x="19.5" y="17.3" width=".6" height="3.0" fill="#b81010" opacity="0.44"/><rect x="20.0" y="17.3" width=".6" height="3.0" fill="#b81010" opacity="0.43"/><rect x="20.5" y="17.3" width=".6" height="3.0" fill="#b81010" opacity="0.52"/><rect x="21.0" y="17.3" width=".6" height="3.0" fill="#b81010" opacity="0.41"/><rect x="21.5" y="17.3" width=".6" height="3.0" fill="#b81010" opacity="0.60"/><rect x="22.0" y="17.3" width=".6" height="3.0" fill="#b81010" opacity="0.41"/><rect x="22.5" y="17.3" width=".6" height="3.0" fill="#b81010" opacity="0.61"/><rect x="23.0" y="17.3" width=".6" height="3.0" fill="#b81010" opacity="0.52"/><rect x="23.5" y="17.3" width=".6" height="3.0" fill="#b81010" opacity="0.51"/><rect x="24.0" y="17.3" width=".6" height="3.0" fill="#b81010" opacity="0.49"/><rect x="24.5" y="17.3" width=".6" height="3.0" fill="#b81010" opacity="0.49"/><rect x="25.0" y="17.3" width=".6" height="3.0" fill="#b81010" opacity="0.62"/><rect x="25.5" y="17.3" width=".6" height="3.0" fill="#b81010" opacity="0.66"/><rect x="26.0" y="17.3" width=".6" height="3.0" fill="#b81010" opacity="0.40"/><rect x="26.5" y="17.3" width=".6" height="3.0" fill="#b81010" opacity="0.65"/><rect x="27.0" y="17.3" width=".6" height="3.0" fill="#b81010" opacity="0.74"/><rect x="27.5" y="17.3" width=".6" height="3.0" fill="#b81010" opacity="0.52"/><rect x="28.0" y="17.3" width=".6" height="3.0" fill="#b81010" opacity="0.52"/><rect x="28.5" y="17.3" width=".6" height="3.0" fill="#b81010" opacity="0.44"/><rect x="29.0" y="17.3" width=".6" height="3.0" fill="#b81010" opacity="0.75"/><rect x="29.5" y="17.3" width=".6" height="3.0" fill="#b81010" opacity="0.79"/><rect x="30.0" y="17.3" width=".6" height="3.0" fill="#b81010" opacity="0.73"/><rect x="30.5" y="17.3" width=".6" height="3.0" fill="#b81010" opacity="0.44"/><rect x="31.0" y="17.3" width=".6" height="3.0" fill="#b81010" opacity="0.48"/><rect x="31.5" y="17.3" width=".6" height="3.0" fill="#b81010" opacity="0.68"/><rect x="32.0" y="17.3" width=".6" height="3.0" fill="#b81010" opacity="0.77"/><rect x="32.5" y="17.3" width=".6" height="3.0" fill="#b81010" opacity="0.79"/><rect x="33.0" y="17.3" width=".6" height="3.0" fill="#b81010" opacity="0.47"/><rect x="33.5" y="17.3" width=".6" height="3.0" fill="#b81010" opacity="0.74"/><rect x="34.0" y="17.3" width=".6" height="3.0" fill="#b81010" opacity="0.79"/><rect x="34.5" y="17.3" width=".6" height="3.0" fill="#b81010" opacity="0.70"/><rect x="35.0" y="17.3" width=".6" height="3.0" fill="#b81010" opacity="0.56"/><rect x="35.5" y="17.3" width=".6" height="3.0" fill="#b81010" opacity="0.63"/><rect x="36.0" y="17.3" width=".6" height="3.0" fill="#b81010" opacity="0.51"/><rect x="36.5" y="17.3" width=".6" height="3.0" fill="#b81010" opacity="0.66"/><rect x="37.0" y="17.3" width=".6" height="3.0" fill="#b81010" opacity="0.55"/><rect x="37.5" y="14.1" width=".6" height="9.4" fill="#b81010" opacity="0.56"/><rect x="38.0" y="15.4" width=".6" height="6.9" fill="#b81010" opacity="0.72"/><rect x="38.5" y="14.0" width=".6" height="9.7" fill="#b81010" opacity="0.44"/><rect x="39.0" y="14.1" width=".6" height="9.5" fill="#b81010" opacity="0.53"/><rect x="39.5" y="14.3" width=".6" height="9.1" fill="#b81010" opacity="0.52"/><rect x="40.0" y="13.8" width=".6" height="10.0" fill="#b81010" opacity="0.53"/><rect x="40.5" y="15.5" width=".6" height="6.7" fill="#b81010" opacity="0.42"/><rect x="41.0" y="15.6" width=".6" height="6.4" fill="#b81010" opacity="0.44"/><rect x="41.5" y="14.2" width=".6" height="9.2" fill="#b81010" opacity="0.41"/><rect x="42.0" y="15.7" width=".6" height="6.3" fill="#b81010" opacity="0.50"/><rect x="42.5" y="15.6" width=".6" height="6.4" fill="#b81010" opacity="0.71"/><rect x="43.0" y="15.9" width=".6" height="5.8" fill="#b81010" opacity="0.67"/><rect x="43.5" y="15.2" width=".6" height="7.3" fill="#b81010" opacity="0.46"/><rect x="44.0" y="15.4" width=".6" height="6.8" fill="#b81010" opacity="0.61"/><rect x="44.5" y="15.4" width=".6" height="6.8" fill="#b81010" opacity="0.56"/><rect x="45.0" y="15.1" width=".6" height="7.4" fill="#b81010" opacity="0.61"/><rect x="45.5" y="14.4" width=".6" height="8.7" fill="#b81010" opacity="0.52"/><rect x="46.0" y="14.6" width=".6" height="8.4" fill="#b81010" opacity="0.69"/><rect x="46.5" y="15.3" width=".6" height="7.0" fill="#b81010" opacity="0.71"/><rect x="47.0" y="15.7" width=".6" height="6.1" fill="#b81010" opacity="0.60"/><rect x="47.5" y="15.2" width=".6" height="7.3" fill="#b81010" opacity="0.45"/><rect x="48.0" y="14.5" width=".6" height="8.6" fill="#b81010" opacity="0.74"/><rect x="48.5" y="14.9" width=".6" height="7.8" fill="#b81010" opacity="0.54"/><rect x="49.0" y="14.0" width=".6" height="9.6" fill="#b81010" opacity="0.80"/><rect x="49.5" y="14.6" width=".6" height="8.4" fill="#b81010" opacity="0.62"/><rect x="50.0" y="14.6" width=".6" height="8.5" fill="#b81010" opacity="0.68"/><rect x="50.5" y="14.5" width=".6" height="8.7" fill="#b81010" opacity="0.62"/><rect x="51.0" y="14.3" width=".6" height="9.0" fill="#b81010" opacity="0.70"/><rect x="51.5" y="14.5" width=".6" height="8.5" fill="#b81010" opacity="0.61"/><rect x="52.0" y="17.3" width=".6" height="3.0" fill="#b81010" opacity="0.49"/><rect x="52.5" y="17.3" width=".6" height="3.0" fill="#b81010" opacity="0.52"/><rect x="53.0" y="17.3" width=".6" height="3.0" fill="#b81010" opacity="0.47"/><rect x="53.5" y="17.3" width=".6" height="3.0" fill="#b81010" opacity="0.45"/><rect x="54.0" y="17.3" width=".6" height="3.0" fill="#b81010" opacity="0.63"/><rect x="54.5" y="17.3" width=".6" height="3.0" fill="#b81010" opacity="0.75"/><rect x="55.0" y="17.3" width=".6" height="3.0" fill="#b81010" opacity="0.51"/><rect x="55.5" y="17.3" width=".6" height="3.0" fill="#b81010" opacity="0.66"/><rect x="56.0" y="17.3" width=".6" height="3.0" fill="#b81010" opacity="0.51"/><rect x="56.5" y="17.3" width=".6" height="3.0" fill="#b81010" opacity="0.52"/><rect x="57.0" y="17.3" width=".6" height="3.0" fill="#b81010" opacity="0.42"/><rect x="57.5" y="17.3" width=".6" height="3.0" fill="#b81010" opacity="0.59"/><rect x="58.0" y="17.3" width=".6" height="3.0" fill="#b81010" opacity="0.60"/><rect x="58.5" y="14.5" width=".6" height="8.6" fill="#b81010" opacity="0.66"/><rect x="59.0" y="15.6" width=".6" height="6.4" fill="#b81010" opacity="0.68"/><rect x="59.5" y="14.8" width=".6" height="7.9" fill="#b81010" opacity="0.57"/><rect x="60.0" y="13.9" width=".6" height="9.8" fill="#b81010" opacity="0.58"/><rect x="60.5" y="14.5" width=".6" height="8.7" fill="#b81010" opacity="0.71"/><rect x="61.0" y="14.9" width=".6" height="7.8" fill="#b81010" opacity="0.46"/><rect x="61.5" y="15.5" width=".6" height="6.6" fill="#b81010" opacity="0.52"/><rect x="62.0" y="15.5" width=".6" height="6.6" fill="#b81010" opacity="0.56"/><rect x="62.5" y="15.8" width=".6" height="6.1" fill="#b81010" opacity="0.71"/><rect x="63.0" y="14.3" width=".6" height="9.0" fill="#b81010" opacity="0.65"/><rect x="63.5" y="15.7" width=".6" height="6.3" fill="#b81010" opacity="0.49"/><rect x="64.0" y="14.0" width=".6" height="9.6" fill="#b81010" opacity="0.75"/><rect x="64.5" y="14.4" width=".6" height="8.9" fill="#b81010" opacity="0.75"/><rect x="65.0" y="15.5" width=".6" height="6.7" fill="#b81010" opacity="0.52"/><rect x="65.5" y="15.0" width=".6" height="7.6" fill="#b81010" opacity="0.59"/><rect x="66.0" y="15.1" width=".6" height="7.3" fill="#b81010" opacity="0.50"/><rect x="66.5" y="14.2" width=".6" height="9.2" fill="#b81010" opacity="0.47"/><rect x="67.0" y="14.7" width=".6" height="8.2" fill="#b81010" opacity="0.73"/><rect x="67.5" y="15.6" width=".6" height="6.4" fill="#b81010" opacity="0.53"/><rect x="68.0" y="17.3" width=".6" height="3.0" fill="#b81010" opacity="0.51"/><rect x="68.5" y="17.3" width=".6" height="3.0" fill="#b81010" opacity="0.75"/><rect x="69.0" y="17.3" width=".6" height="3.0" fill="#b81010" opacity="0.43"/><rect x="69.5" y="17.3" width=".6" height="3.0" fill="#b81010" opacity="0.60"/></g><g filter="url(#f37)"><rect x="-2" y="17" width="72.5" height="4" fill="#e02020" opacity=".55"/></g></svg>
<div class="lab" style="left:156.8px;top:314.8px"><b>HD</b> 00:11</div>
<div class="lab" style="left:235px;top:314.8px"><b>HD</b> 00:11</div>
<div class="lab" style="left:313.2px;top:314.8px"><b>HD</b> 00:11</div>
<div class="lab" style="left:391px;top:314.8px"><b>HD</b> 00:11</div>
<div class="lab" style="left:469px;top:314.8px"><b>HD</b> 00:11</div>
<div class="lab" style="left:156.8px;top:373.8px"><b>HD</b> 00:11</div>
<div class="lab" style="left:235px;top:373.8px"><b>HD</b> 00:11</div>
<div class="lab" style="left:313.2px;top:373.8px"><b>4K</b> 00:16</div>
<div class="lab" style="left:391px;top:373.8px"><b>HD</b> 00:11</div>
<div class="lab" style="left:469px;top:373.8px"><b>HD</b> 00:10</div>
<svg class="a" style="left:156.8px;top:401px" width="68.5" height="29" viewBox="0 0 68.5 29"><defs><filter id="pb"><feGaussianBlur stdDeviation=".6"/></filter></defs><rect width="68.5" height="29" fill="#2e2420"/><g filter="url(#pb)"><rect x="0" y="0" width="24" height="29" fill="#1e1c1a"/><rect x="3" y="1" width="14" height="6" fill="#3e3c3a"/><path d="M1 18L19 8 21 10.5 3 21Z" fill="#9a9a98"/><rect x="0" y="21" width="10" height="8" fill="#151515"/><rect x="16" y="12" width="6" height="5" fill="#5a5a58"/><rect x="20" y="2" width="36" height="14" fill="#8e1c1c"/><rect x="56" y="0" width="12.5" height="29" fill="#6e5038"/><rect x="60" y="0" width="8.5" height="10" fill="#8a6a4a"/><ellipse cx="38.5" cy="7.5" rx="5.5" ry="7.5" fill="#d0a890"/><path d="M32 3Q38.5-2 45 3V0H32Z" fill="#2e2018"/><path d="M14 29Q16 18 28 15.5Q38.5 13.5 49 15.5Q57 18 58 29Z" fill="#c2c2be"/><path d="M31 4Q32-2 38.5-2T46 4" fill="none" stroke="#151515" stroke-width="1.5"/><ellipse cx="56.5" cy="17" rx="3.6" ry="5.5" fill="#151515"/><ellipse cx="56.5" cy="17" rx="2" ry="3.4" fill="#353535"/><ellipse cx="12" cy="25" rx="4" ry="3" fill="#c09880"/></g></svg>
<svg class="a" style="left:235px;top:401px" width="68.5" height="29" viewBox="0 0 68.5 29"><defs><linearGradient id="bw" x1="0" y1="0" x2="1" y2="1"><stop offset="0" stop-color="#061632"/><stop offset=".6" stop-color="#0a2e62"/><stop offset="1" stop-color="#08244e"/></linearGradient><filter id="bwb" x="-10%" y="-50%" width="120%" height="200%"><feGaussianBlur stdDeviation=".8"/></filter></defs><rect width="68.5" height="29" fill="url(#bw)"/><g filter="url(#bwb)"><path d="M10 14Q40 0 68.5 4" fill="none" stroke="#3a90e0" stroke-width="1.8" opacity="0.35"/><path d="M10 18Q40 4 68.5 8" fill="none" stroke="#3a90e0" stroke-width="1.8" opacity="0.25"/><path d="M10 12Q40 -2 68.5 2" fill="none" stroke="#3a90e0" stroke-width="1.8" opacity="0.3"/><path d="M10 22Q40 8 68.5 12" fill="none" stroke="#3a90e0" stroke-width="1.8" opacity="0.2"/><rect x="0" y="20" width="68.5" height="9" fill="#0a2a68" opacity=".6"/><path d="M0 17Q4 20 8 19T16 17T24 19T32 21T40 21T48 23T56 23T64 23" fill="none" stroke="#5ad0ff" stroke-width="1.6"/></g><path d="M0 17Q4 20 8 19T16 17T24 19T32 21T40 21T48 23T56 23T64 23" fill="none" stroke="#b0f0ff" stroke-width=".5" opacity=".8"/></svg>
<svg class="a" style="left:313.2px;top:401px" width="68.5" height="29" viewBox="0 0 68.5 29"><defs><linearGradient id="sc" x1="0" y1="0" x2="1" y2="0"><stop offset="0" stop-color="#40c8e8"/><stop offset="1" stop-color="#80e070"/></linearGradient><filter id="scb"><feGaussianBlur stdDeviation=".5"/></filter></defs><rect width="68.5" height="29" fill="#0c0604"/><g filter="url(#scb)"><path d="M12 5L54 1 60 13 22 21Z" fill="#101010"/><path d="M14 5.5L53 2 58 12.5 22.5 19.5Z" fill="#1a58d0"/><path d="M19 12L30 9 42 6 53 4 57 11.5 24 18Z" fill="url(#sc)"/><path d="M20 23L68.5 12V29H10Z" fill="#2a140c"/><rect x="37.6" y="26.2" width="2" height="1.2" fill="#d02818"/><rect x="65.5" y="24.8" width="2" height="1.2" fill="#40b040"/><rect x="55.9" y="21.3" width="2" height="1.2" fill="#40b040"/><rect x="29.6" y="26.6" width="2" height="1.2" fill="#40b040"/><rect x="38.6" y="29.0" width="2" height="1.2" fill="#d02818"/><rect x="23.9" y="26.9" width="2" height="1.2" fill="#e04020"/><rect x="35.1" y="21.9" width="2" height="1.2" fill="#e04020"/><rect x="36.2" y="28.6" width="2" height="1.2" fill="#d02818"/><rect x="54.2" y="23.7" width="2" height="1.2" fill="#40b040"/><rect x="45.4" y="28.6" width="2" height="1.2" fill="#d02818"/><rect x="35.8" y="21.8" width="2" height="1.2" fill="#e04020"/><rect x="19.5" y="26.6" width="2" height="1.2" fill="#e04020"/><rect x="50.6" y="22.0" width="2" height="1.2" fill="#e04020"/><rect x="54.5" y="21.7" width="2" height="1.2" fill="#40b040"/><rect x="58.9" y="24.3" width="2" height="1.2" fill="#e04020"/><rect x="34.8" y="23.0" width="2" height="1.2" fill="#e04020"/><rect x="42.1" y="25.9" width="2" height="1.2" fill="#e04020"/><rect x="66.1" y="28.8" width="2" height="1.2" fill="#d02818"/><rect x="57.5" y="22.8" width="2" height="1.2" fill="#d02818"/><rect x="46.0" y="28.4" width="2" height="1.2" fill="#40b040"/></g></svg>
<svg class="a" style="left:391px;top:401px" width="68.5" height="29" viewBox="0 0 68.5 29"><defs><filter id="eqb"><feGaussianBlur stdDeviation=".3"/></filter></defs><rect width="68.5" height="29" fill="#050202"/><rect width="68.5" height="14" fill="#1e0604" opacity=".6"/><g filter="url(#eqb)"><path d="M0 7L2.5 4.5 4 6 1 10Z" fill="#d42a12"/><path d="M61 3L68.5 9.5V13L60 5Z" fill="#d42a12"/><rect x="0.00" y="28.2" width="2.8" height=".85" fill="#2aa82a"/><rect x="0.00" y="27.0" width="2.8" height=".85" fill="#2aa82a"/><rect x="0.00" y="25.8" width="2.8" height=".85" fill="#2aa82a"/><rect x="0.00" y="24.6" width="2.8" height=".85" fill="#2aa82a"/><rect x="0.00" y="23.4" width="2.8" height=".85" fill="#8cc820"/><rect x="0.00" y="22.2" width="2.8" height=".85" fill="#8cc820"/><rect x="0.00" y="21.0" width="2.8" height=".85" fill="#8cc820"/><rect x="3.45" y="28.2" width="2.8" height=".85" fill="#2aa82a"/><rect x="3.45" y="27.0" width="2.8" height=".85" fill="#2aa82a"/><rect x="3.45" y="25.8" width="2.8" height=".85" fill="#2aa82a"/><rect x="3.45" y="24.6" width="2.8" height=".85" fill="#2aa82a"/><rect x="3.45" y="23.4" width="2.8" height=".85" fill="#8cc820"/><rect x="3.45" y="22.2" width="2.8" height=".85" fill="#8cc820"/><rect x="3.45" y="21.0" width="2.8" height=".85" fill="#8cc820"/><rect x="3.45" y="19.8" width="2.8" height=".85" fill="#e8c020"/><rect x="3.45" y="18.6" width="2.8" height=".85" fill="#e8c020"/><rect x="3.45" y="17.4" width="2.8" height=".85" fill="#e8c020"/><rect x="3.45" y="16.2" width="2.8" height=".85" fill="#f08a18"/><rect x="3.45" y="15.0" width="2.8" height=".85" fill="#f08a18"/><rect x="6.90" y="28.2" width="2.8" height=".85" fill="#2aa82a"/><rect x="6.90" y="27.0" width="2.8" height=".85" fill="#2aa82a"/><rect x="6.90" y="25.8" width="2.8" height=".85" fill="#2aa82a"/><rect x="6.90" y="24.6" width="2.8" height=".85" fill="#2aa82a"/><rect x="6.90" y="23.4" width="2.8" height=".85" fill="#8cc820"/><rect x="6.90" y="22.2" width="2.8" height=".85" fill="#8cc820"/><rect x="6.90" y="21.0" width="2.8" height=".85" fill="#8cc820"/><rect x="6.90" y="19.8" width="2.8" height=".85" fill="#e8c020"/><rect x="6.90" y="18.6" width="2.8" height=".85" fill="#e8c020"/><rect x="10.35" y="28.2" width="2.8" height=".85" fill="#2aa82a"/><rect x="10.35" y="27.0" width="2.8" height=".85" fill="#2aa82a"/><rect x="10.35" y="25.8" width="2.8" height=".85" fill="#2aa82a"/><rect x="10.35" y="24.6" width="2.8" height=".85" fill="#2aa82a"/><rect x="10.35" y="23.4" width="2.8" height=".85" fill="#8cc820"/><rect x="13.80" y="28.2" width="2.8" height=".85" fill="#2aa82a"/><rect x="13.80" y="27.0" width="2.8" height=".85" fill="#2aa82a"/><rect x="13.80" y="25.8" width="2.8" height=".85" fill="#2aa82a"/><rect x="13.80" y="24.6" width="2.8" height=".85" fill="#2aa82a"/><rect x="17.25" y="28.2" width="2.8" height=".85" fill="#2aa82a"/><rect x="17.25" y="27.0" width="2.8" height=".85" fill="#2aa82a"/><rect x="17.25" y="25.8" width="2.8" height=".85" fill="#2aa82a"/><rect x="17.25" y="24.6" width="2.8" height=".85" fill="#2aa82a"/><rect x="17.25" y="23.4" width="2.8" height=".85" fill="#8cc820"/><rect x="20.70" y="28.2" width="2.8" height=".85" fill="#2aa82a"/><rect x="20.70" y="27.0" width="2.8" height=".85" fill="#2aa82a"/><rect x="20.70" y="25.8" width="2.8" height=".85" fill="#2aa82a"/><rect x="24.15" y="28.2" width="2.8" height=".85" fill="#2aa82a"/><rect x="24.15" y="27.0" width="2.8" height=".85" fill="#2aa82a"/><rect x="24.15" y="25.8" width="2.8" height=".85" fill="#2aa82a"/><rect x="24.15" y="24.6" width="2.8" height=".85" fill="#2aa82a"/><rect x="24.15" y="23.4" width="2.8" height=".85" fill="#8cc820"/><rect x="24.15" y="22.2" width="2.8" height=".85" fill="#8cc820"/><rect x="24.15" y="21.0" width="2.8" height=".85" fill="#8cc820"/><rect x="24.15" y="19.8" width="2.8" height=".85" fill="#e8c020"/><rect x="24.15" y="18.6" width="2.8" height=".85" fill="#e8c020"/><rect x="24.15" y="17.4" width="2.8" height=".85" fill="#e8c020"/><rect x="27.60" y="28.2" width="2.8" height=".85" fill="#2aa82a"/><rect x="27.60" y="27.0" width="2.8" height=".85" fill="#2aa82a"/><rect x="27.60" y="25.8" width="2.8" height=".85" fill="#2aa82a"/><rect x="27.60" y="24.6" width="2.8" height=".85" fill="#2aa82a"/><rect x="27.60" y="23.4" width="2.8" height=".85" fill="#8cc820"/><rect x="27.60" y="22.2" width="2.8" height=".85" fill="#8cc820"/><rect x="27.60" y="21.0" width="2.8" height=".85" fill="#8cc820"/><rect x="27.60" y="19.8" width="2.8" height=".85" fill="#e8c020"/><rect x="27.60" y="18.6" width="2.8" height=".85" fill="#e8c020"/><rect x="27.60" y="17.4" width="2.8" height=".85" fill="#e8c020"/><rect x="27.60" y="16.2" width="2.8" height=".85" fill="#f08a18"/><rect x="27.60" y="15.0" width="2.8" height=".85" fill="#f08a18"/><rect x="27.60" y="13.8" width="2.8" height=".85" fill="#f08a18"/><rect x="31.05" y="28.2" width="2.8" height=".85" fill="#2aa82a"/><rect x="31.05" y="27.0" width="2.8" height=".85" fill="#2aa82a"/><rect x="41.40" y="28.2" width="2.8" height=".85" fill="#2aa82a"/><rect x="41.40" y="27.0" width="2.8" height=".85" fill="#2aa82a"/><rect x="41.40" y="25.8" width="2.8" height=".85" fill="#2aa82a"/><rect x="44.85" y="28.2" width="2.8" height=".85" fill="#2aa82a"/><rect x="44.85" y="27.0" width="2.8" height=".85" fill="#2aa82a"/><rect x="44.85" y="25.8" width="2.8" height=".85" fill="#2aa82a"/><rect x="44.85" y="24.6" width="2.8" height=".85" fill="#2aa82a"/><rect x="44.85" y="23.4" width="2.8" height=".85" fill="#8cc820"/><rect x="44.85" y="22.2" width="2.8" height=".85" fill="#8cc820"/><rect x="44.85" y="21.0" width="2.8" height=".85" fill="#8cc820"/><rect x="44.85" y="19.8" width="2.8" height=".85" fill="#e8c020"/><rect x="44.85" y="18.6" width="2.8" height=".85" fill="#e8c020"/><rect x="44.85" y="17.4" width="2.8" height=".85" fill="#e8c020"/><rect x="48.30" y="28.2" width="2.8" height=".85" fill="#2aa82a"/><rect x="48.30" y="27.0" width="2.8" height=".85" fill="#2aa82a"/><rect x="48.30" y="25.8" width="2.8" height=".85" fill="#2aa82a"/><rect x="48.30" y="24.6" width="2.8" height=".85" fill="#2aa82a"/><rect x="48.30" y="23.4" width="2.8" height=".85" fill="#8cc820"/><rect x="48.30" y="22.2" width="2.8" height=".85" fill="#8cc820"/><rect x="51.75" y="28.2" width="2.8" height=".85" fill="#2aa82a"/><rect x="51.75" y="27.0" width="2.8" height=".85" fill="#2aa82a"/><rect x="51.75" y="25.8" width="2.8" height=".85" fill="#2aa82a"/><rect x="51.75" y="24.6" width="2.8" height=".85" fill="#2aa82a"/><rect x="51.75" y="23.4" width="2.8" height=".85" fill="#8cc820"/><rect x="55.20" y="28.2" width="2.8" height=".85" fill="#2aa82a"/><rect x="55.20" y="27.0" width="2.8" height=".85" fill="#2aa82a"/><rect x="55.20" y="25.8" width="2.8" height=".85" fill="#2aa82a"/><rect x="55.20" y="24.6" width="2.8" height=".85" fill="#2aa82a"/><rect x="55.20" y="23.4" width="2.8" height=".85" fill="#8cc820"/><rect x="55.20" y="22.2" width="2.8" height=".85" fill="#8cc820"/><rect x="55.20" y="21.0" width="2.8" height=".85" fill="#8cc820"/><rect x="55.20" y="19.8" width="2.8" height=".85" fill="#e8c020"/><rect x="55.20" y="18.6" width="2.8" height=".85" fill="#e8c020"/><rect x="55.20" y="17.4" width="2.8" height=".85" fill="#e8c020"/><rect x="55.20" y="16.2" width="2.8" height=".85" fill="#f08a18"/><rect x="55.20" y="15.0" width="2.8" height=".85" fill="#f08a18"/><rect x="58.65" y="28.2" width="2.8" height=".85" fill="#2aa82a"/><rect x="58.65" y="27.0" width="2.8" height=".85" fill="#2aa82a"/><rect x="58.65" y="25.8" width="2.8" height=".85" fill="#2aa82a"/><rect x="58.65" y="24.6" width="2.8" height=".85" fill="#2aa82a"/><rect x="58.65" y="23.4" width="2.8" height=".85" fill="#8cc820"/><rect x="58.65" y="22.2" width="2.8" height=".85" fill="#8cc820"/><rect x="58.65" y="21.0" width="2.8" height=".85" fill="#8cc820"/><rect x="58.65" y="19.8" width="2.8" height=".85" fill="#e8c020"/><rect x="58.65" y="18.6" width="2.8" height=".85" fill="#e8c020"/><rect x="62.10" y="28.2" width="2.8" height=".85" fill="#2aa82a"/><rect x="62.10" y="27.0" width="2.8" height=".85" fill="#2aa82a"/><rect x="62.10" y="25.8" width="2.8" height=".85" fill="#2aa82a"/><rect x="62.10" y="24.6" width="2.8" height=".85" fill="#2aa82a"/><rect x="65.55" y="28.2" width="2.8" height=".85" fill="#2aa82a"/><rect x="65.55" y="27.0" width="2.8" height=".85" fill="#2aa82a"/><rect x="65.55" y="25.8" width="2.8" height=".85" fill="#2aa82a"/><rect x="65.55" y="24.6" width="2.8" height=".85" fill="#2aa82a"/><rect x="65.55" y="23.4" width="2.8" height=".85" fill="#8cc820"/><rect x="65.55" y="22.2" width="2.8" height=".85" fill="#8cc820"/><rect x="65.55" y="21.0" width="2.8" height=".85" fill="#8cc820"/><rect x="65.55" y="19.8" width="2.8" height=".85" fill="#e8c020"/><rect x="65.55" y="18.6" width="2.8" height=".85" fill="#e8c020"/><rect x="65.55" y="17.4" width="2.8" height=".85" fill="#e8c020"/><rect x="65.55" y="16.2" width="2.8" height=".85" fill="#f08a18"/></g></svg>
<svg class="a" style="left:469px;top:401px" width="68.5" height="29" viewBox="0 0 68.5 29"><defs><radialGradient id="tn" cx=".82" cy=".62" r=".55"><stop offset="0" stop-color="#000"/><stop offset=".22" stop-color="#000"/><stop offset=".4" stop-color="#102a60"/><stop offset="1" stop-color="#050a18"/></radialGradient><filter id="tnb"><feGaussianBlur stdDeviation=".5"/></filter></defs><rect width="68.5" height="29" fill="url(#tn)"/><g filter="url(#tnb)"><line x1="56.9" y1="25.0" x2="56.5" y2="47.8" stroke="#4a90e0" stroke-width="1" opacity="0.31"/><line x1="56.5" y1="25.0" x2="54.9" y2="45.3" stroke="#4a90e0" stroke-width="1" opacity="0.33"/><line x1="55.8" y1="24.9" x2="52.1" y2="45.5" stroke="#4a90e0" stroke-width="1" opacity="0.39"/><line x1="54.9" y1="24.7" x2="48.1" y2="46.8" stroke="#d8f0ff" stroke-width="1" opacity="0.48"/><line x1="54.2" y1="24.4" x2="44.5" y2="46.8" stroke="#4a90e0" stroke-width="1" opacity="0.51"/><line x1="53.7" y1="24.2" x2="42.1" y2="45.6" stroke="#4a90e0" stroke-width="1" opacity="0.48"/><line x1="52.8" y1="23.6" x2="44.9" y2="34.2" stroke="#d8f0ff" stroke-width="1" opacity="0.56"/><line x1="52.4" y1="23.3" x2="41.8" y2="35.4" stroke="#4a90e0" stroke-width="1" opacity="0.68"/><line x1="52.0" y1="22.9" x2="35.1" y2="39.2" stroke="#d8f0ff" stroke-width="1" opacity="0.57"/><line x1="51.4" y1="22.2" x2="33.6" y2="35.4" stroke="#4a90e0" stroke-width="1" opacity="0.75"/><line x1="50.9" y1="21.5" x2="38.2" y2="28.8" stroke="#4a90e0" stroke-width="1" opacity="0.77"/><line x1="50.8" y1="21.2" x2="34.9" y2="29.5" stroke="#d8f0ff" stroke-width="1" opacity="0.65"/><line x1="50.4" y1="20.4" x2="31.2" y2="27.3" stroke="#d8f0ff" stroke-width="1" opacity="0.86"/><line x1="50.2" y1="19.7" x2="26.0" y2="25.7" stroke="#4a90e0" stroke-width="1" opacity="0.83"/><line x1="50.1" y1="19.1" x2="30.5" y2="22.3" stroke="#4a90e0" stroke-width="1" opacity="0.72"/><line x1="50.0" y1="18.2" x2="33.5" y2="18.6" stroke="#4a90e0" stroke-width="1" opacity="0.85"/><line x1="50.0" y1="17.6" x2="27.4" y2="16.2" stroke="#d8f0ff" stroke-width="1" opacity="0.72"/><line x1="50.1" y1="16.8" x2="33.3" y2="13.9" stroke="#d8f0ff" stroke-width="1" opacity="0.86"/><line x1="50.2" y1="16.2" x2="38.8" y2="13.2" stroke="#d8f0ff" stroke-width="1" opacity="0.75"/><line x1="50.5" y1="15.5" x2="30.2" y2="7.8" stroke="#4a90e0" stroke-width="1" opacity="0.64"/><line x1="50.8" y1="14.7" x2="31.1" y2="4.2" stroke="#4a90e0" stroke-width="1" opacity="0.73"/><line x1="51.1" y1="14.2" x2="37.1" y2="5.4" stroke="#d8f0ff" stroke-width="1" opacity="0.65"/><line x1="51.5" y1="13.7" x2="39.0" y2="4.1" stroke="#4a90e0" stroke-width="1" opacity="0.76"/><line x1="52.1" y1="13.0" x2="44.1" y2="5.1" stroke="#4a90e0" stroke-width="1" opacity="0.60"/><line x1="52.6" y1="12.5" x2="42.1" y2="-0.6" stroke="#4a90e0" stroke-width="1" opacity="0.62"/><line x1="53.0" y1="12.3" x2="43.7" y2="-1.2" stroke="#d8f0ff" stroke-width="1" opacity="0.61"/><line x1="53.8" y1="11.8" x2="46.3" y2="-3.0" stroke="#4a90e0" stroke-width="1" opacity="0.46"/><line x1="54.1" y1="11.6" x2="45.2" y2="-8.5" stroke="#4a90e0" stroke-width="1" opacity="0.53"/><line x1="55.3" y1="11.2" x2="51.8" y2="-2.3" stroke="#d8f0ff" stroke-width="1" opacity="0.42"/><line x1="55.5" y1="11.2" x2="50.6" y2="-10.9" stroke="#4a90e0" stroke-width="1" opacity="0.38"/><line x1="56.5" y1="11.0" x2="54.9" y2="-9.7" stroke="#4a90e0" stroke-width="1" opacity="0.33"/><line x1="57.3" y1="11.0" x2="57.9" y2="-1.4" stroke="#d8f0ff" stroke-width="1" opacity="0.32"/><line x1="57.9" y1="11.1" x2="59.4" y2="-1.0" stroke="#4a90e0" stroke-width="1" opacity="0.37"/><line x1="58.7" y1="11.2" x2="62.2" y2="-2.9" stroke="#4a90e0" stroke-width="1" opacity="0.42"/><line x1="59.3" y1="11.4" x2="65.0" y2="-4.4" stroke="#4a90e0" stroke-width="1" opacity="0.50"/><line x1="60.1" y1="11.7" x2="67.1" y2="-2.4" stroke="#d8f0ff" stroke-width="1" opacity="0.48"/><line x1="60.4" y1="11.9" x2="72.3" y2="-9.6" stroke="#4a90e0" stroke-width="1" opacity="0.51"/><line x1="61.0" y1="12.3" x2="72.4" y2="-3.8" stroke="#d8f0ff" stroke-width="1" opacity="0.54"/><line x1="61.8" y1="12.9" x2="75.2" y2="-1.3" stroke="#d8f0ff" stroke-width="1" opacity="0.70"/><line x1="62.1" y1="13.2" x2="70.8" y2="5.1" stroke="#4a90e0" stroke-width="1" opacity="0.60"/><line x1="0" y1="3.0" x2="40" y2="12.0" stroke="#1a3a80" stroke-width="1.4" opacity=".5"/><line x1="0" y1="6.5" x2="40" y2="13.4" stroke="#1a3a80" stroke-width="1.4" opacity=".5"/><line x1="0" y1="10.0" x2="40" y2="14.8" stroke="#1a3a80" stroke-width="1.4" opacity=".5"/><line x1="0" y1="13.5" x2="40" y2="16.2" stroke="#1a3a80" stroke-width="1.4" opacity=".5"/><line x1="0" y1="17.0" x2="40" y2="17.6" stroke="#1a3a80" stroke-width="1.4" opacity=".5"/><line x1="0" y1="20.5" x2="40" y2="19.0" stroke="#1a3a80" stroke-width="1.4" opacity=".5"/><line x1="0" y1="24.0" x2="40" y2="20.4" stroke="#1a3a80" stroke-width="1.4" opacity=".5"/><line x1="0" y1="27.5" x2="40" y2="21.8" stroke="#1a3a80" stroke-width="1.4" opacity=".5"/><circle cx="57" cy="18" r="7" fill="#000"/></g></svg></body></html>
